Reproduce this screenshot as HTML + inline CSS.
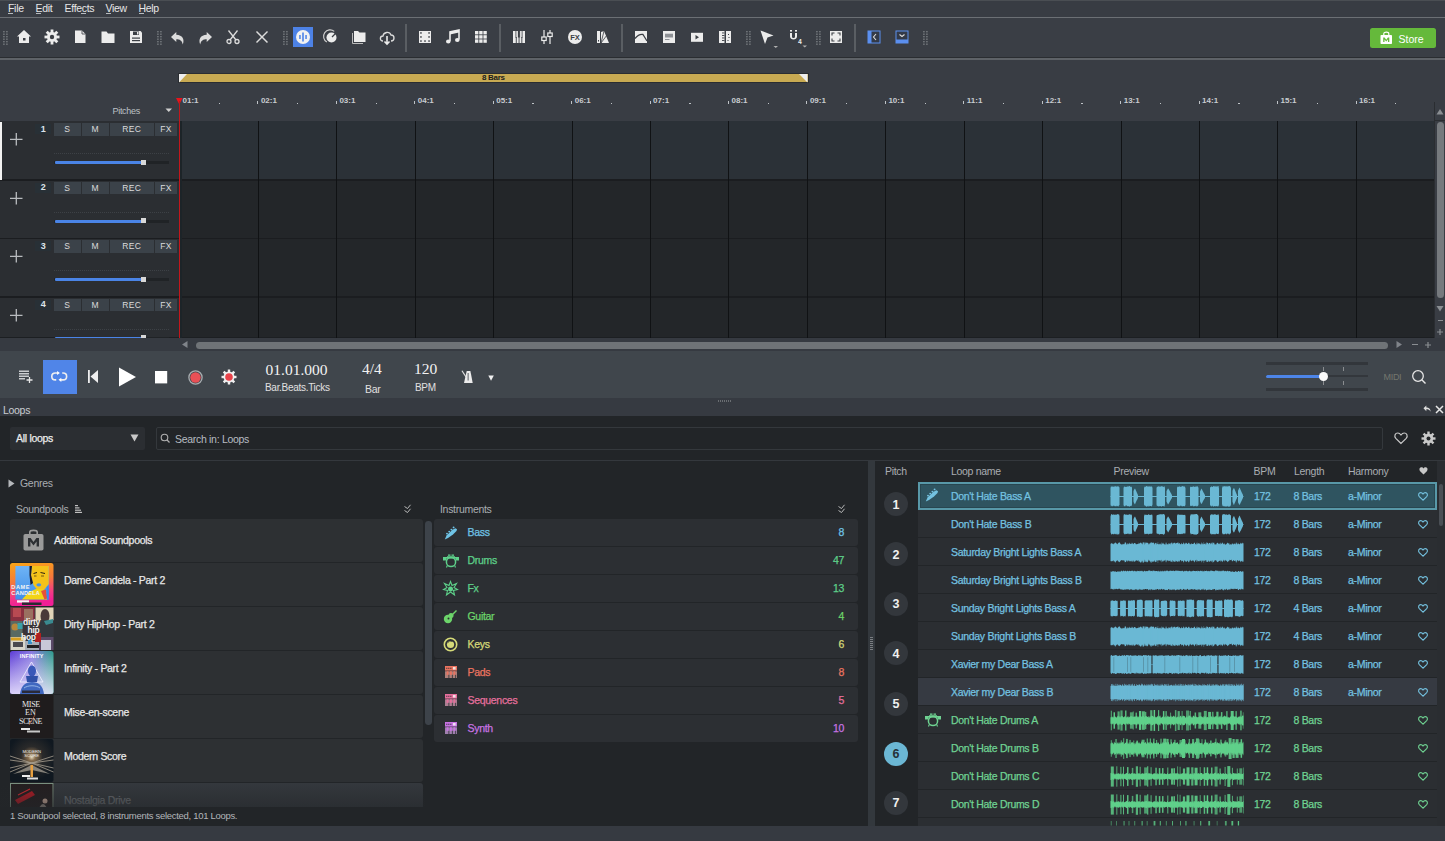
<!DOCTYPE html><html><head><meta charset="utf-8"><style>
*{margin:0;padding:0;box-sizing:border-box}
html,body{width:1445px;height:841px;overflow:hidden;background:#232629;font-family:"Liberation Sans",sans-serif;color:#d0d0d0}
.a{position:absolute}
span.a,.mn{letter-spacing:-0.3px;white-space:nowrap}
.sb{-webkit-text-stroke:0.25px currentColor}
svg{position:absolute;overflow:visible}
.mn{position:absolute;top:2px;font-size:10.5px;line-height:12px;color:#e6e6e6}
.tb{position:absolute;top:121px;width:179px;height:59px;background:#2b2e32}
.btn{position:absolute;height:12.5px;background:#3b4249;color:#dcdcdc;font-size:8.5px;text-align:center;line-height:13px;letter-spacing:.3px}
.rl{position:absolute;top:96px;font-size:8px;font-weight:bold;color:#c8ccd0}
.tk{position:absolute;width:1px;background:#bfc3c7}
</style></head><body>
<div class="a" style="left:0;top:0;width:1445px;height:17px;background:#383c43;border-top:1px solid #4a4e53"></div>
<span class="mn" style="left:8px">File</span>
<div class="a" style="left:8px;top:12.5px;width:5px;height:1px;background:#b8bcc0"></div>
<span class="mn" style="left:35.5px">Edit</span>
<div class="a" style="left:35.5px;top:12.5px;width:5px;height:1px;background:#b8bcc0"></div>
<span class="mn" style="left:64.5px">Effects</span>
<div class="a" style="left:81px;top:12.5px;width:4.5px;height:1px;background:#b8bcc0"></div>
<span class="mn" style="left:105.5px">View</span>
<div class="a" style="left:105.5px;top:12.5px;width:5.5px;height:1px;background:#b8bcc0"></div>
<span class="mn" style="left:138.5px">Help</span>
<div class="a" style="left:138.5px;top:12.5px;width:5.5px;height:1px;background:#b8bcc0"></div>
<div class="a" style="left:0;top:17px;width:1445px;height:1px;background:#6b6f74"></div>
<div class="a" style="left:0;top:18px;width:1445px;height:39px;background:#3a3e45"></div>
<div class="a" style="left:0;top:57px;width:1445px;height:1px;background:#2a2d31"></div>
<div class="a" style="left:0;top:58px;width:1445px;height:1.8px;background:#5e6267"></div>
<svg style="left:3.1px;top:30.5px" width="5" height="15"><rect x="0" y="0" width="1.8" height="1.4" fill="#6c7075"/><rect x="0" y="2.5" width="1.8" height="1.4" fill="#6c7075"/><rect x="0" y="5" width="1.8" height="1.4" fill="#6c7075"/><rect x="0" y="7.5" width="1.8" height="1.4" fill="#6c7075"/><rect x="0" y="10" width="1.8" height="1.4" fill="#6c7075"/><rect x="0" y="12.5" width="1.8" height="1.4" fill="#6c7075"/><rect x="3" y="0" width="1.8" height="1.4" fill="#6c7075"/><rect x="3" y="2.5" width="1.8" height="1.4" fill="#6c7075"/><rect x="3" y="5" width="1.8" height="1.4" fill="#6c7075"/><rect x="3" y="7.5" width="1.8" height="1.4" fill="#6c7075"/><rect x="3" y="10" width="1.8" height="1.4" fill="#6c7075"/><rect x="3" y="12.5" width="1.8" height="1.4" fill="#6c7075"/></svg>
<svg style="left:16.0px;top:29.0px" width="16" height="16" viewBox="0 0 16 16"><path d="M8 1 L15 7.5 L13 7.5 L13 14 L3 14 L3 7.5 L1 7.5 Z" fill="#ececec"/><rect x="7" y="9" width="2.5" height="2.5" fill="#3a3e44"/></svg>
<svg style="left:43.5px;top:29.0px" width="16" height="16" viewBox="0 0 16 16"><g fill="#ececec"><circle cx="8" cy="8" r="5"/><rect x="6.6" y="0.5" width="2.8" height="4" transform="rotate(0 8 8)"/><rect x="6.6" y="0.5" width="2.8" height="4" transform="rotate(45 8 8)"/><rect x="6.6" y="0.5" width="2.8" height="4" transform="rotate(90 8 8)"/><rect x="6.6" y="0.5" width="2.8" height="4" transform="rotate(135 8 8)"/><rect x="6.6" y="0.5" width="2.8" height="4" transform="rotate(180 8 8)"/><rect x="6.6" y="0.5" width="2.8" height="4" transform="rotate(225 8 8)"/><rect x="6.6" y="0.5" width="2.8" height="4" transform="rotate(270 8 8)"/><rect x="6.6" y="0.5" width="2.8" height="4" transform="rotate(315 8 8)"/></g><circle cx="8" cy="8" r="2.2" fill="#3a3e44"/></svg>
<svg style="left:72.0px;top:29.0px" width="16" height="16" viewBox="0 0 16 16"><path d="M3 1.5 L10 1.5 L13.5 5 L13.5 14 L3 14 Z" fill="#ececec"/><path d="M10 1.5 L10 5 L13.5 5" fill="none" stroke="#3a3e44" stroke-width="0.8"/></svg>
<svg style="left:100.0px;top:29.0px" width="16" height="16" viewBox="0 0 16 16"><path d="M1.5 2.5 L6.5 2.5 L8 4.5 L14.5 4.5 L14.5 14 L1.5 14 Z" fill="#ececec"/></svg>
<svg style="left:127.5px;top:29.0px" width="16" height="16" viewBox="0 0 16 16"><path d="M2 2 L12.5 2 L14 3.5 L14 14 L2 14 Z" fill="#ececec"/><rect x="5" y="2.5" width="6" height="3.5" fill="#3a3e44"/><rect x="9" y="3" width="1.5" height="2.5" fill="#ececec"/><rect x="4" y="8.5" width="8" height="1.2" fill="#3a3e44"/><rect x="4" y="11" width="8" height="1.2" fill="#3a3e44"/></svg>
<svg style="left:156.6px;top:30.5px" width="5" height="15"><rect x="0" y="0" width="1.8" height="1.4" fill="#6c7075"/><rect x="0" y="2.5" width="1.8" height="1.4" fill="#6c7075"/><rect x="0" y="5" width="1.8" height="1.4" fill="#6c7075"/><rect x="0" y="7.5" width="1.8" height="1.4" fill="#6c7075"/><rect x="0" y="10" width="1.8" height="1.4" fill="#6c7075"/><rect x="0" y="12.5" width="1.8" height="1.4" fill="#6c7075"/><rect x="3" y="0" width="1.8" height="1.4" fill="#6c7075"/><rect x="3" y="2.5" width="1.8" height="1.4" fill="#6c7075"/><rect x="3" y="5" width="1.8" height="1.4" fill="#6c7075"/><rect x="3" y="7.5" width="1.8" height="1.4" fill="#6c7075"/><rect x="3" y="10" width="1.8" height="1.4" fill="#6c7075"/><rect x="3" y="12.5" width="1.8" height="1.4" fill="#6c7075"/></svg>
<svg style="left:169.5px;top:30.0px" width="16" height="16" viewBox="0 0 16 16"><path d="M6.3 2 L1 7 L6.3 12 L6.3 9.2 C9.8 9.2 12 10.5 12.8 14.5 C14.8 9.5 12.5 5 6.3 4.8 Z" fill="#dcdcdc"/></svg>
<svg style="left:197.0px;top:30.0px" width="16" height="16" viewBox="0 0 16 16"><path d="M9.7 2 L15 7 L9.7 12 L9.7 9.2 C6.2 9.2 4 10.5 3.2 14.5 C1.2 9.5 3.5 5 9.7 4.8 Z" fill="#dcdcdc"/></svg>
<svg style="left:225.0px;top:29.0px" width="16" height="16" viewBox="0 0 16 16"><g stroke="#dcdcdc" stroke-width="1.3" fill="none"><path d="M3.5 1.5 L11 11"/><path d="M12.5 1.5 L5 11"/><circle cx="4" cy="12.5" r="2"/><circle cx="12" cy="12.5" r="2"/></g></svg>
<svg style="left:253.5px;top:29.0px" width="16" height="16" viewBox="0 0 16 16"><g stroke="#dcdcdc" stroke-width="1.5"><path d="M2.5 2.5 L13.5 13.5"/><path d="M13.5 2.5 L2.5 13.5"/></g></svg>
<svg style="left:282.6px;top:30.5px" width="5" height="15"><rect x="0" y="0" width="1.8" height="1.4" fill="#6c7075"/><rect x="0" y="2.5" width="1.8" height="1.4" fill="#6c7075"/><rect x="0" y="5" width="1.8" height="1.4" fill="#6c7075"/><rect x="0" y="7.5" width="1.8" height="1.4" fill="#6c7075"/><rect x="0" y="10" width="1.8" height="1.4" fill="#6c7075"/><rect x="0" y="12.5" width="1.8" height="1.4" fill="#6c7075"/><rect x="3" y="0" width="1.8" height="1.4" fill="#6c7075"/><rect x="3" y="2.5" width="1.8" height="1.4" fill="#6c7075"/><rect x="3" y="5" width="1.8" height="1.4" fill="#6c7075"/><rect x="3" y="7.5" width="1.8" height="1.4" fill="#6c7075"/><rect x="3" y="10" width="1.8" height="1.4" fill="#6c7075"/><rect x="3" y="12.5" width="1.8" height="1.4" fill="#6c7075"/></svg>
<div class="a" style="left:293px;top:27px;width:20px;height:20px;background:#4d82e6"></div>
<svg style="left:295.0px;top:29.0px" width="16" height="16" viewBox="0 0 16 16"><circle cx="8" cy="8" r="7" fill="#f2f2f2"/><g fill="#4d82e6"><rect x="4.2" y="6" width="1.5" height="4"/><rect x="7.2" y="3.5" width="1.6" height="9"/><rect x="10.3" y="6" width="1.5" height="4"/></g></svg>
<svg style="left:322.5px;top:29.0px" width="16" height="16" viewBox="0 0 16 16"><path d="M11.25 2.37 A6.5 6.5 0 1 0 3.82 12.98" fill="none" stroke="#d0d0d0" stroke-width="1.1"/><circle cx="8.5" cy="8.5" r="5" fill="#ececec"/><path d="M9 8 L12.5 4.5" stroke="#3a3e44" stroke-width="1.2"/></svg>
<svg style="left:351.0px;top:29.0px" width="16" height="16" viewBox="0 0 16 16"><path d="M1.5 4 L1.5 14.5 L12 14.5" fill="none" stroke="#bbb" stroke-width="1"/><path d="M3 2 L7 2 L8.5 3.5 L14.5 3.5 L14.5 13 L3 13 Z" fill="#ececec"/></svg>
<svg style="left:378.5px;top:28.5px" width="16" height="17" viewBox="0 0 16 17"><path d="M4 12 C0.5 12 0.5 7 4 7 C4.5 3 10.5 2 12 6 C16 6 16 12 12 12" fill="none" stroke="#dcdcdc" stroke-width="1.3"/><path d="M8 7 L8 15 M5.5 12.5 L8 15 L10.5 12.5" stroke="#ececec" stroke-width="1.6" fill="none"/></svg>
<div class="a" style="left:405px;top:24px;width:2px;height:28px;background:#5a5e63"></div>
<svg style="left:416.5px;top:29.0px" width="16" height="16" viewBox="0 0 16 16"><rect x="2" y="2" width="12" height="12" fill="#ececec"/><g fill="#3a3e44"><rect x="3.2" y="3.2" width="1.5" height="1.5"/><rect x="11.3" y="3.2" width="1.5" height="1.5"/><rect x="3.2" y="11.3" width="1.5" height="1.5"/><rect x="7.25" y="11.3" width="1.5" height="1.5"/><rect x="11.3" y="11.3" width="1.5" height="1.5"/><rect x="3.2" y="7.2" width="1.5" height="1.5"/><rect x="11.3" y="7.2" width="1.5" height="1.5"/></g></svg>
<svg style="left:444.5px;top:29.0px" width="16" height="16" viewBox="0 0 16 16"><path d="M5 12 L5 3 L14 1 L14 10.5" fill="none" stroke="#ececec" stroke-width="1.6"/><path d="M5 3 L14 1 L14 3.5 L5 5.5 Z" fill="#ececec"/><ellipse cx="3.3" cy="12.5" rx="2.3" ry="1.9" fill="#ececec"/><ellipse cx="12.3" cy="11" rx="2.3" ry="1.9" fill="#ececec"/></svg>
<svg style="left:472.5px;top:29.0px" width="16" height="16" viewBox="0 0 16 16"><rect x="2.0" y="2.0" width="3.4" height="3.4" fill="#ececec"/><rect x="2.0" y="6.2" width="3.4" height="3.4" fill="#ececec"/><rect x="2.0" y="10.4" width="3.4" height="3.4" fill="#ececec"/><rect x="6.2" y="2.0" width="3.4" height="3.4" fill="#ececec"/><rect x="6.2" y="6.2" width="3.4" height="3.4" fill="#ececec"/><rect x="6.2" y="10.4" width="3.4" height="3.4" fill="#ececec"/><rect x="10.4" y="2.0" width="3.4" height="3.4" fill="#ececec"/><rect x="10.4" y="6.2" width="3.4" height="3.4" fill="#ececec"/><rect x="10.4" y="10.4" width="3.4" height="3.4" fill="#ececec"/></svg>
<div class="a" style="left:499px;top:24px;width:2px;height:28px;background:#5a5e63"></div>
<svg style="left:511.0px;top:29.0px" width="16" height="16" viewBox="0 0 16 16"><rect x="2" y="2" width="12" height="12" fill="#ececec"/><g fill="#3a3e44"><rect x="4.8" y="8" width="0.9" height="6"/><rect x="7.6" y="8" width="0.9" height="6"/><rect x="10.4" y="8" width="0.9" height="6"/><rect x="4.2" y="2" width="1.9" height="6.5"/><rect x="7" y="2" width="1.9" height="6.5"/><rect x="9.9" y="2" width="1.9" height="6.5"/></g><g fill="#ececec"><rect x="4.6" y="2" width="1.1" height="6"/><rect x="10.3" y="2" width="1.1" height="6"/></g></svg>
<svg style="left:539.0px;top:29.0px" width="16" height="16" viewBox="0 0 16 16"><g stroke="#ececec" stroke-width="1.2"><path d="M5 1 L5 15"/><path d="M11 1 L11 15"/></g><rect x="2.8" y="8" width="4.4" height="3.5" fill="#3a3e44" stroke="#ececec" stroke-width="1.2"/><rect x="8.8" y="4" width="4.4" height="3.5" fill="#3a3e44" stroke="#ececec" stroke-width="1.2"/></svg>
<svg style="left:567.0px;top:29.0px" width="16" height="16" viewBox="0 0 16 16"><circle cx="8" cy="8" r="7" fill="#ececec"/><text x="8" y="10.8" text-anchor="middle" font-size="7.5" font-weight="bold" font-family="Liberation Sans" fill="#3a3e44">FX</text></svg>
<svg style="left:595.0px;top:29.0px" width="16" height="16" viewBox="0 0 16 16"><rect x="2" y="2" width="3" height="12" fill="#ececec"/><path d="M6 14 L6 3 L9 2 L14 14 Z" fill="#ececec"/><path d="M6 14 L9 2 M6 14 L12 6" stroke="#3a3e44" stroke-width="0.8"/><rect x="3" y="11" width="1" height="1.5" fill="#3a3e44"/></svg>
<div class="a" style="left:621px;top:24px;width:2px;height:28px;background:#5a5e63"></div>
<svg style="left:633.0px;top:29.0px" width="16" height="16" viewBox="0 0 16 16"><rect x="2" y="2" width="12" height="12" fill="#ececec"/><path d="M2 9.5 C4 7 7 5 10 5.5 L14 12" fill="none" stroke="#3a3e44" stroke-width="1.3"/></svg>
<svg style="left:661.0px;top:29.0px" width="16" height="16" viewBox="0 0 16 16"><rect x="2" y="2" width="12" height="12" fill="#ececec"/><rect x="4" y="4.7" width="8" height="3.8" fill="#8d9095"/><rect x="4" y="10" width="4.5" height="1" fill="#8d9095"/></svg>
<svg style="left:689.0px;top:29.0px" width="16" height="16" viewBox="0 0 16 16"><rect x="2" y="3.8" width="12" height="9" fill="#ececec"/><path d="M6.5 6 L10 8.3 L6.5 10.6 Z" fill="#3a3e44"/></svg>
<svg style="left:717.0px;top:29.0px" width="16" height="16" viewBox="0 0 16 16"><rect x="2" y="2" width="5.5" height="12" fill="#ececec"/><rect x="9" y="2" width="5" height="12" fill="#ececec"/><g fill="#3a3e44"><rect x="5" y="3.5" width="2.5" height="0.9"/><rect x="5" y="6" width="2.5" height="0.9"/><rect x="5" y="8.5" width="2.5" height="0.9"/><rect x="5" y="11" width="2.5" height="0.9"/><rect x="11" y="5" width="1" height="1"/><rect x="11.5" y="8" width="1" height="1"/><rect x="10.5" y="11" width="1" height="1"/></g></svg>
<svg style="left:745.6px;top:30.5px" width="5" height="15"><rect x="0" y="0" width="1.8" height="1.4" fill="#6c7075"/><rect x="0" y="2.5" width="1.8" height="1.4" fill="#6c7075"/><rect x="0" y="5" width="1.8" height="1.4" fill="#6c7075"/><rect x="0" y="7.5" width="1.8" height="1.4" fill="#6c7075"/><rect x="0" y="10" width="1.8" height="1.4" fill="#6c7075"/><rect x="0" y="12.5" width="1.8" height="1.4" fill="#6c7075"/><rect x="3" y="0" width="1.8" height="1.4" fill="#6c7075"/><rect x="3" y="2.5" width="1.8" height="1.4" fill="#6c7075"/><rect x="3" y="5" width="1.8" height="1.4" fill="#6c7075"/><rect x="3" y="7.5" width="1.8" height="1.4" fill="#6c7075"/><rect x="3" y="10" width="1.8" height="1.4" fill="#6c7075"/><rect x="3" y="12.5" width="1.8" height="1.4" fill="#6c7075"/></svg>
<svg style="left:758.7px;top:29.799999999999997px" width="20" height="19" viewBox="0 0 20 19"><path d="M1.5 0.5 L14.5 5.5 L8.5 7.5 L6 14 Z" fill="#ececec"/><path d="M14.5 16 L19 16 L16.75 18 Z" fill="#b0b0b0"/></svg>
<svg style="left:788.5px;top:30.0px" width="20" height="19" viewBox="0 0 20 19"><rect x="1" y="0" width="2" height="1.6" fill="#ececec"/><rect x="6" y="0" width="2" height="1.6" fill="#ececec"/><path d="M1 3 L3 3 L3 6.5 C3 8.5 6 8.5 6 6.5 L6 3 L8 3 L8 6.5 C8 10.5 1 10.5 1 6.5 Z" fill="#ececec"/><text x="9" y="14" font-size="6.5" font-weight="bold" font-family="Liberation Mono" fill="#ececec">4</text><path d="M13.5 15.5 L18 15.5 L15.75 17.5 Z" fill="#b0b0b0"/></svg>
<svg style="left:815.6px;top:30.5px" width="5" height="15"><rect x="0" y="0" width="1.8" height="1.4" fill="#6c7075"/><rect x="0" y="2.5" width="1.8" height="1.4" fill="#6c7075"/><rect x="0" y="5" width="1.8" height="1.4" fill="#6c7075"/><rect x="0" y="7.5" width="1.8" height="1.4" fill="#6c7075"/><rect x="0" y="10" width="1.8" height="1.4" fill="#6c7075"/><rect x="0" y="12.5" width="1.8" height="1.4" fill="#6c7075"/><rect x="3" y="0" width="1.8" height="1.4" fill="#6c7075"/><rect x="3" y="2.5" width="1.8" height="1.4" fill="#6c7075"/><rect x="3" y="5" width="1.8" height="1.4" fill="#6c7075"/><rect x="3" y="7.5" width="1.8" height="1.4" fill="#6c7075"/><rect x="3" y="10" width="1.8" height="1.4" fill="#6c7075"/><rect x="3" y="12.5" width="1.8" height="1.4" fill="#6c7075"/></svg>
<svg style="left:828.0px;top:29.0px" width="16" height="16" viewBox="0 0 16 16"><rect x="2" y="2" width="12" height="12" fill="#ececec"/><path d="M4 6.5 L4 4 L6.5 4 M9.5 4 L12 4 L12 6.5 M12 9.5 L12 12 L9.5 12 M6.5 12 L4 12 L4 9.5" fill="none" stroke="#3a3e44" stroke-width="1.1"/></svg>
<div class="a" style="left:854px;top:24px;width:2px;height:28px;background:#5a5e63"></div>
<svg style="left:866.0px;top:29.0px" width="16" height="16" viewBox="0 0 16 16"><rect x="2" y="2" width="12" height="12" fill="#333a48" stroke="#5b8fef" stroke-width="1"/><rect x="2" y="2" width="3.5" height="12" fill="#5b8fef"/><path d="M10 5 L7.5 8 L10 11" fill="none" stroke="#ddd" stroke-width="1.1"/></svg>
<svg style="left:894.0px;top:29.0px" width="16" height="16" viewBox="0 0 16 16"><rect x="2" y="2" width="12" height="12" fill="#333a48" stroke="#5b8fef" stroke-width="1"/><rect x="2" y="10.5" width="12" height="3.5" fill="#5b8fef"/><path d="M5.5 5.5 L8 7.5 L10.5 5.5" fill="none" stroke="#ddd" stroke-width="1.1"/></svg>
<svg style="left:923.1px;top:30.5px" width="5" height="15"><rect x="0" y="0" width="1.8" height="1.4" fill="#6c7075"/><rect x="0" y="2.5" width="1.8" height="1.4" fill="#6c7075"/><rect x="0" y="5" width="1.8" height="1.4" fill="#6c7075"/><rect x="0" y="7.5" width="1.8" height="1.4" fill="#6c7075"/><rect x="0" y="10" width="1.8" height="1.4" fill="#6c7075"/><rect x="0" y="12.5" width="1.8" height="1.4" fill="#6c7075"/><rect x="3" y="0" width="1.8" height="1.4" fill="#6c7075"/><rect x="3" y="2.5" width="1.8" height="1.4" fill="#6c7075"/><rect x="3" y="5" width="1.8" height="1.4" fill="#6c7075"/><rect x="3" y="7.5" width="1.8" height="1.4" fill="#6c7075"/><rect x="3" y="10" width="1.8" height="1.4" fill="#6c7075"/><rect x="3" y="12.5" width="1.8" height="1.4" fill="#6c7075"/></svg>
<div class="a" style="left:1369.5px;top:28px;width:66px;height:20px;background:#65b93b;border-radius:2.5px"></div>
<svg style="left:1380px;top:31px" width="13" height="14" viewBox="0 0 13 14"><path d="M3.8 4.5 L3.8 2.8 C3.8 0.6 8.8 0.6 8.8 2.8 L8.8 4.5" fill="none" stroke="#fff" stroke-width="1.2"/><rect x="0.5" y="4" width="11.5" height="9" rx="0.8" fill="#fff"/><path d="M3.2 11 L3.2 6.5 L4.6 6.5 L6.25 8.8 L7.9 6.5 L9.3 6.5 L9.3 11 L8 11 L8 8.6 L6.25 10.6 L4.5 8.6 L4.5 11 Z" fill="#65b93b"/></svg>
<span class="a" style="left:1398.5px;top:32.5px;font-size:10.5px;line-height:12px;color:#fff;letter-spacing:0">Store</span>
<div class="a" style="left:0;top:59.8px;width:1445px;height:61.2px;background:#393d44"></div>
<div class="a" style="left:178px;top:72.5px;width:631px;height:10.5px;background:#2a2d31"></div>
<div class="a" style="left:179px;top:73.5px;width:628.5px;height:8.5px;background:#c8aa52"></div>
<svg style="left:179px;top:73.5px" width="9" height="9"><path d="M0 0 L8 0 L0 8.5 Z" fill="#eeeeee"/></svg>
<svg style="left:799px;top:73.5px" width="9" height="9"><path d="M0 0 L8.5 0 L8.5 8.5 Z" fill="#eeeeee"/></svg>
<span class="a" style="left:482px;top:73px;font-size:8px;font-weight:bold;color:#1b1b1b;line-height:10px">8 Bars</span>
<span class="rl" style="left:182.5px;line-height:10px">01:1</span>
<div class="tk" style="left:218.7px;top:102.5px;height:1.5px;width:1.3px"></div>
<span class="rl" style="left:260.9px;line-height:10px">02:1</span>
<div class="tk" style="left:257.4px;top:101px;height:3px"></div>
<div class="tk" style="left:297.1px;top:102.5px;height:1.5px;width:1.3px"></div>
<span class="rl" style="left:339.4px;line-height:10px">03:1</span>
<div class="tk" style="left:335.9px;top:101px;height:3px"></div>
<div class="tk" style="left:375.6px;top:102.5px;height:1.5px;width:1.3px"></div>
<span class="rl" style="left:417.8px;line-height:10px">04:1</span>
<div class="tk" style="left:414.3px;top:101px;height:3px"></div>
<div class="tk" style="left:454.0px;top:102.5px;height:1.5px;width:1.3px"></div>
<span class="rl" style="left:496.2px;line-height:10px">05:1</span>
<div class="tk" style="left:492.7px;top:101px;height:3px"></div>
<div class="tk" style="left:532.4px;top:102.5px;height:1.5px;width:1.3px"></div>
<span class="rl" style="left:574.7px;line-height:10px">06:1</span>
<div class="tk" style="left:571.2px;top:101px;height:3px"></div>
<div class="tk" style="left:610.9px;top:102.5px;height:1.5px;width:1.3px"></div>
<span class="rl" style="left:653.1px;line-height:10px">07:1</span>
<div class="tk" style="left:649.6px;top:101px;height:3px"></div>
<div class="tk" style="left:689.3px;top:102.5px;height:1.5px;width:1.3px"></div>
<span class="rl" style="left:731.5px;line-height:10px">08:1</span>
<div class="tk" style="left:728.0px;top:101px;height:3px"></div>
<div class="tk" style="left:767.7px;top:102.5px;height:1.5px;width:1.3px"></div>
<span class="rl" style="left:809.9px;line-height:10px">09:1</span>
<div class="tk" style="left:806.4px;top:101px;height:3px"></div>
<div class="tk" style="left:846.1px;top:102.5px;height:1.5px;width:1.3px"></div>
<span class="rl" style="left:888.4px;line-height:10px">10:1</span>
<div class="tk" style="left:884.9px;top:101px;height:3px"></div>
<div class="tk" style="left:924.6px;top:102.5px;height:1.5px;width:1.3px"></div>
<span class="rl" style="left:966.8px;line-height:10px">11:1</span>
<div class="tk" style="left:963.3px;top:101px;height:3px"></div>
<div class="tk" style="left:1003.0px;top:102.5px;height:1.5px;width:1.3px"></div>
<span class="rl" style="left:1045.2px;line-height:10px">12:1</span>
<div class="tk" style="left:1041.7px;top:101px;height:3px"></div>
<div class="tk" style="left:1081.4px;top:102.5px;height:1.5px;width:1.3px"></div>
<span class="rl" style="left:1123.7px;line-height:10px">13:1</span>
<div class="tk" style="left:1120.2px;top:101px;height:3px"></div>
<div class="tk" style="left:1159.9px;top:102.5px;height:1.5px;width:1.3px"></div>
<span class="rl" style="left:1202.1px;line-height:10px">14:1</span>
<div class="tk" style="left:1198.6px;top:101px;height:3px"></div>
<div class="tk" style="left:1238.3px;top:102.5px;height:1.5px;width:1.3px"></div>
<span class="rl" style="left:1280.5px;line-height:10px">15:1</span>
<div class="tk" style="left:1277.0px;top:101px;height:3px"></div>
<div class="tk" style="left:1316.7px;top:102.5px;height:1.5px;width:1.3px"></div>
<span class="rl" style="left:1359.0px;line-height:10px">16:1</span>
<div class="tk" style="left:1355.5px;top:101px;height:3px"></div>
<div class="tk" style="left:1395.2px;top:102.5px;height:1.5px;width:1.3px"></div>
<span class="a" style="left:112.5px;top:105.5px;font-size:9px;color:#bcc0c4;line-height:11px">Pitches</span>
<svg style="left:165px;top:108px" width="8" height="5"><path d="M0.5 0.5 L7 0.5 L3.75 4 Z" fill="#cfcfcf"/></svg>
<svg style="left:176.3px;top:97.5px" width="7" height="7"><path d="M0 0 L6.6 0 L3.3 6.5 Z" fill="#e8141b"/></svg>
<div class="a" style="left:0;top:121px;width:1435px;height:217px;background:#1c1f22"></div>
<div class="a" style="left:0;top:121px;width:179px;height:59px;background:#2b2e32"></div>
<div class="a" style="left:179px;top:121px;width:1256px;height:59px;background:#2b3137"></div>
<svg style="left:10px;top:133px" width="13" height="13"><path d="M6.3 0 L6.3 12.5 M0 6.3 L12.5 6.3" stroke="#b9bcbf" stroke-width="1.3"/></svg>
<div class="a" style="left:34.5px;top:124px;width:16.3px;height:10.2px;background:#283036"></div>
<span class="a" style="left:34.5px;width:17px;text-align:center;top:123.5px;font-size:9px;font-weight:bold;color:#dde4ea;line-height:10px">1</span>
<div class="btn" style="left:53.5px;top:123.3px;width:27.5px">S</div>
<div class="btn" style="left:81.5px;top:123.3px;width:27.5px">M</div>
<div class="btn" style="left:110px;top:123.3px;width:43.5px">REC</div>
<div class="btn" style="left:155px;top:123.3px;width:22px">FX</div>
<div class="a" style="left:54px;top:153px;width:115px;height:1px;background:repeating-linear-gradient(90deg,#3d4146 0 1px,transparent 1px 2px)"></div>
<div class="a" style="left:54px;top:161px;width:115px;height:3px;background:#202326"></div>
<div class="a" style="left:54.5px;top:161px;width:88px;height:3px;background:#4a84e6;border-radius:1px"></div>
<div class="a" style="left:141px;top:159.5px;width:4.5px;height:5px;background:#d8d8d8"></div>
<div class="a" style="left:0;top:179.5px;width:179px;height:59px;background:#2b2e32"></div>
<div class="a" style="left:179px;top:179.5px;width:1256px;height:59px;background:#232629"></div>
<svg style="left:10px;top:191.5px" width="13" height="13"><path d="M6.3 0 L6.3 12.5 M0 6.3 L12.5 6.3" stroke="#b9bcbf" stroke-width="1.3"/></svg>
<div class="a" style="left:34.5px;top:182.5px;width:16.3px;height:10.2px;background:#283036"></div>
<span class="a" style="left:34.5px;width:17px;text-align:center;top:182.0px;font-size:9px;font-weight:bold;color:#dde4ea;line-height:10px">2</span>
<div class="btn" style="left:53.5px;top:181.8px;width:27.5px">S</div>
<div class="btn" style="left:81.5px;top:181.8px;width:27.5px">M</div>
<div class="btn" style="left:110px;top:181.8px;width:43.5px">REC</div>
<div class="btn" style="left:155px;top:181.8px;width:22px">FX</div>
<div class="a" style="left:54px;top:211.5px;width:115px;height:1px;background:repeating-linear-gradient(90deg,#3d4146 0 1px,transparent 1px 2px)"></div>
<div class="a" style="left:54px;top:219.5px;width:115px;height:3px;background:#202326"></div>
<div class="a" style="left:54.5px;top:219.5px;width:88px;height:3px;background:#4a84e6;border-radius:1px"></div>
<div class="a" style="left:141px;top:218.0px;width:4.5px;height:5px;background:#d8d8d8"></div>
<div class="a" style="left:0;top:238px;width:179px;height:59px;background:#2b2e32"></div>
<div class="a" style="left:179px;top:238px;width:1256px;height:59px;background:#232629"></div>
<svg style="left:10px;top:250px" width="13" height="13"><path d="M6.3 0 L6.3 12.5 M0 6.3 L12.5 6.3" stroke="#b9bcbf" stroke-width="1.3"/></svg>
<div class="a" style="left:34.5px;top:241px;width:16.3px;height:10.2px;background:#283036"></div>
<span class="a" style="left:34.5px;width:17px;text-align:center;top:240.5px;font-size:9px;font-weight:bold;color:#dde4ea;line-height:10px">3</span>
<div class="btn" style="left:53.5px;top:240.3px;width:27.5px">S</div>
<div class="btn" style="left:81.5px;top:240.3px;width:27.5px">M</div>
<div class="btn" style="left:110px;top:240.3px;width:43.5px">REC</div>
<div class="btn" style="left:155px;top:240.3px;width:22px">FX</div>
<div class="a" style="left:54px;top:270px;width:115px;height:1px;background:repeating-linear-gradient(90deg,#3d4146 0 1px,transparent 1px 2px)"></div>
<div class="a" style="left:54px;top:278px;width:115px;height:3px;background:#202326"></div>
<div class="a" style="left:54.5px;top:278px;width:88px;height:3px;background:#4a84e6;border-radius:1px"></div>
<div class="a" style="left:141px;top:276.5px;width:4.5px;height:5px;background:#d8d8d8"></div>
<div class="a" style="left:0;top:296.5px;width:179px;height:40px;background:#2b2e32"></div>
<div class="a" style="left:179px;top:296.5px;width:1256px;height:40px;background:#232629"></div>
<svg style="left:10px;top:308.5px" width="13" height="13"><path d="M6.3 0 L6.3 12.5 M0 6.3 L12.5 6.3" stroke="#b9bcbf" stroke-width="1.3"/></svg>
<div class="a" style="left:34.5px;top:299.5px;width:16.3px;height:10.2px;background:#283036"></div>
<span class="a" style="left:34.5px;width:17px;text-align:center;top:299.0px;font-size:9px;font-weight:bold;color:#dde4ea;line-height:10px">4</span>
<div class="btn" style="left:53.5px;top:298.8px;width:27.5px">S</div>
<div class="btn" style="left:81.5px;top:298.8px;width:27.5px">M</div>
<div class="btn" style="left:110px;top:298.8px;width:43.5px">REC</div>
<div class="btn" style="left:155px;top:298.8px;width:22px">FX</div>
<div class="a" style="left:54px;top:328.5px;width:115px;height:1px;background:repeating-linear-gradient(90deg,#3d4146 0 1px,transparent 1px 2px)"></div>
<div class="a" style="left:54px;top:336.5px;width:115px;height:3px;background:#202326"></div>
<div class="a" style="left:54.5px;top:336.5px;width:88px;height:3px;background:#4a84e6;border-radius:1px"></div>
<div class="a" style="left:141px;top:335.0px;width:4.5px;height:5px;background:#d8d8d8"></div>
<div class="a" style="left:0;top:179.1px;width:1435px;height:1.8px;background:#1b1d20"></div>
<div class="a" style="left:0;top:237.6px;width:1435px;height:1.8px;background:#1b1d20"></div>
<div class="a" style="left:0;top:296.1px;width:1435px;height:1.8px;background:#1b1d20"></div>
<div class="a" style="left:0;top:121.5px;width:1.5px;height:58.5px;background:#f2f2f2"></div>
<div class="a" style="left:257.7px;top:121px;width:1px;height:217px;background:#101214"></div>
<div class="a" style="left:336.2px;top:121px;width:1px;height:217px;background:#101214"></div>
<div class="a" style="left:414.6px;top:121px;width:1px;height:217px;background:#101214"></div>
<div class="a" style="left:493.0px;top:121px;width:1px;height:217px;background:#101214"></div>
<div class="a" style="left:571.5px;top:121px;width:1px;height:217px;background:#101214"></div>
<div class="a" style="left:649.9px;top:121px;width:1px;height:217px;background:#101214"></div>
<div class="a" style="left:728.3px;top:121px;width:1px;height:217px;background:#101214"></div>
<div class="a" style="left:806.7px;top:121px;width:1px;height:217px;background:#101214"></div>
<div class="a" style="left:885.2px;top:121px;width:1px;height:217px;background:#101214"></div>
<div class="a" style="left:963.6px;top:121px;width:1px;height:217px;background:#101214"></div>
<div class="a" style="left:1042.0px;top:121px;width:1px;height:217px;background:#101214"></div>
<div class="a" style="left:1120.5px;top:121px;width:1px;height:217px;background:#101214"></div>
<div class="a" style="left:1198.9px;top:121px;width:1px;height:217px;background:#101214"></div>
<div class="a" style="left:1277.3px;top:121px;width:1px;height:217px;background:#101214"></div>
<div class="a" style="left:1355.8px;top:121px;width:1px;height:217px;background:#101214"></div>
<div class="a" style="left:1434.2px;top:121px;width:1px;height:217px;background:#101214"></div>
<div class="a" style="left:180.3px;top:121px;width:1.7px;height:217px;background:#1c2428"></div>
<div class="a" style="left:178.8px;top:101px;width:1.6px;height:237px;background:#c4161b"></div>
<div class="a" style="left:1434.5px;top:102px;width:10.5px;height:236px;background:#393d44"></div>
<div class="a" style="left:1433.8px;top:102px;width:1.2px;height:236px;background:#2a2d31"></div>
<div class="a" style="left:1434.5px;top:119.5px;width:10.5px;height:1.5px;background:#2a2d31"></div>
<svg style="left:1435px;top:107.5px" width="10" height="8"><path d="M1.5 6.5 L8.5 6.5 L5 1 Z" fill="#8a8e92"/></svg>
<div class="a" style="left:1437px;top:122px;width:7px;height:176px;background:#767a7e;border-radius:3.5px"></div>
<svg style="left:1435px;top:305px" width="10" height="8"><path d="M1.5 1 L8.5 1 L5 6.5 Z" fill="#8a8e92"/></svg>
<div class="a" style="left:1437.5px;top:320px;width:5px;height:1.2px;background:#8a8e92"></div>
<svg style="left:1436px;top:328px" width="8" height="8"><path d="M4 1 L4 7 M1 4 L7 4" stroke="#8a8e92" stroke-width="1.2"/></svg>
<div class="a" style="left:0;top:338px;width:1445px;height:13px;background:#363a41"></div>
<div class="a" style="left:0;top:350.5px;width:1445px;height:47.8px;background:#40464c"></div>
<svg style="left:181px;top:340px" width="8" height="9"><path d="M6.5 1 L6.5 8 L1 4.5 Z" fill="#80848a"/></svg>
<div class="a" style="left:196px;top:341.5px;width:1192px;height:7px;background:#6f7377;border-radius:3.5px"></div>
<svg style="left:1395px;top:340px" width="8" height="9"><path d="M1.5 1 L1.5 8 L7 4.5 Z" fill="#80848a"/></svg>
<div class="a" style="left:1412px;top:344px;width:6px;height:1.2px;background:#8a8e92"></div>
<svg style="left:1424px;top:340.5px" width="8" height="8"><path d="M4 1 L4 7 M1 4 L7 4" stroke="#8a8e92" stroke-width="1.2"/></svg>
<svg style="left:19px;top:370px" width="14" height="14"><g fill="#c9cccf"><rect x="0" y="0.5" width="10" height="1.5"/><rect x="0" y="3" width="10" height="1.5"/><rect x="0" y="5.5" width="10" height="1.5"/><rect x="0" y="8" width="6" height="1.5"/></g><path d="M10.5 7 L10.5 13 M7.5 10 L13.5 10" stroke="#e6e6e6" stroke-width="1.3"/></svg>
<div class="a" style="left:42.8px;top:360.2px;width:34px;height:34px;background:#5085e8"></div>
<svg style="left:48.8px;top:369px" width="20" height="15" viewBox="-0.5 -0.5 20.5 15.5" transform="scale(0.88)"><path d="M8 3.2 L5.5 3.2 C2.5 3.2 1.3 5 1.3 7.2 C1.3 9.4 2.5 11.2 5.5 11.2 L6.5 11.2" fill="none" stroke="#eee" stroke-width="1.9"/><path d="M7.5 0.8 L10.8 3.2 L7.5 5.6 Z" fill="#fff"/><path d="M12 11.2 L14.5 11.2 C17.5 11.2 18.7 9.4 18.7 7.2 C18.7 5 17.5 3.2 14.5 3.2 L13.5 3.2" fill="none" stroke="#eee" stroke-width="1.9"/><path d="M12.5 8.8 L9.2 11.2 L12.5 13.6 Z" fill="#fff"/></svg>
<svg style="left:87px;top:369px" width="12" height="16"><rect x="1" y="1" width="1.8" height="13" fill="#eee"/><path d="M11 1 L3.5 7.5 L11 14 Z" fill="#eee"/></svg>
<svg style="left:118px;top:367px" width="20" height="20"><path d="M1 0.5 L18 10 L1 19.5 Z" fill="#fff"/></svg>
<svg style="left:154.3px;top:369.9px" width="14" height="14"><rect x="1" y="1" width="12.2" height="12.4" fill="#fff"/></svg>
<svg style="left:186.6px;top:368.5px" width="17" height="17"><circle cx="8.5" cy="8.5" r="6.6" fill="none" stroke="#a8adb0" stroke-width="1.3"/><circle cx="8.5" cy="8.5" r="5.2" fill="#e85056"/></svg>
<svg style="left:221px;top:369px" width="16" height="16"><g fill="#f0f0f0"><circle cx="8" cy="8" r="5.5"/><rect x="6.8" y="0.5" width="2.4" height="3.5" transform="rotate(0 8 8)"/><rect x="6.8" y="0.5" width="2.4" height="3.5" transform="rotate(45 8 8)"/><rect x="6.8" y="0.5" width="2.4" height="3.5" transform="rotate(90 8 8)"/><rect x="6.8" y="0.5" width="2.4" height="3.5" transform="rotate(135 8 8)"/><rect x="6.8" y="0.5" width="2.4" height="3.5" transform="rotate(180 8 8)"/><rect x="6.8" y="0.5" width="2.4" height="3.5" transform="rotate(225 8 8)"/><rect x="6.8" y="0.5" width="2.4" height="3.5" transform="rotate(270 8 8)"/><rect x="6.8" y="0.5" width="2.4" height="3.5" transform="rotate(315 8 8)"/></g><circle cx="8" cy="8" r="3.8" fill="#e8424a"/></svg>
<span class="a" style="left:265.5px;top:360.5px;font-family:'Liberation Serif',serif;letter-spacing:0;font-size:15.5px;color:#f2f2f2;line-height:17px">01.01.000</span>
<span class="a" style="left:265px;top:382px;font-size:10px;color:#e0e0e0;line-height:12px">Bar.Beats.Ticks</span>
<span class="a" style="left:362px;top:360px;font-family:'Liberation Serif',serif;letter-spacing:0;font-size:15.5px;color:#f2f2f2;line-height:17px">4/4</span>
<span class="a" style="left:365px;top:382.5px;font-size:10.5px;color:#e0e0e0;line-height:12px">Bar</span>
<span class="a" style="left:414px;top:360px;font-family:'Liberation Serif',serif;letter-spacing:0;font-size:15.5px;color:#f2f2f2;line-height:17px">120</span>
<span class="a" style="left:415px;top:382px;font-size:10px;color:#e0e0e0;line-height:12px">BPM</span>
<svg style="left:460px;top:369px" width="14" height="16"><path d="M6.7 2 L10.4 2 L12.7 14 L4 14 Z" fill="#ececec"/><rect x="7.5" y="4" width="1.3" height="7.5" fill="#7a7e82"/><path d="M2 1.8 L6.3 8.5" stroke="#e0e0e0" stroke-width="1.2"/></svg>
<svg style="left:487.5px;top:375px" width="7" height="7"><path d="M0.3 0.5 L5.8 0.5 L3.05 5.8 Z" fill="#f0f0f0"/></svg>
<div class="a" style="left:1266px;top:361.5px;width:102px;height:3px;background:#32363b"></div>
<div class="a" style="left:1266px;top:387.5px;width:102px;height:3px;background:#32363b"></div>
<div class="a" style="left:1266px;top:375px;width:102px;height:2px;background:#33373c"></div>
<div class="a" style="left:1266px;top:374.5px;width:57px;height:3px;background:#4d85e8;border-radius:1.5px"></div>
<div class="a" style="left:1322.5px;top:367px;width:1px;height:3.5px;background:#8a8d90"></div>
<div class="a" style="left:1322.5px;top:381px;width:1px;height:3.5px;background:#8a8d90"></div>
<div class="a" style="left:1343.1px;top:367px;width:1px;height:3.5px;background:#8a8d90"></div>
<div class="a" style="left:1343.1px;top:381px;width:1px;height:3.5px;background:#8a8d90"></div>
<div class="a" style="left:1318.5px;top:371.5px;width:9px;height:9px;background:#fafafa;border-radius:50%"></div>
<span class="a" style="left:1383.5px;top:372px;font-size:9px;color:#74766e;line-height:11px">MIDI</span>
<svg style="left:1411px;top:369px" width="16" height="16"><circle cx="7" cy="7" r="5.3" fill="none" stroke="#e6e6e6" stroke-width="1.3"/><path d="M10.8 10.8 L14.5 14.5" stroke="#e6e6e6" stroke-width="1.4"/></svg>
<div class="a" style="left:0;top:398.3px;width:1445px;height:17.9px;background:#363a41"></div>
<span class="a" style="left:3px;top:404px;font-size:10.5px;color:#c9ccd0;line-height:12px">Loops</span>
<div class="a" style="left:718px;top:399.5px;width:13px;height:2px;background:repeating-linear-gradient(90deg,#6a6e72 0 1px,transparent 1px 2px)"></div>
<svg style="left:1423px;top:405px" width="9" height="8"><path d="M8 7 C8 3.5 6 2.5 3.5 2.5 L3.5 0.5 L0.5 3.5 L3.5 6.5 L3.5 4.5 C5.5 4.5 7 5 8 7 Z" fill="#dcdcdc" transform="scale(0.95)"/></svg>
<svg style="left:1435px;top:405px" width="9" height="9"><path d="M1 1 L8 8 M8 1 L1 8" stroke="#e6e6e6" stroke-width="1.5"/></svg>
<div class="a" style="left:0;top:416.2px;width:1445px;height:409.3px;background:#222528"></div>
<div class="a" style="left:10px;top:427px;width:135px;height:23px;background:#2b2e32;border-radius:2px"></div>
<span class="a sb" style="left:16px;top:432px;font-size:10.5px;color:#eaeaea;line-height:12px">All loops</span>
<svg style="left:130px;top:434px" width="9" height="8"><path d="M0.5 0.5 L8.5 0.5 L4.5 7.5 Z" fill="#c8c8c8"/></svg>
<div class="a" style="left:155.5px;top:426.5px;width:1227px;height:23.5px;border:1px solid #34383c;border-radius:2px"></div>
<svg style="left:160px;top:433px" width="11" height="11"><circle cx="4.5" cy="4.5" r="3.3" fill="none" stroke="#b0b0b0" stroke-width="1.1"/><path d="M7 7 L9.5 9.5" stroke="#b0b0b0" stroke-width="1.2"/></svg>
<span class="a" style="left:175px;top:432.5px;font-size:10.5px;color:#b7bcc2;line-height:12px">Search in: Loops</span>
<svg style="left:1393.5px;top:432px" width="14" height="13"><path d="M7 11.5 L1.8 6.3 C-0.2 4 1.2 1 3.8 1 C5.3 1 6.3 2 7 3 C7.7 2 8.7 1 10.2 1 C12.8 1 14.2 4 12.2 6.3 Z" fill="none" stroke="#c8c8c8" stroke-width="1.2"/></svg>
<svg style="left:1421px;top:431px" width="15" height="15"><g fill="#c9c9c9"><circle cx="7.5" cy="7.5" r="4.8"/><rect x="6.3" y="0.5" width="2.4" height="3.5" transform="rotate(0 7.5 7.5)"/><rect x="6.3" y="0.5" width="2.4" height="3.5" transform="rotate(45 7.5 7.5)"/><rect x="6.3" y="0.5" width="2.4" height="3.5" transform="rotate(90 7.5 7.5)"/><rect x="6.3" y="0.5" width="2.4" height="3.5" transform="rotate(135 7.5 7.5)"/><rect x="6.3" y="0.5" width="2.4" height="3.5" transform="rotate(180 7.5 7.5)"/><rect x="6.3" y="0.5" width="2.4" height="3.5" transform="rotate(225 7.5 7.5)"/><rect x="6.3" y="0.5" width="2.4" height="3.5" transform="rotate(270 7.5 7.5)"/><rect x="6.3" y="0.5" width="2.4" height="3.5" transform="rotate(315 7.5 7.5)"/></g><circle cx="7.5" cy="7.5" r="2" fill="#232629"/></svg>
<div class="a" style="left:0;top:460px;width:1445px;height:1px;background:#34383d"></div>
<svg style="left:8px;top:478.5px" width="7" height="9"><path d="M0.5 0.5 L6.5 4.5 L0.5 8.5 Z" fill="#b5b8bb"/></svg>
<span class="a" style="left:20px;top:477px;font-size:10.5px;color:#a9adb2;line-height:12px">Genres</span>
<span class="a" style="left:16px;top:503px;font-size:10.5px;color:#a9adb2;line-height:12px">Soundpools</span>
<svg style="left:74.5px;top:505px" width="8" height="8"><g fill="#c0c0c0"><rect x="0" y="0" width="3" height="1.2"/><rect x="0" y="2.3" width="4.5" height="1.2"/><rect x="0" y="4.6" width="6" height="1.2"/><rect x="0" y="6.8" width="7" height="1.2"/></g></svg>
<svg style="left:403px;top:503.5px" width="9" height="10"><path d="M1.5 2.5 L4.5 4.5 L7.5 0.8 M1.5 6.5 L4.5 8.5 L7.5 4.8" fill="none" stroke="#c8c8c8" stroke-width="0.9"/></svg>
<svg style="left:837px;top:503.5px" width="9" height="10"><path d="M1.5 2.5 L4.5 4.5 L7.5 0.8 M1.5 6.5 L4.5 8.5 L7.5 4.8" fill="none" stroke="#c8c8c8" stroke-width="0.9"/></svg>
<span class="a" style="left:440px;top:503px;font-size:10.5px;color:#a9adb2;line-height:12px">Instruments</span>
<div class="a" style="left:10px;top:519px;width:412.5px;height:43px;background:#2d3033;border-radius:3px"></div>
<span class="a sb" style="left:54px;top:534px;font-size:10.5px;color:#e8e8e8;line-height:12px">Additional Soundpools</span>
<div class="a" style="left:10px;top:563px;width:412.5px;height:43px;background:#2d3033;border-radius:3px"></div>
<span class="a sb" style="left:64px;top:573.5px;font-size:10.5px;color:#e8e8e8;line-height:12px">Dame Candela - Part 2</span>
<div class="a" style="left:10px;top:607px;width:412.5px;height:43px;background:#2d3033;border-radius:3px"></div>
<span class="a sb" style="left:64px;top:617.5px;font-size:10.5px;color:#e8e8e8;line-height:12px">Dirty HipHop - Part 2</span>
<div class="a" style="left:10px;top:651px;width:412.5px;height:43px;background:#2d3033;border-radius:3px"></div>
<span class="a sb" style="left:64px;top:661.5px;font-size:10.5px;color:#e8e8e8;line-height:12px">Infinity - Part 2</span>
<div class="a" style="left:10px;top:695px;width:412.5px;height:43px;background:#2d3033;border-radius:3px"></div>
<span class="a sb" style="left:64px;top:705.5px;font-size:10.5px;color:#e8e8e8;line-height:12px">Mise-en-scene</span>
<div class="a" style="left:10px;top:739px;width:412.5px;height:43px;background:#2d3033;border-radius:3px"></div>
<span class="a sb" style="left:64px;top:749.5px;font-size:10.5px;color:#e8e8e8;line-height:12px">Modern Score</span>
<div class="a" style="left:10px;top:783px;width:412.5px;height:43px;background:#34383d;border-radius:3px"></div>
<span class="a sb" style="left:64px;top:793.5px;font-size:10.5px;color:#6d7074;line-height:12px">Nostalgia Drive</span>
<svg style="left:23px;top:529px" width="21" height="22" viewBox="0 0 21 22"><path d="M6.8 5.5 L6.8 3 C6.8 0.8 14.2 0.8 14.2 3 L14.2 5.5" fill="none" stroke="#9a9a9a" stroke-width="1.6"/><rect x="0.5" y="5" width="20" height="16.5" rx="1.8" fill="#9a9a9a"/><path d="M5 17.5 L5 9 L7.6 9 L10.5 13 L13.4 9 L16 9 L16 17.5 L13.6 17.5 L13.6 12.6 L10.5 16.5 L7.4 12.6 L7.4 17.5 Z" fill="#2c2f33"/></svg>
<svg style="left:10px;top:563px" width="43.5" height="43" viewBox="0 0 43.5 43"><defs><linearGradient id="g1" x1="0" y1="0" x2="0.15" y2="1"><stop offset="0" stop-color="#f9a516"/><stop offset="0.45" stop-color="#f77a3a"/><stop offset="0.8" stop-color="#f23a86"/><stop offset="1" stop-color="#f01f95"/></linearGradient><linearGradient id="g1b" x1="0" y1="0" x2="0" y2="1"><stop offset="0" stop-color="#6fb4f6"/><stop offset="1" stop-color="#3f8ee8"/></linearGradient></defs><rect width="43.5" height="43" rx="2.5" fill="url(#g1)"/><rect x="5.4" y="3" width="33.3" height="33.6" fill="url(#g1b)"/><path d="M21.5 3 L38.7 3 L38.7 21 L34 27 L28 28 L23.5 22 L21 14 Z" fill="#f4c21a"/><path d="M19.5 3 L22 3 L21 12 L23 20 L20.5 22 L19.5 12 Z" fill="#1a1a2a"/><path d="M12 36.6 L19 29 L26 26 L33 26.5 L37 36.6 Z" fill="#f2d417"/><path d="M23.5 10.5 L27 9.5 M30.5 9.5 L35 10.5" stroke="#2a1e10" stroke-width="1"/><path d="M24 13 L26.5 13 M31 13 L34 13" stroke="#3a2a10" stroke-width="0.7"/><ellipse cx="28.8" cy="21.8" rx="2.4" ry="1.6" fill="#4a92e6"/><path d="M31 28 L36 26.5 L37 35.5 L34.5 36.6 Z" fill="#e8503a"/><path d="M36.5 24 L38.7 22 L38.7 36.6 L37 36.6 Z" fill="#3a8ae8"/><text x="1.3" y="25.8" font-size="5.6" font-weight="bold" letter-spacing="0.6" fill="#f4f4f4" font-family="Liberation Sans">DAME</text><text x="1.3" y="31.6" font-size="5.6" font-weight="bold" letter-spacing="0.2" fill="#f4f4f4" font-family="Liberation Sans">CANDELA</text><rect x="7" y="37.3" width="12" height="2.3" fill="#f6f6f6"/><rect x="12" y="39.5" width="19.5" height="2.5" fill="#2a2a30"/></svg>
<svg style="left:10px;top:607px" width="43.5" height="43" viewBox="0 0 43.5 43"><rect width="43.5" height="43" fill="#3a3438"/><rect x="0.5" y="0.5" width="24" height="13.5" fill="#8a3040"/><rect x="3" y="1" width="8" height="9" fill="#b84a52"/><rect x="14" y="2" width="9" height="11" fill="#9a7060"/><rect x="25.5" y="0.5" width="18" height="13" fill="#e0d4b8"/><ellipse cx="35" cy="9" rx="4.5" ry="7" fill="#4a3a38"/><rect x="30" y="13" width="13.5" height="18" fill="#32383e"/><path d="M34 14 L43 12 L43 16 L36 18 Z" fill="#3a8a90"/><rect x="0.5" y="14" width="12" height="17" fill="#5a6a62"/><circle cx="5" cy="20" r="3.5" fill="#b8863a"/><rect x="7.5" y="16" width="5" height="6" fill="#3aa0a8"/><rect x="0.5" y="30" width="15" height="13" fill="#d8d6ca"/><rect x="1" y="30.5" width="12" height="3" fill="#d8a020"/><rect x="3" y="35" width="10" height="5" fill="#4a4a50"/><rect x="15" y="34" width="14" height="9" fill="#a8b0b8"/><rect x="18" y="33" width="4" height="4" fill="#3a90c8"/><rect x="29" y="30" width="14.5" height="13" fill="#5a4a68"/><rect x="31" y="33" width="10" height="10" fill="#c8c8d8"/><rect x="25" y="26" width="6" height="9" fill="#b02020"/><g font-family="Liberation Sans" font-weight="bold" fill="#f2f2f2" letter-spacing="-0.3"><text x="13" y="18" font-size="8.5">dirty</text><text x="17.5" y="25.5" font-size="8.5">hip</text><text x="11" y="32.5" font-size="8.5">hop</text></g><rect x="17" y="38" width="12" height="3" fill="#222"/></svg>
<svg style="left:10px;top:651px" width="43.5" height="43" viewBox="0 0 43.5 43"><defs><linearGradient id="g3" x1="0" y1="0" x2="1" y2="0"><stop offset="0" stop-color="#5a3ad6"/><stop offset="0.5" stop-color="#8a7ae0"/><stop offset="1" stop-color="#2a9a8a"/></linearGradient><linearGradient id="g3b" x1="0" y1="0" x2="0" y2="1"><stop offset="0" stop-color="#fff" stop-opacity="0"/><stop offset="1" stop-color="#f0eaff" stop-opacity="0.85"/></linearGradient></defs><rect width="43.5" height="43" rx="2.5" fill="url(#g3)"/><rect width="43.5" height="43" rx="2.5" fill="url(#g3b)"/><path d="M21.5 11 L33 31 L10 31 Z" fill="none" stroke="#f2f2ff" stroke-width="0.8"/><ellipse cx="22" cy="20" rx="4" ry="5.5" fill="#3a58b8"/><path d="M16 25 L28 25 L27 31 L17 31 Z" fill="#3050a8"/><path d="M10 43 C11 35 15 31 22 31 C29 31 33 35 34 43 Z" fill="#4068c0"/><path d="M14 37 C18 34 26 34 30 37" stroke="#a8c8f0" stroke-width="0.8" fill="none"/><text x="21.7" y="7" text-anchor="middle" font-size="5.5" font-weight="bold" letter-spacing="0.1" fill="#fff" font-family="Liberation Sans">INFINITY</text><rect x="12" y="39.5" width="18" height="2.5" fill="#2a2a38"/></svg>
<svg style="left:10px;top:695px" width="43.5" height="43" viewBox="0 0 43.5 43"><rect width="43.5" height="43" fill="#1f1c1d"/><text x="12" y="12" font-size="8" fill="#eaeaea" font-family="Liberation Serif" letter-spacing="-0.3">MISE</text><text x="15" y="20" font-size="8" fill="#eaeaea" font-family="Liberation Serif">EN</text><text x="9" y="28.5" font-size="8" fill="#eaeaea" font-family="Liberation Serif" letter-spacing="-0.5">SCENE</text><path d="M25 20 L19 30" stroke="#d06a3a" stroke-width="0.7"/><rect x="11" y="33" width="9" height="2" fill="#e8e8e8"/><rect x="17" y="35.5" width="13" height="2" fill="#c8c8c8"/></svg>
<svg style="left:10px;top:739px" width="43.5" height="43" viewBox="0 0 43.5 43"><defs><radialGradient id="g5" cx="0.5" cy="0.42" r="0.55"><stop offset="0" stop-color="#e8dcc0"/><stop offset="0.15" stop-color="#8a7050"/><stop offset="0.45" stop-color="#2a2a2a"/><stop offset="1" stop-color="#101820"/></radialGradient></defs><rect width="43.5" height="43" rx="2" fill="url(#g5)"/><path d="M0 17 L21.7 24 L43.5 17 M0 33 L21.7 24 L43.5 33 M0 21 L21.7 24 L43.5 21 M0 29 L21.7 24 L43.5 29" stroke="#a8a090" stroke-width="0.8" fill="none"/><path d="M3 35 L21.7 26 L40 35 L21.7 31 Z" fill="#c8c0b0" opacity="0.6"/><rect x="20.5" y="26" width="2.5" height="12" fill="#e8a040"/><text x="21.7" y="13.5" text-anchor="middle" font-size="4.2" fill="#eee" font-family="Liberation Sans">MODERN</text><text x="21.7" y="18" text-anchor="middle" font-size="4.2" fill="#eee" font-family="Liberation Sans">SCORE</text><rect x="12" y="36" width="8" height="2" fill="#eee"/><rect x="17" y="38.5" width="11" height="2" fill="#ddd"/></svg>
<svg style="left:10px;top:783px" width="43.5" height="43" viewBox="0 0 43.5 43"><rect width="43.5" height="43" fill="#241e20"/><rect x="0.5" y="0.5" width="42.5" height="42" fill="none" stroke="#7a9080" stroke-width="1"/><path d="M5 17 L22 8 L25 12 L8 21 Z" fill="#b01a24"/><path d="M8 12 L20 6" stroke="#d02a30" stroke-width="1.2"/><ellipse cx="33" cy="30" rx="4.5" ry="9" fill="#9a9088"/><circle cx="35" cy="18" r="2.5" fill="#c8a898"/></svg>
<div class="a" style="left:0;top:783px;width:425px;height:24px;background:linear-gradient(180deg,rgba(35,38,41,0) 0%,rgba(35,38,41,0.55) 100%)"></div>
<div class="a" style="left:0;top:806.5px;width:868px;height:19px;background:#222528"></div>
<span class="a" style="left:10px;top:810px;font-size:9.5px;color:#b2b6ba;line-height:12px">1 Soundpool selected, 8 instruments selected, 101 Loops.</span>
<div class="a" style="left:425px;top:521px;width:6.8px;height:204px;background:#3d434a;border-radius:3.4px"></div>
<div class="a" style="left:433.5px;top:519px;width:424px;height:26.5px;background:#2c2f33;border-radius:3px"></div>
<span class="a sb" style="left:467.5px;top:526px;font-size:10.5px;color:#6fc3e6;line-height:12px">Bass</span>
<span class="a sb" style="left:780px;width:64px;text-align:right;top:526px;font-size:10.5px;color:#6fc3e6;line-height:12px">8</span>
<div class="a" style="left:433.5px;top:547px;width:424px;height:26.5px;background:#2c2f33;border-radius:3px"></div>
<span class="a sb" style="left:467.5px;top:554px;font-size:10.5px;color:#5ed08a;line-height:12px">Drums</span>
<span class="a sb" style="left:780px;width:64px;text-align:right;top:554px;font-size:10.5px;color:#5ed08a;line-height:12px">47</span>
<div class="a" style="left:433.5px;top:575px;width:424px;height:26.5px;background:#2c2f33;border-radius:3px"></div>
<span class="a sb" style="left:467.5px;top:582px;font-size:10.5px;color:#5ed08a;line-height:12px">Fx</span>
<span class="a sb" style="left:780px;width:64px;text-align:right;top:582px;font-size:10.5px;color:#5ed08a;line-height:12px">13</span>
<div class="a" style="left:433.5px;top:603px;width:424px;height:26.5px;background:#2c2f33;border-radius:3px"></div>
<span class="a sb" style="left:467.5px;top:610px;font-size:10.5px;color:#6cd46a;line-height:12px">Guitar</span>
<span class="a sb" style="left:780px;width:64px;text-align:right;top:610px;font-size:10.5px;color:#6cd46a;line-height:12px">4</span>
<div class="a" style="left:433.5px;top:631px;width:424px;height:26.5px;background:#2c2f33;border-radius:3px"></div>
<span class="a sb" style="left:467.5px;top:638px;font-size:10.5px;color:#d5da78;line-height:12px">Keys</span>
<span class="a sb" style="left:780px;width:64px;text-align:right;top:638px;font-size:10.5px;color:#d5da78;line-height:12px">6</span>
<div class="a" style="left:433.5px;top:659px;width:424px;height:26.5px;background:#2c2f33;border-radius:3px"></div>
<span class="a sb" style="left:467.5px;top:666px;font-size:10.5px;color:#ea7460;line-height:12px">Pads</span>
<span class="a sb" style="left:780px;width:64px;text-align:right;top:666px;font-size:10.5px;color:#ea7460;line-height:12px">8</span>
<div class="a" style="left:433.5px;top:687px;width:424px;height:26.5px;background:#2c2f33;border-radius:3px"></div>
<span class="a sb" style="left:467.5px;top:694px;font-size:10.5px;color:#e56f9c;line-height:12px">Sequences</span>
<span class="a sb" style="left:780px;width:64px;text-align:right;top:694px;font-size:10.5px;color:#e56f9c;line-height:12px">5</span>
<div class="a" style="left:433.5px;top:715px;width:424px;height:26.5px;background:#2c2f33;border-radius:3px"></div>
<span class="a sb" style="left:467.5px;top:722px;font-size:10.5px;color:#c873e3;line-height:12px">Synth</span>
<span class="a sb" style="left:780px;width:64px;text-align:right;top:722px;font-size:10.5px;color:#c873e3;line-height:12px">10</span>
<svg style="left:443.5px;top:525.5px" width="14" height="14" viewBox="0 0 14 14"><path d="M0.8 13.5 L2.5 9.5 L8.5 3.8 L11.5 2.2 L13 3.2 L12.5 5 L9 8.5 L4 12 Z" fill="#6fc3e6"/><g fill="#6fc3e6"><circle cx="3" cy="7.6" r="0.95"/><circle cx="5.2" cy="5.6" r="0.95"/><circle cx="7.4" cy="3.6" r="0.95"/><circle cx="9.6" cy="1.4" r="0.95"/></g></svg>
<svg style="left:443px;top:553.5px" width="16" height="14" viewBox="0 0 16 14"><rect x="5" y="0.5" width="2.5" height="1.3" fill="#5ed08a"/><rect x="8.5" y="0.5" width="2.5" height="1.3" fill="#5ed08a"/><path d="M0 3 L4 3 L4 2.3 L12 2.3 L12 3 L16 3 L16 6.5 L12.5 6.5 L12.5 4.5 L3.5 4.5 L3.5 6.5 L0 6.5 Z" fill="#5ed08a"/><circle cx="8" cy="8" r="4.6" fill="none" stroke="#5ed08a" stroke-width="1.5"/><path d="M4.3 11.5 L3.5 13.5 M11.7 11.5 L12.5 13.5" stroke="#5ed08a" stroke-width="1.1"/></svg>
<svg style="left:443px;top:581px" width="15" height="15" viewBox="0 0 15 15"><path d="M7.5 0.5 L9 4.5 L13.5 2.5 L11 6.5 L14.5 8.5 L10.5 9.5 L11.5 14 L7.5 11 L3.5 14 L4.5 9.5 L0.5 8.5 L4 6.5 L1.5 2.5 L6 4.5 Z" fill="none" stroke="#5ed08a" stroke-width="1.1"/><circle cx="7.5" cy="8" r="2.5" fill="#5ed08a"/></svg>
<svg style="left:443px;top:608.5px" width="15" height="15" viewBox="0 0 15 15"><path d="M8 7 L13.5 1.5" stroke="#6cd46a" stroke-width="1.5"/><circle cx="5" cy="10" r="4.2" fill="#6cd46a"/><circle cx="8" cy="6.5" r="2.5" fill="#6cd46a"/><circle cx="5.5" cy="9.5" r="1" fill="#2c2f33"/></svg>
<svg style="left:443px;top:636.5px" width="15" height="15" viewBox="0 0 15 15"><circle cx="7.5" cy="7.5" r="6.2" fill="none" stroke="#d5da78" stroke-width="1.6"/><circle cx="7.5" cy="7.5" r="3.6" fill="#d5da78"/><path d="M4.6 5.8 A3.6 3.6 0 0 1 9.5 4.4" fill="none" stroke="#2c2f33" stroke-width="0.9"/></svg>
<svg style="left:443.5px;top:665px" width="14" height="14" viewBox="0 0 14 14"><rect x="1" y="1" width="12" height="4.6" fill="#ea7460"/><g fill="#2c2f33" opacity="0.8"><rect x="2.2" y="2.7" width="1.2" height="1.2"/><rect x="4.2" y="2.7" width="1.2" height="1.2"/><rect x="6.2" y="2.7" width="1.2" height="1.2"/></g><rect x="9" y="2" width="2.6" height="2.6" fill="#f4f4f4" opacity="0.85"/><rect x="1" y="6.3" width="12" height="6.7" fill="#ea7460" opacity="0.55"/><rect x="1" y="6.3" width="12" height="6.7" fill="#fff" opacity="0.25"/><g fill="#ea7460"><rect x="2.6" y="6.3" width="1.9" height="3.6"/><rect x="6" y="6.3" width="1.9" height="3.6"/><rect x="9.4" y="6.3" width="1.9" height="3.6"/></g><g fill="#2c2f33"><rect x="4.5" y="9.8" width="0.8" height="3.2"/><rect x="7.9" y="9.8" width="0.8" height="3.2"/><rect x="11.3" y="9.8" width="0.8" height="3.2"/></g></svg>
<svg style="left:443.5px;top:693px" width="14" height="14" viewBox="0 0 14 14"><rect x="1" y="1" width="12" height="4.6" fill="#e56f9c"/><g fill="#2c2f33" opacity="0.8"><rect x="2.2" y="2.7" width="1.2" height="1.2"/><rect x="4.2" y="2.7" width="1.2" height="1.2"/><rect x="6.2" y="2.7" width="1.2" height="1.2"/></g><rect x="9" y="2" width="2.6" height="2.6" fill="#f4f4f4" opacity="0.85"/><rect x="1" y="6.3" width="12" height="6.7" fill="#e56f9c" opacity="0.55"/><rect x="1" y="6.3" width="12" height="6.7" fill="#fff" opacity="0.25"/><g fill="#e56f9c"><rect x="2.6" y="6.3" width="1.9" height="3.6"/><rect x="6" y="6.3" width="1.9" height="3.6"/><rect x="9.4" y="6.3" width="1.9" height="3.6"/></g><g fill="#2c2f33"><rect x="4.5" y="9.8" width="0.8" height="3.2"/><rect x="7.9" y="9.8" width="0.8" height="3.2"/><rect x="11.3" y="9.8" width="0.8" height="3.2"/></g></svg>
<svg style="left:443.5px;top:721px" width="14" height="14" viewBox="0 0 14 14"><rect x="1" y="1" width="12" height="4.6" fill="#c873e3"/><g fill="#2c2f33" opacity="0.8"><rect x="2.2" y="2.7" width="1.2" height="1.2"/><rect x="4.2" y="2.7" width="1.2" height="1.2"/><rect x="6.2" y="2.7" width="1.2" height="1.2"/></g><rect x="9" y="2" width="2.6" height="2.6" fill="#f4f4f4" opacity="0.85"/><rect x="1" y="6.3" width="12" height="6.7" fill="#c873e3" opacity="0.55"/><rect x="1" y="6.3" width="12" height="6.7" fill="#fff" opacity="0.25"/><g fill="#c873e3"><rect x="2.6" y="6.3" width="1.9" height="3.6"/><rect x="6" y="6.3" width="1.9" height="3.6"/><rect x="9.4" y="6.3" width="1.9" height="3.6"/></g><g fill="#2c2f33"><rect x="4.5" y="9.8" width="0.8" height="3.2"/><rect x="7.9" y="9.8" width="0.8" height="3.2"/><rect x="11.3" y="9.8" width="0.8" height="3.2"/></g></svg>
<div class="a" style="left:868px;top:461px;width:6.5px;height:367px;background:#33383d"></div>
<div class="a" style="left:869.5px;top:637px;width:3px;height:13px;background:repeating-linear-gradient(180deg,#7a7e82 0 1px,transparent 1px 2px)"></div>
<div class="a" style="left:0;top:825.5px;width:1445px;height:15.5px;background:#363a41"></div>
<span class="a" style="left:885px;top:464.5px;font-size:10.5px;color:#a9adb2;line-height:12px">Pitch</span>
<span class="a" style="left:951px;top:464.5px;font-size:10.5px;color:#a9adb2;line-height:12px">Loop name</span>
<span class="a" style="left:1113.5px;top:464.5px;font-size:10.5px;color:#a9adb2;line-height:12px">Preview</span>
<span class="a" style="left:1253.5px;top:464.5px;font-size:10.5px;color:#a9adb2;line-height:12px">BPM</span>
<span class="a" style="left:1294px;top:464.5px;font-size:10.5px;color:#a9adb2;line-height:12px">Length</span>
<span class="a" style="left:1348px;top:464.5px;font-size:10.5px;color:#a9adb2;line-height:12px">Harmony</span>
<svg style="left:1418.5px;top:467px" width="9" height="8" viewBox="0 0 10 9"><path d="M5 8.5 L1.2 4.7 C-0.3 3 0.6 0.4 2.7 0.4 C3.8 0.4 4.5 1 5 1.8 C5.5 1 6.2 0.4 7.3 0.4 C9.4 0.4 10.3 3 8.8 4.7 Z" fill="#c8c8c8"/></svg>
<div class="a" style="left:917.5px;top:482px;width:519.5px;height:28px;background:#2f5460;border:2px solid #5898a8"></div>
<div class="a" style="left:919.5px;top:484px;width:515.5px;height:24px;border:1px solid #284650"></div>
<span class="a sb" style="left:951px;top:490px;font-size:10.5px;color:#74c2e0;line-height:12px;white-space:nowrap">Don't Hate Bass A</span>
<span class="a sb" style="left:1254px;top:490px;font-size:10.5px;color:#74c2e0;line-height:12px">172</span>
<span class="a sb" style="left:1293.5px;top:490px;font-size:10.5px;color:#74c2e0;line-height:12px">8 Bars</span>
<span class="a sb" style="left:1348px;top:490px;font-size:10.5px;color:#74c2e0;line-height:12px">a-Minor</span>
<svg style="left:1418px;top:491.5px" width="10" height="9" viewBox="0 0 10 9"><path d="M5 8.2 L1.3 4.6 C-0.1 3 0.7 0.6 2.7 0.6 C3.8 0.6 4.5 1.2 5 2 C5.5 1.2 6.2 0.6 7.3 0.6 C9.3 0.6 10.1 3 8.7 4.6 Z" fill="none" stroke="#74c2e0" stroke-width="1.1"/></svg>
<svg style="left:1109.5px;top:486px" width="134" height="21" viewBox="0 0 134 21"><rect x="0.5" y="10.0" width="133" height="1" fill="#6ab8d4"/><path d="M0.5 2.1 L1.0 0.2 L1.5 0.5 L2.0 1.0 L2.5 0.3 L3.0 0.7 L3.5 0.6 L4.0 0.9 L4.5 0.4 L5.0 0.1 L5.5 0.5 L6.0 0.2 L6.5 0.7 L7.0 0.5 L7.5 0.4 L8.0 0.0 L8.5 0.5 L9.0 1.0 L9.5 1.6 L9.5 18.9 L9.0 19.3 L8.5 20.5 L8.0 20.2 L7.5 19.8 L7.0 20.4 L6.5 19.6 L6.0 20.5 L5.5 20.0 L5.0 20.3 L4.5 19.9 L4.0 19.6 L3.5 19.8 L3.0 19.8 L2.5 20.6 L2.0 19.7 L1.5 19.8 L1.0 20.5 L0.5 18.4 Z" fill="#6ab8d4"/><path d="M13.5 2.2 L14.0 0.6 L14.5 0.8 L15.0 0.6 L15.5 0.9 L16.0 1.0 L16.5 1.0 L17.0 0.2 L17.5 0.5 L18.0 0.7 L18.5 0.5 L19.0 0.0 L19.5 0.0 L20.0 0.6 L20.5 0.7 L21.0 1.0 L21.5 0.6 L22.0 1.7 L22.0 18.6 L21.5 20.2 L21.0 19.7 L20.5 20.1 L20.0 20.2 L19.5 20.5 L19.0 20.7 L18.5 20.0 L18.0 20.1 L17.5 20.3 L17.0 20.0 L16.5 19.3 L16.0 19.6 L15.5 19.4 L15.0 20.4 L14.5 19.9 L14.0 20.2 L13.5 18.8 Z" fill="#6ab8d4"/><path d="M23.5 5.1 L24.0 4.0 L24.5 2.9 L25.0 2.4 L25.5 3.6 L26.0 4.7 L26.5 5.8 L27.0 6.9 L27.5 8.0 L28.0 9.2 L28.0 11.8 L27.5 12.9 L27.0 14.0 L26.5 14.8 L26.0 15.9 L25.5 17.1 L25.0 18.4 L24.5 17.7 L24.0 17.0 L23.5 15.5 Z" fill="#6ab8d4"/><path d="M34.0 1.9 L34.5 0.8 L35.0 0.6 L35.5 1.0 L36.0 0.3 L36.5 0.1 L37.0 0.2 L37.5 0.2 L38.0 1.0 L38.5 0.0 L39.0 0.9 L39.5 0.2 L40.0 0.3 L40.5 0.4 L41.0 0.9 L41.5 0.2 L42.0 0.4 L42.5 1.9 L42.5 18.6 L42.0 19.9 L41.5 20.4 L41.0 20.0 L40.5 20.1 L40.0 20.0 L39.5 20.5 L39.0 19.4 L38.5 21.0 L38.0 19.4 L37.5 20.6 L37.0 20.3 L36.5 20.7 L36.0 20.4 L35.5 19.7 L35.0 19.7 L34.5 19.6 L34.0 18.6 Z" fill="#6ab8d4"/><path d="M46.5 2.2 L47.0 0.4 L47.5 0.9 L48.0 0.6 L48.5 0.4 L49.0 0.0 L49.5 0.8 L50.0 0.8 L50.5 0.7 L51.0 0.1 L51.5 0.2 L52.0 0.6 L52.5 0.2 L53.0 0.8 L53.5 0.9 L54.0 0.5 L54.5 0.3 L55.0 1.9 L55.0 18.4 L54.5 20.4 L54.0 20.5 L53.5 19.9 L53.0 20.0 L52.5 20.1 L52.0 20.0 L51.5 20.7 L51.0 20.4 L50.5 19.9 L50.0 20.1 L49.5 20.0 L49.0 20.7 L48.5 20.2 L48.0 20.0 L47.5 19.8 L47.0 20.2 L46.5 18.4 Z" fill="#6ab8d4"/><path d="M56.5 5.1 L57.0 4.2 L57.5 3.3 L58.0 2.4 L58.5 2.7 L59.0 3.7 L59.5 4.6 L60.0 5.5 L60.5 6.4 L61.0 7.3 L61.5 8.2 L62.0 9.2 L62.0 11.8 L61.5 12.7 L61.0 13.6 L60.5 14.4 L60.0 15.2 L59.5 16.3 L59.0 17.1 L58.5 18.0 L58.0 18.6 L57.5 17.6 L57.0 16.5 L56.5 15.6 Z" fill="#6ab8d4"/><path d="M67.0 1.7 L67.5 0.8 L68.0 0.5 L68.5 0.7 L69.0 1.0 L69.5 0.1 L70.0 0.8 L70.5 0.7 L71.0 1.0 L71.5 0.6 L72.0 0.2 L72.5 0.1 L73.0 0.2 L73.5 0.5 L74.0 0.6 L74.5 0.6 L75.0 0.8 L75.5 2.2 L75.5 18.8 L75.0 19.9 L74.5 20.3 L74.0 20.3 L73.5 19.9 L73.0 20.0 L72.5 20.3 L72.0 20.6 L71.5 19.8 L71.0 19.7 L70.5 19.5 L70.0 19.9 L69.5 20.6 L69.0 19.8 L68.5 20.2 L68.0 19.8 L67.5 19.7 L67.0 19.0 Z" fill="#6ab8d4"/><path d="M80.0 1.6 L80.5 0.4 L81.0 0.9 L81.5 0.9 L82.0 0.5 L82.5 0.9 L83.0 0.5 L83.5 0.2 L84.0 0.8 L84.5 1.0 L85.0 0.5 L85.5 0.4 L86.0 1.0 L86.5 0.6 L87.0 0.0 L87.5 0.4 L88.0 0.8 L88.5 2.0 L88.5 18.4 L88.0 19.9 L87.5 19.8 L87.0 20.8 L86.5 20.3 L86.0 19.5 L85.5 20.0 L85.0 20.3 L84.5 19.9 L84.0 20.2 L83.5 20.6 L83.0 19.8 L82.5 19.6 L82.0 19.9 L81.5 19.8 L81.0 20.0 L80.5 20.0 L80.0 19.3 Z" fill="#6ab8d4"/><path d="M90.0 5.5 L90.5 4.5 L91.0 3.6 L91.5 2.6 L92.0 3.6 L92.5 4.5 L93.0 5.5 L93.5 6.4 L94.0 7.3 L94.5 8.3 L95.0 9.2 L95.0 11.7 L94.5 12.7 L94.0 13.6 L93.5 14.3 L93.0 15.3 L92.5 16.2 L92.0 17.3 L91.5 18.0 L91.0 17.4 L90.5 16.5 L90.0 15.3 Z" fill="#6ab8d4"/><path d="M100.0 1.8 L100.5 1.0 L101.0 1.0 L101.5 0.1 L102.0 0.9 L102.5 0.9 L103.0 0.6 L103.5 0.1 L104.0 0.3 L104.5 0.2 L105.0 0.7 L105.5 0.3 L106.0 0.4 L106.5 0.6 L107.0 0.6 L107.5 0.5 L108.0 0.0 L108.5 0.0 L109.0 2.4 L109.0 18.4 L108.5 20.2 L108.0 20.3 L107.5 20.5 L107.0 20.0 L106.5 20.1 L106.0 20.4 L105.5 20.2 L105.0 19.9 L104.5 20.2 L104.0 20.0 L103.5 20.7 L103.0 20.4 L102.5 19.7 L102.0 19.5 L101.5 20.8 L101.0 20.0 L100.5 19.7 L100.0 18.8 Z" fill="#6ab8d4"/><path d="M112.0 2.4 L112.5 0.6 L113.0 0.2 L113.5 0.8 L114.0 0.1 L114.5 0.2 L115.0 0.5 L115.5 0.3 L116.0 0.6 L116.5 0.6 L117.0 0.1 L117.5 0.5 L118.0 0.7 L118.5 0.1 L119.0 0.2 L119.5 0.1 L120.0 0.3 L120.5 0.9 L121.0 2.3 L121.0 18.6 L120.5 20.1 L120.0 20.4 L119.5 20.4 L119.0 20.5 L118.5 20.9 L118.0 19.7 L117.5 20.0 L117.0 20.9 L116.5 20.3 L116.0 20.2 L115.5 20.4 L115.0 20.5 L114.5 20.0 L114.0 20.7 L113.5 19.7 L113.0 20.3 L112.5 19.7 L112.0 17.9 Z" fill="#6ab8d4"/><path d="M122.5 4.8 L123.0 3.6 L123.5 2.4 L124.0 1.9 L124.5 3.1 L125.0 4.3 L125.5 5.5 L126.0 6.7 L126.5 7.9 L127.0 9.1 L127.0 11.9 L126.5 13.0 L126.0 14.1 L125.5 15.3 L125.0 16.5 L124.5 17.5 L124.0 19.0 L123.5 18.4 L123.0 17.0 L122.5 15.8 Z" fill="#6ab8d4"/><path d="M128.0 4.8 L128.5 3.7 L129.0 2.6 L129.5 1.6 L130.0 2.6 L130.5 3.7 L131.0 4.8 L131.5 5.9 L132.0 6.9 L132.5 8.0 L133.0 9.1 L133.0 11.9 L132.5 12.8 L132.0 14.0 L131.5 14.9 L131.0 16.1 L130.5 16.9 L130.0 18.2 L129.5 18.9 L129.0 18.3 L128.5 17.2 L128.0 16.2 Z" fill="#6ab8d4"/></svg>
<div class="a" style="left:917.5px;top:510px;width:519.5px;height:27px;background:#2b2e32"></div>
<span class="a sb" style="left:951px;top:518px;font-size:10.5px;color:#74c2e0;line-height:12px;white-space:nowrap">Don't Hate Bass B</span>
<span class="a sb" style="left:1254px;top:518px;font-size:10.5px;color:#74c2e0;line-height:12px">172</span>
<span class="a sb" style="left:1293.5px;top:518px;font-size:10.5px;color:#74c2e0;line-height:12px">8 Bars</span>
<span class="a sb" style="left:1348px;top:518px;font-size:10.5px;color:#74c2e0;line-height:12px">a-Minor</span>
<svg style="left:1418px;top:519.5px" width="10" height="9" viewBox="0 0 10 9"><path d="M5 8.2 L1.3 4.6 C-0.1 3 0.7 0.6 2.7 0.6 C3.8 0.6 4.5 1.2 5 2 C5.5 1.2 6.2 0.6 7.3 0.6 C9.3 0.6 10.1 3 8.7 4.6 Z" fill="none" stroke="#74c2e0" stroke-width="1.1"/></svg>
<svg style="left:1109.5px;top:514px" width="134" height="21" viewBox="0 0 134 21"><rect x="0.5" y="10.0" width="133" height="1" fill="#6ab8d4"/><path d="M0.5 2.5 L1.0 0.7 L1.5 0.1 L2.0 0.2 L2.5 0.9 L3.0 0.4 L3.5 0.4 L4.0 0.4 L4.5 1.0 L5.0 0.3 L5.5 1.0 L6.0 0.2 L6.5 0.7 L7.0 0.8 L7.5 0.1 L8.0 0.0 L8.5 0.8 L9.0 0.0 L9.5 2.2 L9.5 18.7 L9.0 20.8 L8.5 19.9 L8.0 20.5 L7.5 20.7 L7.0 19.6 L6.5 20.2 L6.0 20.8 L5.5 19.8 L5.0 20.3 L4.5 19.4 L4.0 20.5 L3.5 20.2 L3.0 20.1 L2.5 19.7 L2.0 20.4 L1.5 20.4 L1.0 19.8 L0.5 18.3 Z" fill="#6ab8d4"/><path d="M13.5 1.8 L14.0 0.1 L14.5 0.2 L15.0 0.6 L15.5 0.5 L16.0 1.0 L16.5 0.5 L17.0 0.5 L17.5 1.0 L18.0 0.7 L18.5 0.9 L19.0 0.1 L19.5 0.3 L20.0 0.8 L20.5 0.4 L21.0 0.4 L21.5 0.5 L22.0 1.7 L22.0 18.8 L21.5 20.2 L21.0 19.9 L20.5 20.2 L20.0 19.5 L19.5 20.1 L19.0 20.5 L18.5 19.5 L18.0 19.8 L17.5 19.6 L17.0 20.0 L16.5 20.1 L16.0 19.8 L15.5 20.4 L15.0 19.6 L14.5 20.4 L14.0 20.1 L13.5 18.5 Z" fill="#6ab8d4"/><path d="M23.5 5.1 L24.0 4.0 L24.5 2.9 L25.0 2.4 L25.5 3.6 L26.0 4.7 L26.5 5.8 L27.0 6.9 L27.5 8.0 L28.0 9.2 L28.0 11.8 L27.5 12.8 L27.0 14.0 L26.5 15.1 L26.0 16.0 L25.5 17.4 L25.0 18.1 L24.5 17.6 L24.0 17.0 L23.5 15.6 Z" fill="#6ab8d4"/><path d="M34.0 2.4 L34.5 0.2 L35.0 1.0 L35.5 0.7 L36.0 0.5 L36.5 0.9 L37.0 0.8 L37.5 0.9 L38.0 0.9 L38.5 0.1 L39.0 0.4 L39.5 0.9 L40.0 0.8 L40.5 1.0 L41.0 0.8 L41.5 0.7 L42.0 0.3 L42.5 1.8 L42.5 18.8 L42.0 20.0 L41.5 19.8 L41.0 19.4 L40.5 19.7 L40.0 20.0 L39.5 19.7 L39.0 20.1 L38.5 20.7 L38.0 19.5 L37.5 19.9 L37.0 19.8 L36.5 19.9 L36.0 19.7 L35.5 20.3 L35.0 19.8 L34.5 20.5 L34.0 18.0 Z" fill="#6ab8d4"/><path d="M46.5 2.1 L47.0 0.7 L47.5 0.9 L48.0 1.0 L48.5 0.4 L49.0 0.7 L49.5 0.2 L50.0 0.6 L50.5 0.3 L51.0 0.0 L51.5 0.6 L52.0 0.3 L52.5 0.5 L53.0 0.0 L53.5 0.1 L54.0 0.2 L54.5 0.6 L55.0 1.7 L55.0 19.2 L54.5 19.9 L54.0 20.5 L53.5 20.8 L53.0 20.4 L52.5 20.0 L52.0 20.1 L51.5 20.0 L51.0 20.3 L50.5 20.1 L50.0 19.9 L49.5 20.7 L49.0 20.2 L48.5 19.9 L48.0 19.5 L47.5 19.8 L47.0 19.9 L46.5 18.7 Z" fill="#6ab8d4"/><path d="M56.5 5.1 L57.0 4.2 L57.5 3.3 L58.0 2.4 L58.5 2.7 L59.0 3.7 L59.5 4.6 L60.0 5.5 L60.5 6.4 L61.0 7.3 L61.5 8.2 L62.0 9.2 L62.0 11.8 L61.5 12.6 L61.0 13.6 L60.5 14.3 L60.0 15.3 L59.5 16.0 L59.0 17.0 L58.5 18.1 L58.0 18.6 L57.5 17.2 L57.0 16.4 L56.5 15.7 Z" fill="#6ab8d4"/><path d="M67.0 1.8 L67.5 0.6 L68.0 0.6 L68.5 0.7 L69.0 0.0 L69.5 1.0 L70.0 0.9 L70.5 0.6 L71.0 0.9 L71.5 0.5 L72.0 1.0 L72.5 0.7 L73.0 0.7 L73.5 0.9 L74.0 0.9 L74.5 0.9 L75.0 0.4 L75.5 2.0 L75.5 18.4 L75.0 20.3 L74.5 19.3 L74.0 19.3 L73.5 19.5 L73.0 19.6 L72.5 20.2 L72.0 19.4 L71.5 20.2 L71.0 19.7 L70.5 20.2 L70.0 19.9 L69.5 19.9 L69.0 20.3 L68.5 19.6 L68.0 19.9 L67.5 20.4 L67.0 18.7 Z" fill="#6ab8d4"/><path d="M80.0 2.4 L80.5 0.9 L81.0 0.0 L81.5 0.5 L82.0 0.5 L82.5 0.3 L83.0 0.6 L83.5 0.3 L84.0 0.6 L84.5 0.2 L85.0 0.1 L85.5 0.2 L86.0 0.1 L86.5 0.0 L87.0 0.1 L87.5 0.8 L88.0 0.9 L88.5 2.2 L88.5 18.5 L88.0 20.0 L87.5 20.1 L87.0 20.3 L86.5 20.6 L86.0 20.9 L85.5 20.2 L85.0 20.7 L84.5 20.5 L84.0 20.2 L83.5 20.5 L83.0 19.9 L82.5 20.1 L82.0 20.0 L81.5 19.8 L81.0 20.7 L80.5 19.5 L80.0 18.4 Z" fill="#6ab8d4"/><path d="M90.0 5.5 L90.5 4.5 L91.0 3.6 L91.5 2.6 L92.0 3.6 L92.5 4.5 L93.0 5.5 L93.5 6.4 L94.0 7.3 L94.5 8.3 L95.0 9.2 L95.0 11.7 L94.5 12.5 L94.0 13.5 L93.5 14.4 L93.0 15.2 L92.5 16.2 L92.0 16.9 L91.5 18.2 L91.0 17.1 L90.5 16.2 L90.0 15.3 Z" fill="#6ab8d4"/><path d="M100.0 1.9 L100.5 0.5 L101.0 1.0 L101.5 0.3 L102.0 0.1 L102.5 0.8 L103.0 0.4 L103.5 0.7 L104.0 0.4 L104.5 0.2 L105.0 0.2 L105.5 0.2 L106.0 0.9 L106.5 0.8 L107.0 0.9 L107.5 0.4 L108.0 0.8 L108.5 0.1 L109.0 2.1 L109.0 18.7 L108.5 20.2 L108.0 20.1 L107.5 20.0 L107.0 20.0 L106.5 19.5 L106.0 19.7 L105.5 20.3 L105.0 20.5 L104.5 20.1 L104.0 20.6 L103.5 20.0 L103.0 20.3 L102.5 19.9 L102.0 20.5 L101.5 20.5 L101.0 19.4 L100.5 20.2 L100.0 18.7 Z" fill="#6ab8d4"/><path d="M112.0 1.8 L112.5 0.5 L113.0 0.2 L113.5 0.2 L114.0 0.1 L114.5 0.5 L115.0 0.1 L115.5 1.0 L116.0 0.5 L116.5 0.3 L117.0 0.9 L117.5 0.7 L118.0 1.0 L118.5 0.6 L119.0 0.1 L119.5 0.3 L120.0 0.9 L120.5 0.9 L121.0 1.8 L121.0 18.6 L120.5 19.7 L120.0 19.6 L119.5 20.5 L119.0 20.5 L118.5 19.8 L118.0 19.4 L117.5 19.7 L117.0 19.6 L116.5 20.4 L116.0 20.3 L115.5 19.3 L115.0 20.2 L114.5 20.2 L114.0 20.1 L113.5 20.3 L113.0 20.5 L112.5 19.7 L112.0 18.6 Z" fill="#6ab8d4"/><path d="M122.5 4.8 L123.0 3.6 L123.5 2.4 L124.0 1.9 L124.5 3.1 L125.0 4.3 L125.5 5.5 L126.0 6.7 L126.5 7.9 L127.0 9.1 L127.0 11.8 L126.5 13.0 L126.0 14.3 L125.5 15.4 L125.0 16.3 L124.5 17.8 L124.0 18.5 L123.5 18.3 L123.0 17.2 L122.5 15.8 Z" fill="#6ab8d4"/><path d="M128.0 4.8 L128.5 3.7 L129.0 2.6 L129.5 1.6 L130.0 2.6 L130.5 3.7 L131.0 4.8 L131.5 5.9 L132.0 6.9 L132.5 8.0 L133.0 9.1 L133.0 11.9 L132.5 13.0 L132.0 14.0 L131.5 15.0 L131.0 16.2 L130.5 17.0 L130.0 17.8 L129.5 19.0 L129.0 18.3 L128.5 17.1 L128.0 16.1 Z" fill="#6ab8d4"/></svg>
<div class="a" style="left:917.5px;top:538px;width:519.5px;height:27px;background:#2b2e32"></div>
<span class="a sb" style="left:951px;top:546px;font-size:10.5px;color:#74c2e0;line-height:12px;white-space:nowrap">Saturday Bright Lights Bass A</span>
<span class="a sb" style="left:1254px;top:546px;font-size:10.5px;color:#74c2e0;line-height:12px">172</span>
<span class="a sb" style="left:1293.5px;top:546px;font-size:10.5px;color:#74c2e0;line-height:12px">8 Bars</span>
<span class="a sb" style="left:1348px;top:546px;font-size:10.5px;color:#74c2e0;line-height:12px">a-Minor</span>
<svg style="left:1418px;top:547.5px" width="10" height="9" viewBox="0 0 10 9"><path d="M5 8.2 L1.3 4.6 C-0.1 3 0.7 0.6 2.7 0.6 C3.8 0.6 4.5 1.2 5 2 C5.5 1.2 6.2 0.6 7.3 0.6 C9.3 0.6 10.1 3 8.7 4.6 Z" fill="none" stroke="#74c2e0" stroke-width="1.1"/></svg>
<svg style="left:1109.5px;top:542px" width="134" height="21" viewBox="0 0 134 21"><path d="M0.5 1.8 L1.0 1.7 L1.5 1.2 L2.0 0.8 L2.5 1.9 L3.0 1.8 L3.5 2.5 L4.0 1.1 L4.5 1.7 L5.0 0.4 L5.5 0.4 L6.0 1.1 L6.5 1.8 L7.0 1.3 L7.5 2.4 L8.0 1.4 L8.5 0.7 L9.0 0.6 L9.5 0.3 L10.0 0.9 L10.5 2.1 L11.0 2.3 L11.5 2.4 L12.0 2.4 L12.5 2.6 L13.0 1.6 L13.5 2.4 L13.9 2.1 L14.4 2.3 L14.9 0.3 L15.4 0.5 L15.9 0.5 L16.4 2.2 L16.9 2.7 L17.4 2.1 L17.9 0.7 L18.4 2.4 L18.9 1.4 L19.4 0.6 L19.9 2.2 L20.4 1.7 L20.9 1.7 L21.4 2.0 L21.9 0.4 L22.4 1.0 L22.9 2.1 L23.4 2.3 L23.9 1.2 L24.4 1.0 L24.9 1.0 L25.4 1.3 L25.9 2.3 L26.4 1.9 L26.9 2.4 L27.4 1.8 L27.9 1.9 L28.4 2.0 L28.9 0.4 L29.4 1.4 L29.9 1.4 L30.4 0.3 L30.9 0.9 L31.4 0.7 L31.9 1.9 L32.4 2.4 L32.9 0.5 L33.4 0.4 L33.9 0.5 L34.4 0.2 L34.9 2.9 L35.4 0.4 L35.9 0.5 L36.4 0.6 L36.9 1.1 L37.4 0.8 L37.9 0.7 L38.4 1.5 L38.9 2.8 L39.4 1.7 L39.9 0.9 L40.4 0.8 L40.8 1.4 L41.3 0.2 L41.8 1.3 L42.3 0.5 L42.8 1.1 L43.3 0.5 L43.8 0.8 L44.3 1.4 L44.8 2.7 L45.3 0.7 L45.8 0.9 L46.3 0.7 L46.8 2.7 L47.3 1.5 L47.8 2.1 L48.3 2.4 L48.8 1.9 L49.3 2.5 L49.8 1.6 L50.3 1.6 L50.8 2.6 L51.3 2.8 L51.8 0.3 L52.3 1.1 L52.8 2.0 L53.3 2.1 L53.8 0.5 L54.3 2.9 L54.8 1.8 L55.3 2.9 L55.8 0.5 L56.3 0.4 L56.8 2.4 L57.3 2.3 L57.8 2.2 L58.3 2.4 L58.8 0.7 L59.3 2.1 L59.8 1.6 L60.3 0.8 L60.8 2.8 L61.3 0.8 L61.8 0.5 L62.3 0.7 L62.8 2.4 L63.3 1.2 L63.8 0.8 L64.3 1.1 L64.8 0.4 L65.3 1.0 L65.8 1.9 L66.3 1.0 L66.8 0.9 L67.2 1.1 L67.7 0.6 L68.2 0.2 L68.7 1.9 L69.2 0.9 L69.7 1.3 L70.2 2.6 L70.7 2.1 L71.2 2.3 L71.7 0.6 L72.2 2.1 L72.7 2.3 L73.2 1.4 L73.7 0.3 L74.2 1.3 L74.7 2.5 L75.2 2.0 L75.7 0.5 L76.2 1.6 L76.7 0.6 L77.2 2.0 L77.7 2.1 L78.2 1.0 L78.7 0.6 L79.2 2.4 L79.7 0.4 L80.2 2.7 L80.7 1.7 L81.2 2.3 L81.7 1.0 L82.2 2.1 L82.7 1.9 L83.2 2.1 L83.7 1.6 L84.2 0.7 L84.7 0.4 L85.2 2.0 L85.7 2.2 L86.2 2.7 L86.7 0.7 L87.2 0.4 L87.7 2.3 L88.2 1.7 L88.7 0.7 L89.2 2.2 L89.7 0.8 L90.2 2.9 L90.7 1.5 L91.2 2.5 L91.7 0.3 L92.2 1.0 L92.7 2.6 L93.2 1.8 L93.6 2.5 L94.1 2.1 L94.6 2.0 L95.1 0.7 L95.6 2.5 L96.1 2.5 L96.6 0.2 L97.1 0.5 L97.6 1.0 L98.1 1.1 L98.6 2.6 L99.1 0.9 L99.6 0.9 L100.1 0.7 L100.6 2.6 L101.1 0.6 L101.6 0.9 L102.1 2.8 L102.6 1.0 L103.1 0.4 L103.6 1.3 L104.1 0.5 L104.6 2.5 L105.1 2.4 L105.6 2.3 L106.1 2.7 L106.6 1.5 L107.1 0.6 L107.6 1.1 L108.1 1.1 L108.6 1.9 L109.1 2.2 L109.6 1.1 L110.1 2.7 L110.6 0.2 L111.1 1.9 L111.6 1.7 L112.1 0.3 L112.6 1.0 L113.1 1.4 L113.6 2.6 L114.1 0.9 L114.6 2.0 L115.1 2.7 L115.6 2.7 L116.1 1.4 L116.6 2.5 L117.1 1.0 L117.6 0.5 L118.1 1.8 L118.6 1.2 L119.1 1.0 L119.6 2.7 L120.1 2.7 L120.5 2.1 L121.0 2.6 L121.5 2.7 L122.0 1.3 L122.5 1.6 L123.0 2.2 L123.5 2.5 L124.0 1.3 L124.5 1.7 L125.0 1.9 L125.5 2.4 L126.0 0.3 L126.5 0.8 L127.0 2.1 L127.5 2.6 L128.0 0.4 L128.5 1.7 L129.0 2.3 L129.5 2.3 L130.0 2.0 L130.5 0.6 L131.0 1.9 L131.5 1.0 L132.0 2.1 L132.5 0.7 L133.0 0.8 L133.5 1.8 L133.5 19.2 L133.0 20.0 L132.5 19.7 L132.0 18.5 L131.5 19.5 L131.0 19.1 L130.5 20.6 L130.0 18.8 L129.5 18.5 L129.0 18.8 L128.5 18.7 L128.0 19.7 L127.5 17.8 L127.0 18.5 L126.5 20.2 L126.0 20.8 L125.5 18.5 L125.0 18.4 L124.5 19.0 L124.0 18.9 L123.5 17.8 L123.0 18.8 L122.5 19.2 L122.0 19.5 L121.5 17.6 L121.0 18.1 L120.5 18.2 L120.1 17.9 L119.6 17.7 L119.1 19.3 L118.6 19.6 L118.1 18.8 L117.6 20.2 L117.1 19.7 L116.6 18.5 L116.1 19.1 L115.6 18.4 L115.1 17.7 L114.6 18.7 L114.1 19.8 L113.6 17.6 L113.1 18.9 L112.6 19.6 L112.1 20.3 L111.6 18.8 L111.1 18.4 L110.6 20.0 L110.1 17.7 L109.6 19.1 L109.1 18.9 L108.6 19.2 L108.1 20.0 L107.6 19.8 L107.1 20.3 L106.6 18.9 L106.1 18.2 L105.6 18.1 L105.1 18.7 L104.6 18.3 L104.1 19.7 L103.6 19.7 L103.1 20.1 L102.6 19.5 L102.1 17.8 L101.6 19.5 L101.1 19.7 L100.6 18.4 L100.1 19.5 L99.6 19.8 L99.1 19.6 L98.6 18.3 L98.1 20.1 L97.6 19.8 L97.1 20.0 L96.6 19.9 L96.1 18.1 L95.6 18.0 L95.1 19.6 L94.6 19.1 L94.1 18.2 L93.6 18.4 L93.2 19.3 L92.7 18.2 L92.2 19.3 L91.7 20.8 L91.2 18.3 L90.7 19.3 L90.2 18.3 L89.7 19.7 L89.2 18.5 L88.7 19.6 L88.2 19.0 L87.7 18.3 L87.2 19.7 L86.7 20.1 L86.2 17.6 L85.7 18.6 L85.2 18.6 L84.7 19.7 L84.2 20.4 L83.7 18.8 L83.2 18.6 L82.7 18.8 L82.2 18.3 L81.7 19.6 L81.2 18.7 L80.7 18.7 L80.2 17.6 L79.7 20.5 L79.2 17.9 L78.7 20.5 L78.2 19.9 L77.7 18.5 L77.2 19.0 L76.7 19.9 L76.2 19.4 L75.7 19.8 L75.2 19.1 L74.7 18.0 L74.2 19.3 L73.7 20.7 L73.2 19.6 L72.7 18.7 L72.2 18.7 L71.7 19.8 L71.2 18.4 L70.7 18.3 L70.2 17.9 L69.7 19.0 L69.2 20.1 L68.7 18.5 L68.2 19.9 L67.7 20.0 L67.2 19.3 L66.8 19.5 L66.3 19.0 L65.8 18.4 L65.3 20.0 L64.8 19.9 L64.3 19.6 L63.8 19.6 L63.3 19.6 L62.8 17.8 L62.3 20.2 L61.8 20.1 L61.3 19.8 L60.8 18.2 L60.3 19.9 L59.8 18.9 L59.3 18.6 L58.8 19.6 L58.3 18.5 L57.8 18.4 L57.3 18.4 L56.8 18.2 L56.3 20.3 L55.8 20.2 L55.3 17.5 L54.8 19.1 L54.3 18.1 L53.8 19.7 L53.3 18.5 L52.8 18.7 L52.3 19.7 L51.8 20.6 L51.3 17.7 L50.8 18.0 L50.3 19.5 L49.8 18.7 L49.3 18.0 L48.8 18.3 L48.3 18.6 L47.8 18.4 L47.3 18.8 L46.8 18.1 L46.3 19.9 L45.8 20.0 L45.3 20.2 L44.8 18.1 L44.3 19.7 L43.8 19.3 L43.3 19.8 L42.8 19.7 L42.3 19.8 L41.8 19.1 L41.3 19.9 L40.8 19.3 L40.4 20.0 L39.9 19.6 L39.4 18.7 L38.9 17.5 L38.4 18.7 L37.9 20.1 L37.4 20.4 L36.9 19.1 L36.4 20.5 L35.9 19.7 L35.4 20.0 L34.9 17.5 L34.4 19.9 L33.9 19.8 L33.4 20.8 L32.9 20.5 L32.4 18.7 L31.9 18.7 L31.4 20.5 L30.9 20.0 L30.4 20.9 L29.9 19.7 L29.4 19.3 L28.9 19.9 L28.4 18.3 L27.9 18.3 L27.4 19.3 L26.9 18.2 L26.4 18.6 L25.9 18.5 L25.4 19.1 L24.9 19.9 L24.4 19.3 L23.9 19.9 L23.4 18.6 L22.9 18.6 L22.4 19.7 L21.9 19.9 L21.4 18.5 L20.9 19.4 L20.4 19.2 L19.9 18.4 L19.4 19.6 L18.9 19.3 L18.4 17.9 L17.9 20.1 L17.4 18.9 L16.9 18.1 L16.4 19.0 L15.9 20.0 L15.4 20.0 L14.9 20.6 L14.4 18.6 L13.9 18.6 L13.5 18.0 L13.0 19.0 L12.5 18.3 L12.0 18.0 L11.5 18.2 L11.0 18.2 L10.5 19.0 L10.0 19.6 L9.5 19.9 L9.0 20.2 L8.5 19.6 L8.0 18.8 L7.5 18.1 L7.0 19.7 L6.5 18.5 L6.0 19.3 L5.5 20.4 L5.0 20.6 L4.5 18.7 L4.0 20.0 L3.5 18.2 L3.0 18.7 L2.5 19.1 L2.0 19.4 L1.5 19.1 L1.0 19.5 L0.5 18.8 Z" fill="#6ab8d4"/><g stroke="#6ab8d4" stroke-width="0.6" opacity="0.7"><path d="M102.8 0.2 l0 20.6"/><path d="M93.7 0.2 l0 20.6"/><path d="M33.1 0.2 l0 20.6"/><path d="M40.9 0.2 l0 20.6"/><path d="M41.6 0.2 l0 20.6"/><path d="M47.9 0.2 l0 20.6"/></g></svg>
<div class="a" style="left:917.5px;top:566px;width:519.5px;height:27px;background:#2b2e32"></div>
<span class="a sb" style="left:951px;top:574px;font-size:10.5px;color:#74c2e0;line-height:12px;white-space:nowrap">Saturday Bright Lights Bass B</span>
<span class="a sb" style="left:1254px;top:574px;font-size:10.5px;color:#74c2e0;line-height:12px">172</span>
<span class="a sb" style="left:1293.5px;top:574px;font-size:10.5px;color:#74c2e0;line-height:12px">8 Bars</span>
<span class="a sb" style="left:1348px;top:574px;font-size:10.5px;color:#74c2e0;line-height:12px">a-Minor</span>
<svg style="left:1418px;top:575.5px" width="10" height="9" viewBox="0 0 10 9"><path d="M5 8.2 L1.3 4.6 C-0.1 3 0.7 0.6 2.7 0.6 C3.8 0.6 4.5 1.2 5 2 C5.5 1.2 6.2 0.6 7.3 0.6 C9.3 0.6 10.1 3 8.7 4.6 Z" fill="none" stroke="#74c2e0" stroke-width="1.1"/></svg>
<svg style="left:1109.5px;top:570px" width="134" height="21" viewBox="0 0 134 21"><path d="M0.5 1.8 L1.0 1.3 L1.5 1.8 L2.0 2.0 L2.5 1.0 L3.0 1.2 L3.5 1.1 L4.0 1.8 L4.5 1.3 L5.0 1.7 L5.5 1.1 L6.0 2.0 L6.5 2.0 L7.0 1.6 L7.5 1.8 L8.0 1.1 L8.5 1.8 L9.0 1.6 L9.5 1.6 L10.0 1.5 L10.5 1.7 L11.0 1.0 L11.5 0.4 L12.0 1.0 L12.5 1.4 L13.0 1.2 L13.5 0.6 L13.9 0.5 L14.4 1.2 L14.9 1.2 L15.4 0.6 L15.9 0.9 L16.4 1.2 L16.9 1.5 L17.4 0.5 L17.9 1.0 L18.4 1.3 L18.9 1.2 L19.4 0.8 L19.9 0.8 L20.4 1.2 L20.9 1.0 L21.4 1.1 L21.9 0.6 L22.4 0.9 L22.9 0.6 L23.4 1.2 L23.9 1.4 L24.4 0.8 L24.9 0.8 L25.4 1.4 L25.9 1.1 L26.4 1.2 L26.9 1.5 L27.4 0.6 L27.9 1.2 L28.4 1.1 L28.9 0.9 L29.4 0.7 L29.9 1.5 L30.4 1.0 L30.9 0.8 L31.4 1.2 L31.9 0.6 L32.4 1.0 L32.9 1.5 L33.4 1.4 L33.9 1.4 L34.4 0.6 L34.9 1.1 L35.4 1.5 L35.9 1.1 L36.4 1.0 L36.9 1.3 L37.4 1.0 L37.9 1.2 L38.4 0.6 L38.9 0.4 L39.4 0.5 L39.9 0.5 L40.4 0.7 L40.8 1.3 L41.3 0.9 L41.8 0.8 L42.3 1.5 L42.8 0.4 L43.3 0.5 L43.8 0.8 L44.3 1.2 L44.8 0.5 L45.3 1.3 L45.8 0.9 L46.3 0.9 L46.8 1.1 L47.3 1.4 L47.8 1.1 L48.3 1.4 L48.8 0.5 L49.3 1.4 L49.8 1.4 L50.3 1.4 L50.8 0.6 L51.3 1.5 L51.8 1.3 L52.3 0.6 L52.8 1.5 L53.3 1.4 L53.8 1.1 L54.3 1.2 L54.8 0.5 L55.3 0.7 L55.8 1.4 L56.3 0.6 L56.8 0.8 L57.3 0.8 L57.8 0.5 L58.3 1.3 L58.8 1.2 L59.3 0.6 L59.8 1.3 L60.3 0.5 L60.8 0.8 L61.3 0.8 L61.8 0.9 L62.3 0.7 L62.8 1.1 L63.3 0.7 L63.8 0.5 L64.3 1.3 L64.8 1.1 L65.3 0.5 L65.8 0.7 L66.3 0.6 L66.8 0.7 L67.2 0.9 L67.7 0.6 L68.2 0.5 L68.7 1.1 L69.2 1.0 L69.7 0.7 L70.2 1.3 L70.7 0.7 L71.2 1.3 L71.7 0.7 L72.2 0.9 L72.7 0.4 L73.2 1.5 L73.7 1.4 L74.2 1.2 L74.7 0.8 L75.2 0.7 L75.7 1.3 L76.2 0.9 L76.7 0.5 L77.2 1.4 L77.7 1.1 L78.2 1.5 L78.7 1.1 L79.2 0.8 L79.7 0.7 L80.2 1.3 L80.7 1.2 L81.2 1.6 L81.7 1.2 L82.2 0.7 L82.7 1.3 L83.2 1.1 L83.7 0.5 L84.2 1.1 L84.7 1.1 L85.2 0.9 L85.7 1.2 L86.2 1.0 L86.7 1.0 L87.2 0.5 L87.7 1.5 L88.2 0.9 L88.7 0.8 L89.2 1.3 L89.7 1.3 L90.2 0.8 L90.7 0.7 L91.2 0.7 L91.7 1.3 L92.2 0.6 L92.7 1.4 L93.2 1.5 L93.6 0.9 L94.1 1.4 L94.6 0.5 L95.1 1.1 L95.6 1.0 L96.1 1.0 L96.6 0.6 L97.1 1.0 L97.6 1.3 L98.1 1.2 L98.6 0.8 L99.1 1.5 L99.6 1.1 L100.1 1.3 L100.6 0.5 L101.1 0.6 L101.6 0.7 L102.1 0.7 L102.6 1.0 L103.1 1.0 L103.6 1.3 L104.1 1.1 L104.6 1.5 L105.1 0.6 L105.6 0.5 L106.1 0.5 L106.6 0.8 L107.1 0.6 L107.6 1.1 L108.1 0.6 L108.6 1.3 L109.1 1.4 L109.6 0.5 L110.1 1.4 L110.6 1.1 L111.1 0.6 L111.6 1.3 L112.1 1.3 L112.6 0.4 L113.1 0.7 L113.6 0.5 L114.1 0.7 L114.6 1.4 L115.1 0.7 L115.6 0.9 L116.1 1.3 L116.6 1.4 L117.1 0.5 L117.6 1.0 L118.1 1.0 L118.6 1.4 L119.1 0.9 L119.6 1.1 L120.1 1.2 L120.5 1.5 L121.0 1.8 L121.5 1.4 L122.0 2.0 L122.5 1.1 L123.0 1.7 L123.5 1.8 L124.0 2.0 L124.5 1.7 L125.0 2.1 L125.5 1.1 L126.0 1.0 L126.5 1.7 L127.0 2.0 L127.5 2.1 L128.0 1.0 L128.5 1.0 L129.0 1.1 L129.5 1.9 L130.0 1.3 L130.5 1.0 L131.0 1.2 L131.5 1.7 L132.0 1.9 L132.5 1.0 L133.0 1.5 L133.5 1.6 L133.5 19.3 L133.0 19.4 L132.5 19.2 L132.0 18.9 L131.5 18.5 L131.0 19.9 L130.5 19.5 L130.0 18.9 L129.5 18.9 L129.0 19.7 L128.5 20.0 L128.0 19.9 L127.5 18.6 L127.0 19.0 L126.5 19.0 L126.0 19.1 L125.5 19.0 L125.0 18.6 L124.5 19.2 L124.0 18.4 L123.5 19.3 L123.0 19.3 L122.5 19.0 L122.0 18.8 L121.5 19.0 L121.0 18.6 L120.5 19.0 L120.1 19.9 L119.6 19.6 L119.1 19.2 L118.6 19.5 L118.1 19.8 L117.6 19.7 L117.1 20.2 L116.6 18.9 L116.1 18.8 L115.6 19.8 L115.1 20.1 L114.6 18.7 L114.1 20.2 L113.6 20.5 L113.1 19.7 L112.6 20.2 L112.1 18.8 L111.6 18.9 L111.1 19.4 L110.6 19.9 L110.1 19.3 L109.6 20.2 L109.1 18.9 L108.6 19.7 L108.1 20.2 L107.6 19.8 L107.1 20.1 L106.6 19.6 L106.1 20.5 L105.6 20.4 L105.1 19.5 L104.6 19.1 L104.1 19.1 L103.6 19.1 L103.1 20.0 L102.6 19.1 L102.1 20.0 L101.6 20.1 L101.1 20.0 L100.6 20.1 L100.1 19.4 L99.6 19.7 L99.1 19.6 L98.6 19.7 L98.1 19.8 L97.6 19.7 L97.1 19.9 L96.6 20.5 L96.1 19.9 L95.6 19.3 L95.1 19.6 L94.6 20.2 L94.1 19.3 L93.6 20.1 L93.2 18.6 L92.7 18.9 L92.2 20.0 L91.7 19.5 L91.2 19.3 L90.7 20.3 L90.2 20.1 L89.7 19.4 L89.2 19.5 L88.7 19.5 L88.2 19.5 L87.7 19.3 L87.2 20.6 L86.7 19.6 L86.2 19.9 L85.7 19.2 L85.2 19.9 L84.7 19.2 L84.2 19.1 L83.7 19.7 L83.2 19.4 L82.7 19.1 L82.2 19.7 L81.7 19.1 L81.2 19.2 L80.7 19.6 L80.2 19.5 L79.7 19.6 L79.2 19.9 L78.7 19.9 L78.2 19.6 L77.7 19.0 L77.2 18.8 L76.7 19.5 L76.2 19.9 L75.7 19.5 L75.2 19.7 L74.7 20.1 L74.2 19.0 L73.7 19.2 L73.2 18.7 L72.7 20.1 L72.2 19.7 L71.7 20.5 L71.2 19.1 L70.7 19.6 L70.2 18.8 L69.7 19.5 L69.2 20.0 L68.7 19.6 L68.2 20.1 L67.7 19.6 L67.2 19.6 L66.8 19.6 L66.3 19.9 L65.8 20.1 L65.3 20.4 L64.8 19.8 L64.3 19.3 L63.8 19.9 L63.3 19.3 L62.8 19.5 L62.3 19.7 L61.8 19.6 L61.3 20.3 L60.8 19.8 L60.3 19.8 L59.8 18.9 L59.3 20.6 L58.8 18.9 L58.3 19.0 L57.8 20.0 L57.3 20.2 L56.8 19.7 L56.3 20.1 L55.8 19.7 L55.3 20.3 L54.8 20.0 L54.3 19.2 L53.8 19.5 L53.3 18.9 L52.8 18.9 L52.3 20.3 L51.8 19.1 L51.3 18.7 L50.8 19.5 L50.3 19.7 L49.8 19.0 L49.3 19.6 L48.8 20.3 L48.3 19.3 L47.8 19.1 L47.3 19.1 L46.8 19.1 L46.3 19.9 L45.8 19.5 L45.3 19.6 L44.8 19.9 L44.3 19.7 L43.8 19.4 L43.3 20.0 L42.8 20.2 L42.3 19.4 L41.8 19.5 L41.3 19.2 L40.8 18.9 L40.4 20.4 L39.9 19.7 L39.4 19.5 L38.9 19.6 L38.4 20.5 L37.9 19.2 L37.4 19.1 L36.9 19.1 L36.4 19.5 L35.9 19.1 L35.4 18.9 L34.9 19.0 L34.4 19.6 L33.9 19.7 L33.4 19.1 L32.9 19.6 L32.4 19.8 L31.9 20.0 L31.4 19.4 L30.9 20.0 L30.4 19.6 L29.9 18.7 L29.4 19.4 L28.9 20.2 L28.4 19.5 L27.9 19.6 L27.4 20.4 L26.9 18.8 L26.4 19.7 L25.9 20.0 L25.4 19.1 L24.9 19.3 L24.4 20.3 L23.9 19.4 L23.4 19.9 L22.9 20.2 L22.4 19.5 L21.9 20.1 L21.4 19.1 L20.9 19.2 L20.4 19.4 L19.9 19.4 L19.4 20.2 L18.9 19.3 L18.4 19.4 L17.9 19.2 L17.4 19.5 L16.9 19.0 L16.4 19.4 L15.9 19.8 L15.4 19.4 L14.9 19.2 L14.4 19.7 L13.9 19.6 L13.5 19.9 L13.0 19.7 L12.5 19.8 L12.0 19.2 L11.5 19.6 L11.0 19.5 L10.5 19.5 L10.0 18.7 L9.5 18.6 L9.0 19.3 L8.5 18.4 L8.0 19.3 L7.5 19.2 L7.0 18.7 L6.5 19.1 L6.0 18.8 L5.5 19.0 L5.0 19.5 L4.5 19.2 L4.0 18.4 L3.5 19.9 L3.0 19.1 L2.5 19.4 L2.0 18.8 L1.5 18.7 L1.0 19.3 L0.5 18.9 Z" fill="#6ab8d4"/></svg>
<div class="a" style="left:917.5px;top:594px;width:519.5px;height:27px;background:#2b2e32"></div>
<span class="a sb" style="left:951px;top:602px;font-size:10.5px;color:#74c2e0;line-height:12px;white-space:nowrap">Sunday Bright Lights Bass A</span>
<span class="a sb" style="left:1254px;top:602px;font-size:10.5px;color:#74c2e0;line-height:12px">172</span>
<span class="a sb" style="left:1293.5px;top:602px;font-size:10.5px;color:#74c2e0;line-height:12px">4 Bars</span>
<span class="a sb" style="left:1348px;top:602px;font-size:10.5px;color:#74c2e0;line-height:12px">a-Minor</span>
<svg style="left:1418px;top:603.5px" width="10" height="9" viewBox="0 0 10 9"><path d="M5 8.2 L1.3 4.6 C-0.1 3 0.7 0.6 2.7 0.6 C3.8 0.6 4.5 1.2 5 2 C5.5 1.2 6.2 0.6 7.3 0.6 C9.3 0.6 10.1 3 8.7 4.6 Z" fill="none" stroke="#74c2e0" stroke-width="1.1"/></svg>
<svg style="left:1109.5px;top:598px" width="134" height="21" viewBox="0 0 134 21"><rect x="0.5" y="10.0" width="133" height="1" fill="#6ab8d4"/><path d="M0.5 3.7 L1.0 2.3 L1.5 2.9 L2.0 2.3 L2.5 2.6 L3.1 2.4 L3.6 3.0 L4.1 2.7 L4.6 3.0 L5.1 2.5 L5.6 2.3 L6.1 2.9 L6.6 2.7 L7.1 2.5 L7.7 3.6 L7.7 17.1 L7.1 18.2 L6.6 18.2 L6.1 17.7 L5.6 18.2 L5.1 18.3 L4.6 18.0 L4.1 18.1 L3.6 17.7 L3.1 18.2 L2.5 18.3 L2.0 18.6 L1.5 17.9 L1.0 18.5 L0.5 17.3 Z" fill="#6ab8d4"/><path d="M10.1 4.0 L10.6 2.2 L11.2 2.9 L11.7 2.6 L12.2 2.9 L12.8 2.5 L13.3 2.3 L13.8 2.5 L14.4 2.8 L14.9 2.3 L15.4 2.5 L15.9 3.6 L15.9 17.1 L15.4 18.4 L14.9 18.6 L14.4 18.1 L13.8 18.3 L13.3 18.7 L12.8 18.2 L12.2 17.7 L11.7 18.2 L11.2 17.7 L10.6 18.7 L10.1 16.9 Z" fill="#6ab8d4"/><path d="M17.9 3.5 L18.4 2.3 L18.9 2.4 L19.4 2.4 L19.9 2.8 L20.5 2.7 L21.0 2.6 L21.5 2.3 L22.0 2.6 L22.5 2.4 L23.0 2.6 L23.5 2.1 L24.0 2.3 L24.5 2.1 L25.0 3.6 L25.0 17.0 L24.5 18.3 L24.0 18.1 L23.5 18.7 L23.0 18.0 L22.5 18.1 L22.0 18.0 L21.5 18.5 L21.0 18.2 L20.5 18.2 L19.9 18.1 L19.4 18.2 L18.9 18.2 L18.4 18.5 L17.9 17.4 Z" fill="#6ab8d4"/><path d="M26.8 3.4 L27.4 2.0 L27.9 1.8 L28.5 1.9 L29.0 1.7 L29.5 1.7 L30.1 2.1 L30.6 1.5 L31.2 1.6 L31.7 1.9 L32.3 1.9 L32.8 3.2 L32.8 17.7 L32.3 19.0 L31.7 18.8 L31.2 18.9 L30.6 19.3 L30.1 18.7 L29.5 18.9 L29.0 18.6 L28.5 18.6 L27.9 18.7 L27.4 19.0 L26.8 17.4 Z" fill="#6ab8d4"/><path d="M34.6 3.3 L35.1 2.4 L35.7 2.5 L36.2 2.2 L36.7 2.3 L37.2 2.7 L37.8 2.0 L38.3 2.5 L38.8 2.2 L39.3 2.0 L39.9 2.7 L40.4 2.4 L40.9 2.1 L41.5 2.5 L42.0 2.0 L42.5 3.2 L42.5 17.8 L42.0 18.7 L41.5 18.2 L40.9 18.9 L40.4 18.3 L39.9 18.0 L39.3 18.7 L38.8 18.4 L38.3 18.1 L37.8 18.7 L37.2 17.9 L36.7 18.2 L36.2 18.2 L35.7 18.3 L35.1 18.5 L34.6 17.4 Z" fill="#6ab8d4"/><path d="M44.0 3.2 L44.5 1.6 L45.1 1.7 L45.6 1.2 L46.1 1.4 L46.6 2.1 L47.2 1.3 L47.7 2.0 L48.2 1.8 L48.8 1.3 L49.3 2.7 L49.3 18.2 L48.8 19.3 L48.2 18.8 L47.7 18.9 L47.2 19.4 L46.6 18.9 L46.1 19.1 L45.6 19.5 L45.1 19.0 L44.5 19.0 L44.0 17.7 Z" fill="#6ab8d4"/><path d="M50.7 4.1 L51.2 2.9 L51.7 2.9 L52.2 2.8 L52.7 2.9 L53.2 2.4 L53.7 2.9 L54.2 2.7 L54.7 2.4 L55.2 2.2 L55.7 2.8 L56.2 3.0 L56.7 2.6 L57.2 4.1 L57.2 16.7 L56.7 17.9 L56.2 17.5 L55.7 17.9 L55.2 18.5 L54.7 18.2 L54.2 17.7 L53.7 17.9 L53.2 18.5 L52.7 18.1 L52.2 17.9 L51.7 17.8 L51.2 17.6 L50.7 16.9 Z" fill="#6ab8d4"/><path d="M59.6 3.8 L60.2 2.3 L60.7 2.5 L61.2 2.5 L61.8 2.7 L62.3 2.6 L62.8 2.5 L63.4 2.9 L63.9 2.4 L64.5 2.9 L65.0 2.4 L65.5 4.0 L65.5 16.9 L65.0 18.1 L64.5 17.9 L63.9 18.6 L63.4 17.6 L62.8 17.9 L62.3 18.0 L61.8 17.9 L61.2 18.1 L60.7 18.4 L60.2 18.4 L59.6 17.1 Z" fill="#6ab8d4"/><path d="M67.7 3.8 L68.2 2.5 L68.7 2.8 L69.2 2.8 L69.7 2.8 L70.2 2.8 L70.7 2.3 L71.2 3.0 L71.7 2.7 L72.2 2.9 L72.7 2.2 L73.2 2.8 L73.7 2.4 L74.2 2.4 L74.7 3.4 L74.7 17.3 L74.2 18.4 L73.7 18.0 L73.2 18.2 L72.7 18.6 L72.2 17.5 L71.7 18.2 L71.2 17.6 L70.7 18.6 L70.2 17.7 L69.7 17.7 L69.2 18.2 L68.7 17.9 L68.2 18.3 L67.7 16.9 Z" fill="#6ab8d4"/><path d="M76.4 3.2 L76.9 1.3 L77.5 2.0 L78.0 1.5 L78.5 2.0 L79.0 1.6 L79.5 1.5 L80.0 1.9 L80.6 1.4 L81.1 1.3 L81.6 1.7 L82.1 2.2 L82.6 2.0 L83.1 1.6 L83.7 1.9 L84.2 2.9 L84.2 18.0 L83.7 19.1 L83.1 18.7 L82.6 18.6 L82.1 18.6 L81.6 18.7 L81.1 19.1 L80.6 19.6 L80.0 18.8 L79.5 19.3 L79.0 19.1 L78.5 18.3 L78.0 19.3 L77.5 18.4 L76.9 19.2 L76.4 17.7 Z" fill="#6ab8d4"/><path d="M86.7 3.7 L87.2 2.5 L87.7 2.5 L88.3 2.0 L88.8 2.1 L89.3 2.1 L89.8 2.5 L90.4 1.8 L90.9 2.5 L91.4 1.9 L92.0 2.4 L92.5 2.5 L93.0 2.1 L93.6 2.5 L94.1 3.1 L94.1 17.9 L93.6 18.3 L93.0 18.5 L92.5 18.1 L92.0 18.3 L91.4 18.4 L90.9 18.0 L90.4 18.9 L89.8 17.9 L89.3 18.5 L88.8 18.3 L88.3 19.0 L87.7 18.2 L87.2 18.2 L86.7 16.8 Z" fill="#6ab8d4"/><path d="M96.6 3.2 L97.1 1.7 L97.6 1.4 L98.1 1.7 L98.6 1.5 L99.1 1.3 L99.6 1.9 L100.1 1.2 L100.6 2.0 L101.1 1.5 L101.7 1.5 L102.2 1.6 L102.7 2.5 L102.7 18.4 L102.2 19.3 L101.7 19.1 L101.1 19.2 L100.6 18.9 L100.1 19.7 L99.6 18.7 L99.1 19.2 L98.6 19.0 L98.1 19.1 L97.6 19.2 L97.1 18.9 L96.6 17.3 Z" fill="#6ab8d4"/><path d="M104.9 3.5 L105.4 2.6 L105.9 2.4 L106.4 2.4 L106.9 2.9 L107.4 2.9 L107.9 2.9 L108.4 2.2 L108.9 2.7 L109.4 2.3 L109.9 2.8 L110.4 2.6 L110.9 2.7 L111.4 2.2 L111.9 2.4 L112.4 3.5 L112.4 17.4 L111.9 18.5 L111.4 18.1 L110.9 18.2 L110.4 18.1 L109.9 18.1 L109.4 18.1 L108.9 18.1 L108.4 18.4 L107.9 18.1 L107.4 17.7 L106.9 17.9 L106.4 18.0 L105.9 18.1 L105.4 18.0 L104.9 17.4 Z" fill="#6ab8d4"/><path d="M114.0 3.0 L114.5 1.6 L115.0 1.5 L115.5 1.3 L116.1 1.7 L116.6 2.0 L117.1 1.3 L117.7 1.7 L118.2 1.3 L118.7 1.8 L119.2 1.9 L119.8 1.6 L120.3 1.3 L120.8 2.0 L121.3 1.5 L121.9 1.5 L122.4 1.9 L122.9 2.9 L122.9 17.9 L122.4 18.9 L121.9 19.4 L121.3 18.8 L120.8 18.4 L120.3 19.1 L119.8 19.1 L119.2 18.7 L118.7 19.0 L118.2 19.5 L117.7 19.0 L117.1 19.3 L116.6 18.7 L116.1 18.9 L115.5 19.0 L115.0 19.4 L114.5 18.7 L114.0 18.0 Z" fill="#6ab8d4"/><path d="M124.9 3.7 L125.4 2.3 L125.9 2.7 L126.4 2.6 L126.9 2.6 L127.4 2.3 L127.9 2.8 L128.4 2.1 L128.9 2.1 L129.4 2.0 L130.0 2.3 L130.5 2.2 L131.0 2.8 L131.5 2.6 L132.0 2.8 L132.5 2.1 L133.0 2.4 L133.5 3.5 L133.5 17.4 L133.0 18.2 L132.5 18.3 L132.0 17.8 L131.5 17.8 L131.0 18.0 L130.5 18.3 L130.0 18.7 L129.4 18.7 L128.9 18.6 L128.4 18.4 L127.9 18.0 L127.4 18.3 L126.9 18.2 L126.4 18.1 L125.9 17.7 L125.4 18.6 L124.9 17.3 Z" fill="#6ab8d4"/></svg>
<div class="a" style="left:917.5px;top:622px;width:519.5px;height:27px;background:#2b2e32"></div>
<span class="a sb" style="left:951px;top:630px;font-size:10.5px;color:#74c2e0;line-height:12px;white-space:nowrap">Sunday Bright Lights Bass B</span>
<span class="a sb" style="left:1254px;top:630px;font-size:10.5px;color:#74c2e0;line-height:12px">172</span>
<span class="a sb" style="left:1293.5px;top:630px;font-size:10.5px;color:#74c2e0;line-height:12px">4 Bars</span>
<span class="a sb" style="left:1348px;top:630px;font-size:10.5px;color:#74c2e0;line-height:12px">a-Minor</span>
<svg style="left:1418px;top:631.5px" width="10" height="9" viewBox="0 0 10 9"><path d="M5 8.2 L1.3 4.6 C-0.1 3 0.7 0.6 2.7 0.6 C3.8 0.6 4.5 1.2 5 2 C5.5 1.2 6.2 0.6 7.3 0.6 C9.3 0.6 10.1 3 8.7 4.6 Z" fill="none" stroke="#74c2e0" stroke-width="1.1"/></svg>
<svg style="left:1109.5px;top:626px" width="134" height="21" viewBox="0 0 134 21"><path d="M0.5 1.8 L1.0 1.7 L1.5 1.2 L2.0 0.8 L2.5 1.9 L3.0 1.8 L3.5 2.5 L4.0 1.1 L4.5 1.7 L5.0 0.4 L5.5 0.4 L6.0 1.1 L6.5 1.8 L7.0 1.3 L7.5 2.4 L8.0 1.4 L8.5 0.7 L9.0 0.6 L9.5 0.3 L10.0 0.9 L10.5 2.1 L11.0 2.3 L11.5 2.4 L12.0 2.4 L12.5 2.6 L13.0 1.6 L13.5 2.4 L13.9 2.1 L14.4 2.3 L14.9 0.3 L15.4 0.5 L15.9 0.5 L16.4 2.2 L16.9 2.7 L17.4 2.1 L17.9 0.7 L18.4 2.4 L18.9 1.4 L19.4 0.6 L19.9 2.2 L20.4 1.7 L20.9 1.7 L21.4 2.0 L21.9 0.4 L22.4 1.0 L22.9 2.1 L23.4 2.3 L23.9 1.2 L24.4 1.0 L24.9 1.0 L25.4 1.3 L25.9 2.3 L26.4 1.9 L26.9 2.4 L27.4 1.8 L27.9 1.9 L28.4 2.0 L28.9 0.4 L29.4 1.4 L29.9 1.4 L30.4 0.3 L30.9 0.9 L31.4 0.7 L31.9 1.9 L32.4 2.4 L32.9 0.5 L33.4 0.4 L33.9 0.5 L34.4 0.2 L34.9 2.9 L35.4 0.4 L35.9 0.5 L36.4 0.6 L36.9 1.1 L37.4 0.8 L37.9 0.7 L38.4 1.5 L38.9 2.8 L39.4 1.7 L39.9 0.9 L40.4 0.8 L40.8 1.4 L41.3 0.2 L41.8 1.3 L42.3 0.5 L42.8 1.1 L43.3 0.5 L43.8 0.8 L44.3 1.4 L44.8 2.7 L45.3 0.7 L45.8 0.9 L46.3 0.7 L46.8 2.7 L47.3 1.5 L47.8 2.1 L48.3 2.4 L48.8 1.9 L49.3 2.5 L49.8 1.6 L50.3 1.6 L50.8 2.6 L51.3 2.8 L51.8 0.3 L52.3 1.1 L52.8 2.0 L53.3 2.1 L53.8 0.5 L54.3 2.9 L54.8 1.8 L55.3 2.9 L55.8 0.5 L56.3 0.4 L56.8 2.4 L57.3 2.3 L57.8 2.2 L58.3 2.4 L58.8 0.7 L59.3 2.1 L59.8 1.6 L60.3 0.8 L60.8 2.8 L61.3 0.8 L61.8 0.5 L62.3 0.7 L62.8 2.4 L63.3 1.2 L63.8 0.8 L64.3 1.1 L64.8 0.4 L65.3 1.0 L65.8 1.9 L66.3 1.0 L66.8 0.9 L67.2 1.1 L67.7 0.6 L68.2 0.2 L68.7 1.9 L69.2 0.9 L69.7 1.3 L70.2 2.6 L70.7 2.1 L71.2 2.3 L71.7 0.6 L72.2 2.1 L72.7 2.3 L73.2 1.4 L73.7 0.3 L74.2 1.3 L74.7 2.5 L75.2 2.0 L75.7 0.5 L76.2 1.6 L76.7 0.6 L77.2 2.0 L77.7 2.1 L78.2 1.0 L78.7 0.6 L79.2 2.4 L79.7 0.4 L80.2 2.7 L80.7 1.7 L81.2 2.3 L81.7 1.0 L82.2 2.1 L82.7 1.9 L83.2 2.1 L83.7 1.6 L84.2 0.7 L84.7 0.4 L85.2 2.0 L85.7 2.2 L86.2 2.7 L86.7 0.7 L87.2 0.4 L87.7 2.3 L88.2 1.7 L88.7 0.7 L89.2 2.2 L89.7 0.8 L90.2 2.9 L90.7 1.5 L91.2 2.5 L91.7 0.3 L92.2 1.0 L92.7 2.6 L93.2 1.8 L93.6 2.5 L94.1 2.1 L94.6 2.0 L95.1 0.7 L95.6 2.5 L96.1 2.5 L96.6 0.2 L97.1 0.5 L97.6 1.0 L98.1 1.1 L98.6 2.6 L99.1 0.9 L99.6 0.9 L100.1 0.7 L100.6 2.6 L101.1 0.6 L101.6 0.9 L102.1 2.8 L102.6 1.0 L103.1 0.4 L103.6 1.3 L104.1 0.5 L104.6 2.5 L105.1 2.4 L105.6 2.3 L106.1 2.7 L106.6 1.5 L107.1 0.6 L107.6 1.1 L108.1 1.1 L108.6 1.9 L109.1 2.2 L109.6 1.1 L110.1 2.7 L110.6 0.2 L111.1 1.9 L111.6 1.7 L112.1 0.3 L112.6 1.0 L113.1 1.4 L113.6 2.6 L114.1 0.9 L114.6 2.0 L115.1 2.7 L115.6 2.7 L116.1 1.4 L116.6 2.5 L117.1 1.0 L117.6 0.5 L118.1 1.8 L118.6 1.2 L119.1 1.0 L119.6 2.7 L120.1 2.7 L120.5 2.1 L121.0 2.6 L121.5 2.7 L122.0 1.3 L122.5 1.6 L123.0 2.2 L123.5 2.5 L124.0 1.3 L124.5 1.7 L125.0 1.9 L125.5 2.4 L126.0 0.3 L126.5 0.8 L127.0 2.1 L127.5 2.6 L128.0 0.4 L128.5 1.7 L129.0 2.3 L129.5 2.3 L130.0 2.0 L130.5 0.6 L131.0 1.9 L131.5 1.0 L132.0 2.1 L132.5 0.7 L133.0 0.8 L133.5 1.8 L133.5 19.2 L133.0 20.0 L132.5 19.7 L132.0 18.5 L131.5 19.5 L131.0 19.1 L130.5 20.6 L130.0 18.8 L129.5 18.5 L129.0 18.8 L128.5 18.7 L128.0 19.7 L127.5 17.8 L127.0 18.5 L126.5 20.2 L126.0 20.8 L125.5 18.5 L125.0 18.4 L124.5 19.0 L124.0 18.9 L123.5 17.8 L123.0 18.8 L122.5 19.2 L122.0 19.5 L121.5 17.6 L121.0 18.1 L120.5 18.2 L120.1 17.9 L119.6 17.7 L119.1 19.3 L118.6 19.6 L118.1 18.8 L117.6 20.2 L117.1 19.7 L116.6 18.5 L116.1 19.1 L115.6 18.4 L115.1 17.7 L114.6 18.7 L114.1 19.8 L113.6 17.6 L113.1 18.9 L112.6 19.6 L112.1 20.3 L111.6 18.8 L111.1 18.4 L110.6 20.0 L110.1 17.7 L109.6 19.1 L109.1 18.9 L108.6 19.2 L108.1 20.0 L107.6 19.8 L107.1 20.3 L106.6 18.9 L106.1 18.2 L105.6 18.1 L105.1 18.7 L104.6 18.3 L104.1 19.7 L103.6 19.7 L103.1 20.1 L102.6 19.5 L102.1 17.8 L101.6 19.5 L101.1 19.7 L100.6 18.4 L100.1 19.5 L99.6 19.8 L99.1 19.6 L98.6 18.3 L98.1 20.1 L97.6 19.8 L97.1 20.0 L96.6 19.9 L96.1 18.1 L95.6 18.0 L95.1 19.6 L94.6 19.1 L94.1 18.2 L93.6 18.4 L93.2 19.3 L92.7 18.2 L92.2 19.3 L91.7 20.8 L91.2 18.3 L90.7 19.3 L90.2 18.3 L89.7 19.7 L89.2 18.5 L88.7 19.6 L88.2 19.0 L87.7 18.3 L87.2 19.7 L86.7 20.1 L86.2 17.6 L85.7 18.6 L85.2 18.6 L84.7 19.7 L84.2 20.4 L83.7 18.8 L83.2 18.6 L82.7 18.8 L82.2 18.3 L81.7 19.6 L81.2 18.7 L80.7 18.7 L80.2 17.6 L79.7 20.5 L79.2 17.9 L78.7 20.5 L78.2 19.9 L77.7 18.5 L77.2 19.0 L76.7 19.9 L76.2 19.4 L75.7 19.8 L75.2 19.1 L74.7 18.0 L74.2 19.3 L73.7 20.7 L73.2 19.6 L72.7 18.7 L72.2 18.7 L71.7 19.8 L71.2 18.4 L70.7 18.3 L70.2 17.9 L69.7 19.0 L69.2 20.1 L68.7 18.5 L68.2 19.9 L67.7 20.0 L67.2 19.3 L66.8 19.5 L66.3 19.0 L65.8 18.4 L65.3 20.0 L64.8 19.9 L64.3 19.6 L63.8 19.6 L63.3 19.6 L62.8 17.8 L62.3 20.2 L61.8 20.1 L61.3 19.8 L60.8 18.2 L60.3 19.9 L59.8 18.9 L59.3 18.6 L58.8 19.6 L58.3 18.5 L57.8 18.4 L57.3 18.4 L56.8 18.2 L56.3 20.3 L55.8 20.2 L55.3 17.5 L54.8 19.1 L54.3 18.1 L53.8 19.7 L53.3 18.5 L52.8 18.7 L52.3 19.7 L51.8 20.6 L51.3 17.7 L50.8 18.0 L50.3 19.5 L49.8 18.7 L49.3 18.0 L48.8 18.3 L48.3 18.6 L47.8 18.4 L47.3 18.8 L46.8 18.1 L46.3 19.9 L45.8 20.0 L45.3 20.2 L44.8 18.1 L44.3 19.7 L43.8 19.3 L43.3 19.8 L42.8 19.7 L42.3 19.8 L41.8 19.1 L41.3 19.9 L40.8 19.3 L40.4 20.0 L39.9 19.6 L39.4 18.7 L38.9 17.5 L38.4 18.7 L37.9 20.1 L37.4 20.4 L36.9 19.1 L36.4 20.5 L35.9 19.7 L35.4 20.0 L34.9 17.5 L34.4 19.9 L33.9 19.8 L33.4 20.8 L32.9 20.5 L32.4 18.7 L31.9 18.7 L31.4 20.5 L30.9 20.0 L30.4 20.9 L29.9 19.7 L29.4 19.3 L28.9 19.9 L28.4 18.3 L27.9 18.3 L27.4 19.3 L26.9 18.2 L26.4 18.6 L25.9 18.5 L25.4 19.1 L24.9 19.9 L24.4 19.3 L23.9 19.9 L23.4 18.6 L22.9 18.6 L22.4 19.7 L21.9 19.9 L21.4 18.5 L20.9 19.4 L20.4 19.2 L19.9 18.4 L19.4 19.6 L18.9 19.3 L18.4 17.9 L17.9 20.1 L17.4 18.9 L16.9 18.1 L16.4 19.0 L15.9 20.0 L15.4 20.0 L14.9 20.6 L14.4 18.6 L13.9 18.6 L13.5 18.0 L13.0 19.0 L12.5 18.3 L12.0 18.0 L11.5 18.2 L11.0 18.2 L10.5 19.0 L10.0 19.6 L9.5 19.9 L9.0 20.2 L8.5 19.6 L8.0 18.8 L7.5 18.1 L7.0 19.7 L6.5 18.5 L6.0 19.3 L5.5 20.4 L5.0 20.6 L4.5 18.7 L4.0 20.0 L3.5 18.2 L3.0 18.7 L2.5 19.1 L2.0 19.4 L1.5 19.1 L1.0 19.5 L0.5 18.8 Z" fill="#6ab8d4"/><g stroke="#6ab8d4" stroke-width="0.6" opacity="0.7"><path d="M102.8 0.2 l0 20.6"/><path d="M93.7 0.2 l0 20.6"/><path d="M33.1 0.2 l0 20.6"/><path d="M40.9 0.2 l0 20.6"/><path d="M41.6 0.2 l0 20.6"/><path d="M47.9 0.2 l0 20.6"/></g></svg>
<div class="a" style="left:917.5px;top:650px;width:519.5px;height:27px;background:#2b2e32"></div>
<span class="a sb" style="left:951px;top:658px;font-size:10.5px;color:#74c2e0;line-height:12px;white-space:nowrap">Xavier my Dear Bass A</span>
<span class="a sb" style="left:1254px;top:658px;font-size:10.5px;color:#74c2e0;line-height:12px">172</span>
<span class="a sb" style="left:1293.5px;top:658px;font-size:10.5px;color:#74c2e0;line-height:12px">8 Bars</span>
<span class="a sb" style="left:1348px;top:658px;font-size:10.5px;color:#74c2e0;line-height:12px">a-Minor</span>
<svg style="left:1418px;top:659.5px" width="10" height="9" viewBox="0 0 10 9"><path d="M5 8.2 L1.3 4.6 C-0.1 3 0.7 0.6 2.7 0.6 C3.8 0.6 4.5 1.2 5 2 C5.5 1.2 6.2 0.6 7.3 0.6 C9.3 0.6 10.1 3 8.7 4.6 Z" fill="none" stroke="#74c2e0" stroke-width="1.1"/></svg>
<svg style="left:1109.5px;top:654px" width="134" height="21" viewBox="0 0 134 21"><path d="M0.5 2.3 L1.0 1.1 L1.5 1.0 L2.0 1.4 L2.5 1.9 L3.0 1.8 L3.5 1.5 L4.0 1.7 L4.5 1.6 L5.0 1.1 L5.5 0.9 L6.0 1.5 L6.5 1.3 L7.0 1.3 L7.5 2.0 L8.0 2.2 L8.5 1.7 L9.0 1.7 L9.5 1.2 L10.0 1.7 L10.5 2.1 L11.0 2.0 L11.5 1.4 L12.0 1.8 L12.5 1.1 L13.0 1.2 L13.5 1.9 L13.9 1.2 L14.4 0.8 L14.9 1.6 L15.4 1.9 L15.9 1.5 L16.4 1.1 L16.9 0.9 L17.4 1.0 L17.9 1.6 L18.4 1.1 L18.9 1.7 L19.4 1.2 L19.9 1.9 L20.4 0.9 L20.9 0.9 L21.4 1.4 L21.9 2.1 L22.4 1.7 L22.9 1.6 L23.4 1.6 L23.9 1.8 L24.4 1.8 L24.9 1.0 L25.4 0.9 L25.9 2.1 L26.4 2.1 L26.9 1.1 L27.4 1.9 L27.9 1.9 L28.4 1.3 L28.9 0.9 L29.4 1.5 L29.9 1.6 L30.4 1.1 L30.9 2.2 L31.4 1.2 L31.9 2.1 L32.4 1.9 L32.9 1.5 L33.4 0.9 L33.9 0.9 L34.4 1.6 L34.9 1.0 L35.4 0.9 L35.9 1.4 L36.4 1.4 L36.9 1.0 L37.4 2.0 L37.9 1.4 L38.4 1.1 L38.9 1.3 L39.4 2.0 L39.9 1.3 L40.4 1.2 L40.8 2.0 L41.3 2.2 L41.8 1.6 L42.3 1.1 L42.8 2.2 L43.3 1.6 L43.8 1.0 L44.3 2.0 L44.8 1.2 L45.3 1.4 L45.8 1.1 L46.3 2.0 L46.8 1.1 L47.3 1.7 L47.8 2.2 L48.3 1.7 L48.8 1.6 L49.3 1.1 L49.8 2.0 L50.3 1.5 L50.8 1.3 L51.3 1.3 L51.8 1.5 L52.3 1.0 L52.8 1.8 L53.3 2.1 L53.8 1.4 L54.3 2.2 L54.8 1.3 L55.3 1.9 L55.8 0.9 L56.3 1.6 L56.8 1.4 L57.3 1.7 L57.8 1.1 L58.3 1.3 L58.8 1.3 L59.3 1.8 L59.8 2.0 L60.3 1.7 L60.8 1.7 L61.3 1.9 L61.8 0.8 L62.3 1.6 L62.8 0.9 L63.3 1.8 L63.8 1.8 L64.3 0.9 L64.8 1.9 L65.3 1.5 L65.8 1.9 L66.3 1.3 L66.8 1.3 L67.2 1.6 L67.7 1.0 L68.2 0.9 L68.7 0.9 L69.2 1.0 L69.7 1.4 L70.2 2.1 L70.7 1.1 L71.2 1.7 L71.7 1.2 L72.2 2.2 L72.7 1.8 L73.2 1.9 L73.7 0.8 L74.2 2.2 L74.7 1.7 L75.2 1.6 L75.7 1.5 L76.2 1.3 L76.7 1.1 L77.2 1.2 L77.7 1.7 L78.2 1.3 L78.7 2.3 L79.2 2.1 L79.7 0.9 L80.2 1.9 L80.7 1.7 L81.2 0.9 L81.7 1.6 L82.2 2.2 L82.7 2.3 L83.2 1.6 L83.7 2.1 L84.2 1.7 L84.7 2.1 L85.2 1.8 L85.7 1.8 L86.2 0.9 L86.7 2.0 L87.2 1.6 L87.7 2.1 L88.2 2.2 L88.7 2.0 L89.2 1.7 L89.7 1.3 L90.2 0.9 L90.7 1.0 L91.2 2.2 L91.7 2.2 L92.2 2.0 L92.7 2.0 L93.2 2.0 L93.6 1.8 L94.1 1.3 L94.6 1.5 L95.1 1.9 L95.6 2.2 L96.1 2.2 L96.6 1.2 L97.1 1.4 L97.6 1.5 L98.1 0.9 L98.6 1.1 L99.1 2.3 L99.6 0.9 L100.1 2.3 L100.6 0.9 L101.1 1.5 L101.6 1.1 L102.1 1.7 L102.6 2.1 L103.1 1.3 L103.6 2.1 L104.1 2.3 L104.6 1.6 L105.1 1.4 L105.6 1.3 L106.1 1.6 L106.6 1.5 L107.1 2.3 L107.6 1.3 L108.1 1.7 L108.6 1.7 L109.1 1.6 L109.6 1.1 L110.1 2.1 L110.6 1.7 L111.1 2.0 L111.6 1.4 L112.1 1.8 L112.6 1.7 L113.1 1.9 L113.6 1.2 L114.1 1.2 L114.6 1.8 L115.1 1.2 L115.6 1.0 L116.1 2.0 L116.6 1.6 L117.1 2.1 L117.6 1.8 L118.1 1.0 L118.6 1.0 L119.1 1.6 L119.6 2.0 L120.1 1.9 L120.5 1.4 L121.0 2.0 L121.5 2.1 L122.0 1.9 L122.5 1.4 L123.0 2.0 L123.5 1.1 L124.0 1.7 L124.5 1.4 L125.0 1.9 L125.5 1.3 L126.0 1.1 L126.5 2.0 L127.0 2.2 L127.5 2.0 L128.0 1.0 L128.5 1.9 L129.0 2.2 L129.5 1.1 L130.0 1.5 L130.5 1.1 L131.0 1.1 L131.5 1.8 L132.0 1.8 L132.5 1.4 L133.0 0.9 L133.5 1.6 L133.5 19.4 L133.0 20.1 L132.5 19.6 L132.0 19.0 L131.5 18.8 L131.0 20.0 L130.5 19.7 L130.0 19.1 L129.5 20.0 L129.0 18.8 L128.5 19.2 L128.0 20.1 L127.5 18.7 L127.0 18.8 L126.5 19.0 L126.0 19.6 L125.5 19.7 L125.0 19.1 L124.5 19.3 L124.0 19.2 L123.5 19.9 L123.0 18.7 L122.5 19.3 L122.0 19.0 L121.5 18.7 L121.0 18.7 L120.5 19.4 L120.1 19.1 L119.6 18.7 L119.1 19.3 L118.6 20.0 L118.1 19.5 L117.6 19.3 L117.1 18.9 L116.6 19.2 L116.1 18.7 L115.6 20.2 L115.1 19.4 L114.6 18.8 L114.1 19.7 L113.6 19.4 L113.1 18.9 L112.6 19.4 L112.1 18.9 L111.6 19.6 L111.1 19.0 L110.6 19.2 L110.1 18.7 L109.6 20.1 L109.1 19.2 L108.6 19.1 L108.1 19.2 L107.6 19.4 L107.1 18.5 L106.6 19.5 L106.1 19.1 L105.6 19.4 L105.1 19.2 L104.6 19.1 L104.1 18.9 L103.6 18.7 L103.1 19.6 L102.6 18.5 L102.1 19.4 L101.6 19.7 L101.1 19.6 L100.6 20.0 L100.1 18.6 L99.6 20.1 L99.1 18.8 L98.6 20.0 L98.1 20.0 L97.6 19.1 L97.1 19.5 L96.6 19.9 L96.1 18.4 L95.6 18.6 L95.1 19.3 L94.6 19.5 L94.1 19.3 L93.6 19.2 L93.2 18.7 L92.7 18.9 L92.2 18.7 L91.7 18.9 L91.2 18.4 L90.7 19.6 L90.2 20.2 L89.7 19.8 L89.2 19.2 L88.7 19.0 L88.2 18.9 L87.7 18.6 L87.2 19.1 L86.7 19.2 L86.2 20.1 L85.7 18.8 L85.2 19.4 L84.7 18.6 L84.2 19.0 L83.7 18.8 L83.2 19.4 L82.7 18.5 L82.2 18.5 L81.7 19.5 L81.2 20.0 L80.7 19.0 L80.2 19.2 L79.7 20.2 L79.2 18.6 L78.7 18.8 L78.2 19.5 L77.7 19.2 L77.2 19.5 L76.7 19.6 L76.2 19.6 L75.7 19.2 L75.2 19.3 L74.7 19.0 L74.2 18.9 L73.7 20.2 L73.2 18.7 L72.7 18.9 L72.2 18.6 L71.7 19.6 L71.2 19.3 L70.7 19.7 L70.2 18.8 L69.7 19.2 L69.2 19.5 L68.7 20.3 L68.2 19.7 L67.7 19.5 L67.2 19.6 L66.8 19.6 L66.3 19.2 L65.8 18.8 L65.3 19.4 L64.8 19.1 L64.3 20.1 L63.8 19.1 L63.3 19.2 L62.8 20.2 L62.3 19.5 L61.8 20.2 L61.3 18.7 L60.8 19.1 L60.3 19.1 L59.8 18.8 L59.3 19.1 L58.8 19.6 L58.3 19.8 L57.8 19.9 L57.3 19.3 L56.8 19.2 L56.3 19.1 L55.8 19.9 L55.3 19.1 L54.8 19.3 L54.3 18.5 L53.8 19.6 L53.3 18.8 L52.8 19.0 L52.3 20.1 L51.8 19.5 L51.3 19.8 L50.8 19.8 L50.3 19.2 L49.8 19.1 L49.3 19.5 L48.8 19.4 L48.3 19.3 L47.8 18.8 L47.3 19.0 L46.8 20.0 L46.3 19.2 L45.8 19.6 L45.3 19.2 L44.8 19.6 L44.3 19.0 L43.8 19.7 L43.3 19.4 L42.8 18.6 L42.3 19.5 L41.8 19.3 L41.3 18.5 L40.8 19.1 L40.4 19.5 L39.9 19.6 L39.4 19.2 L38.9 19.3 L38.4 19.5 L37.9 19.5 L37.4 18.8 L36.9 20.0 L36.4 19.5 L35.9 19.2 L35.4 20.0 L34.9 19.8 L34.4 19.2 L33.9 19.9 L33.4 19.9 L32.9 19.5 L32.4 19.1 L31.9 18.6 L31.4 19.6 L30.9 18.9 L30.4 19.7 L29.9 19.5 L29.4 19.6 L28.9 19.6 L28.4 19.5 L27.9 18.7 L27.4 19.3 L26.9 20.1 L26.4 18.6 L25.9 18.8 L25.4 19.7 L24.9 19.9 L24.4 19.2 L23.9 18.9 L23.4 19.3 L22.9 19.0 L22.4 19.0 L21.9 18.6 L21.4 19.4 L20.9 19.8 L20.4 19.9 L19.9 19.2 L19.4 19.8 L18.9 19.3 L18.4 19.6 L17.9 19.0 L17.4 20.0 L16.9 19.9 L16.4 20.0 L15.9 19.2 L15.4 19.1 L14.9 19.5 L14.4 19.9 L13.9 19.7 L13.5 19.0 L13.0 19.6 L12.5 20.0 L12.0 18.9 L11.5 19.8 L11.0 19.0 L10.5 19.0 L10.0 19.2 L9.5 19.6 L9.0 18.9 L8.5 19.4 L8.0 18.8 L7.5 18.9 L7.0 19.4 L6.5 19.8 L6.0 19.7 L5.5 20.1 L5.0 20.0 L4.5 19.2 L4.0 19.1 L3.5 19.5 L3.0 19.4 L2.5 18.7 L2.0 19.3 L1.5 20.1 L1.0 19.8 L0.5 18.3 Z" fill="#6ab8d4"/><rect x="3.5" y="3.2" width="0.7" height="14.7" fill="#2b2e32" opacity="0.35"/><rect x="17" y="3.2" width="0.7" height="14.7" fill="#2b2e32" opacity="0.35"/><rect x="20.5" y="3.2" width="0.7" height="14.7" fill="#2b2e32" opacity="0.35"/><rect x="33" y="3.2" width="0.7" height="14.7" fill="#2b2e32" opacity="0.35"/><rect x="37.5" y="3.2" width="0.7" height="14.7" fill="#2b2e32" opacity="0.35"/><rect x="41.5" y="3.2" width="0.7" height="14.7" fill="#2b2e32" opacity="0.35"/><rect x="54.5" y="3.2" width="0.7" height="14.7" fill="#2b2e32" opacity="0.35"/><rect x="69.5" y="3.2" width="0.7" height="14.7" fill="#2b2e32" opacity="0.35"/><rect x="82.5" y="3.2" width="0.7" height="14.7" fill="#2b2e32" opacity="0.35"/><rect x="87.5" y="3.2" width="0.7" height="14.7" fill="#2b2e32" opacity="0.35"/><rect x="100" y="3.2" width="0.7" height="14.7" fill="#2b2e32" opacity="0.35"/><rect x="107" y="3.2" width="0.7" height="14.7" fill="#2b2e32" opacity="0.35"/><rect x="119.5" y="3.2" width="0.7" height="14.7" fill="#2b2e32" opacity="0.35"/><rect x="124" y="3.2" width="0.7" height="14.7" fill="#2b2e32" opacity="0.35"/><rect x="41.5" y="0" width="1" height="21" fill="#2b2e32"/><rect x="41.5" y="10.0" width="1" height="1" fill="#6ab8d4"/><rect x="107.5" y="0" width="1" height="21" fill="#2b2e32"/><rect x="107.5" y="10.0" width="1" height="1" fill="#6ab8d4"/></svg>
<div class="a" style="left:917.5px;top:678px;width:519.5px;height:27px;background:#363a42"></div>
<span class="a sb" style="left:951px;top:686px;font-size:10.5px;color:#74c2e0;line-height:12px;white-space:nowrap">Xavier my Dear Bass B</span>
<span class="a sb" style="left:1254px;top:686px;font-size:10.5px;color:#74c2e0;line-height:12px">172</span>
<span class="a sb" style="left:1293.5px;top:686px;font-size:10.5px;color:#74c2e0;line-height:12px">8 Bars</span>
<span class="a sb" style="left:1348px;top:686px;font-size:10.5px;color:#74c2e0;line-height:12px">a-Minor</span>
<svg style="left:1418px;top:687.5px" width="10" height="9" viewBox="0 0 10 9"><path d="M5 8.2 L1.3 4.6 C-0.1 3 0.7 0.6 2.7 0.6 C3.8 0.6 4.5 1.2 5 2 C5.5 1.2 6.2 0.6 7.3 0.6 C9.3 0.6 10.1 3 8.7 4.6 Z" fill="none" stroke="#74c2e0" stroke-width="1.1"/></svg>
<svg style="left:1109.5px;top:682px" width="134" height="21" viewBox="0 0 134 21"><path d="M0.5 3.8 L1.0 3.9 L1.5 3.2 L2.0 3.9 L2.5 3.5 L3.0 3.2 L3.5 3.6 L4.0 3.7 L4.5 3.9 L5.0 4.0 L5.5 3.9 L6.0 3.7 L6.5 3.8 L7.0 3.7 L7.5 3.6 L8.0 3.9 L8.5 3.1 L9.0 3.2 L9.5 3.8 L10.0 3.6 L10.5 3.0 L11.0 3.0 L11.5 3.7 L12.0 3.9 L12.5 3.0 L13.0 3.0 L13.5 3.9 L13.9 3.6 L14.4 3.9 L14.9 3.6 L15.4 3.5 L15.9 3.0 L16.4 3.7 L16.9 4.0 L17.4 3.1 L17.9 3.2 L18.4 3.7 L18.9 3.3 L19.4 3.7 L19.9 3.2 L20.4 4.0 L20.9 3.6 L21.4 3.4 L21.9 3.2 L22.4 3.7 L22.9 3.2 L23.4 3.8 L23.9 3.4 L24.4 3.8 L24.9 3.5 L25.4 3.9 L25.9 3.7 L26.4 3.9 L26.9 3.5 L27.4 3.0 L27.9 3.0 L28.4 4.0 L28.9 3.0 L29.4 3.1 L29.9 3.1 L30.4 3.6 L30.9 3.4 L31.4 3.0 L31.9 3.2 L32.4 3.0 L32.9 3.2 L33.4 3.6 L33.9 3.5 L34.4 3.0 L34.9 3.9 L35.4 3.7 L35.9 3.3 L36.4 3.9 L36.9 3.6 L37.4 3.4 L37.9 3.2 L38.4 3.8 L38.9 3.1 L39.4 3.8 L39.9 3.2 L40.4 3.8 L40.8 3.0 L41.3 3.5 L41.8 3.2 L42.3 3.1 L42.8 3.5 L43.3 3.8 L43.8 3.9 L44.3 3.8 L44.8 3.5 L45.3 3.4 L45.8 3.0 L46.3 3.6 L46.8 3.4 L47.3 3.8 L47.8 3.7 L48.3 3.3 L48.8 3.8 L49.3 3.5 L49.8 3.8 L50.3 3.9 L50.8 3.3 L51.3 3.2 L51.8 3.4 L52.3 3.0 L52.8 3.3 L53.3 3.3 L53.8 4.0 L54.3 3.9 L54.8 3.2 L55.3 3.4 L55.8 3.2 L56.3 3.7 L56.8 3.5 L57.3 3.7 L57.8 4.0 L58.3 3.4 L58.8 3.5 L59.3 3.9 L59.8 3.3 L60.3 3.6 L60.8 3.4 L61.3 3.1 L61.8 3.2 L62.3 3.7 L62.8 3.4 L63.3 3.9 L63.8 3.2 L64.3 3.3 L64.8 3.9 L65.3 3.3 L65.8 3.9 L66.3 3.7 L66.8 3.2 L67.2 3.6 L67.7 3.4 L68.2 3.8 L68.7 3.8 L69.2 3.7 L69.7 3.4 L70.2 3.4 L70.7 3.2 L71.2 3.7 L71.7 3.7 L72.2 3.8 L72.7 3.4 L73.2 3.3 L73.7 4.0 L74.2 3.6 L74.7 3.6 L75.2 3.2 L75.7 3.3 L76.2 3.0 L76.7 3.1 L77.2 3.7 L77.7 3.4 L78.2 3.7 L78.7 3.3 L79.2 3.4 L79.7 3.0 L80.2 3.5 L80.7 3.2 L81.2 3.0 L81.7 3.2 L82.2 3.0 L82.7 3.0 L83.2 3.2 L83.7 3.7 L84.2 3.9 L84.7 3.8 L85.2 3.6 L85.7 3.8 L86.2 3.3 L86.7 3.7 L87.2 3.2 L87.7 3.6 L88.2 3.7 L88.7 3.9 L89.2 3.4 L89.7 3.0 L90.2 3.1 L90.7 4.0 L91.2 3.7 L91.7 3.5 L92.2 3.4 L92.7 3.7 L93.2 3.3 L93.6 3.2 L94.1 3.2 L94.6 3.9 L95.1 3.3 L95.6 3.0 L96.1 4.0 L96.6 3.5 L97.1 3.0 L97.6 3.8 L98.1 3.8 L98.6 3.1 L99.1 3.6 L99.6 3.0 L100.1 3.5 L100.6 3.9 L101.1 4.0 L101.6 3.4 L102.1 4.0 L102.6 3.7 L103.1 3.7 L103.6 3.3 L104.1 3.6 L104.6 3.3 L105.1 3.4 L105.6 3.4 L106.1 3.1 L106.6 3.4 L107.1 3.1 L107.6 3.8 L108.1 3.6 L108.6 3.7 L109.1 3.9 L109.6 3.7 L110.1 3.4 L110.6 3.4 L111.1 3.3 L111.6 3.7 L112.1 3.2 L112.6 3.3 L113.1 3.8 L113.6 3.1 L114.1 3.9 L114.6 3.8 L115.1 3.7 L115.6 3.0 L116.1 3.1 L116.6 3.1 L117.1 3.6 L117.6 3.3 L118.1 3.3 L118.6 3.8 L119.1 3.5 L119.6 3.4 L120.1 3.4 L120.5 3.9 L121.0 3.9 L121.5 3.9 L122.0 3.1 L122.5 3.2 L123.0 3.7 L123.5 3.7 L124.0 3.6 L124.5 3.0 L125.0 3.8 L125.5 3.7 L126.0 4.0 L126.5 3.2 L127.0 3.4 L127.5 3.6 L128.0 3.4 L128.5 3.3 L129.0 3.5 L129.5 3.6 L130.0 3.8 L130.5 3.2 L131.0 3.0 L131.5 3.9 L132.0 3.3 L132.5 3.1 L133.0 3.5 L133.5 3.4 L133.5 17.6 L133.0 17.5 L132.5 17.9 L132.0 17.7 L131.5 17.1 L131.0 18.0 L130.5 17.8 L130.0 17.2 L129.5 17.4 L129.0 17.5 L128.5 17.7 L128.0 17.6 L127.5 17.4 L127.0 17.6 L126.5 17.8 L126.0 17.0 L125.5 17.3 L125.0 17.2 L124.5 18.0 L124.0 17.4 L123.5 17.3 L123.0 17.3 L122.5 17.8 L122.0 17.9 L121.5 17.1 L121.0 17.1 L120.5 17.1 L120.1 17.6 L119.6 17.6 L119.1 17.5 L118.6 17.2 L118.1 17.7 L117.6 17.7 L117.1 17.4 L116.6 17.9 L116.1 17.9 L115.6 18.0 L115.1 17.3 L114.6 17.2 L114.1 17.1 L113.6 17.9 L113.1 17.2 L112.6 17.7 L112.1 17.8 L111.6 17.3 L111.1 17.7 L110.6 17.6 L110.1 17.6 L109.6 17.3 L109.1 17.1 L108.6 17.3 L108.1 17.4 L107.6 17.2 L107.1 17.9 L106.6 17.6 L106.1 17.9 L105.6 17.6 L105.1 17.6 L104.6 17.7 L104.1 17.4 L103.6 17.7 L103.1 17.3 L102.6 17.3 L102.1 17.0 L101.6 17.6 L101.1 17.0 L100.6 17.1 L100.1 17.5 L99.6 18.0 L99.1 17.4 L98.6 17.9 L98.1 17.2 L97.6 17.2 L97.1 18.0 L96.6 17.5 L96.1 17.0 L95.6 18.0 L95.1 17.7 L94.6 17.1 L94.1 17.8 L93.6 17.8 L93.2 17.7 L92.7 17.3 L92.2 17.6 L91.7 17.5 L91.2 17.3 L90.7 17.0 L90.2 17.9 L89.7 18.0 L89.2 17.6 L88.7 17.1 L88.2 17.3 L87.7 17.4 L87.2 17.8 L86.7 17.3 L86.2 17.7 L85.7 17.2 L85.2 17.4 L84.7 17.2 L84.2 17.1 L83.7 17.3 L83.2 17.8 L82.7 18.0 L82.2 18.0 L81.7 17.8 L81.2 18.0 L80.7 17.8 L80.2 17.5 L79.7 18.0 L79.2 17.6 L78.7 17.7 L78.2 17.3 L77.7 17.6 L77.2 17.3 L76.7 17.9 L76.2 18.0 L75.7 17.7 L75.2 17.8 L74.7 17.4 L74.2 17.4 L73.7 17.0 L73.2 17.7 L72.7 17.6 L72.2 17.2 L71.7 17.3 L71.2 17.3 L70.7 17.8 L70.2 17.6 L69.7 17.6 L69.2 17.3 L68.7 17.2 L68.2 17.2 L67.7 17.6 L67.2 17.4 L66.8 17.8 L66.3 17.3 L65.8 17.1 L65.3 17.7 L64.8 17.1 L64.3 17.7 L63.8 17.8 L63.3 17.1 L62.8 17.6 L62.3 17.3 L61.8 17.8 L61.3 17.9 L60.8 17.6 L60.3 17.4 L59.8 17.7 L59.3 17.1 L58.8 17.5 L58.3 17.6 L57.8 17.0 L57.3 17.3 L56.8 17.5 L56.3 17.3 L55.8 17.8 L55.3 17.6 L54.8 17.8 L54.3 17.1 L53.8 17.0 L53.3 17.7 L52.8 17.7 L52.3 18.0 L51.8 17.6 L51.3 17.8 L50.8 17.7 L50.3 17.1 L49.8 17.2 L49.3 17.5 L48.8 17.2 L48.3 17.7 L47.8 17.3 L47.3 17.2 L46.8 17.6 L46.3 17.4 L45.8 18.0 L45.3 17.6 L44.8 17.5 L44.3 17.2 L43.8 17.1 L43.3 17.2 L42.8 17.5 L42.3 17.9 L41.8 17.8 L41.3 17.5 L40.8 18.0 L40.4 17.2 L39.9 17.8 L39.4 17.2 L38.9 17.9 L38.4 17.2 L37.9 17.8 L37.4 17.6 L36.9 17.4 L36.4 17.1 L35.9 17.7 L35.4 17.3 L34.9 17.1 L34.4 18.0 L33.9 17.5 L33.4 17.4 L32.9 17.8 L32.4 18.0 L31.9 17.8 L31.4 18.0 L30.9 17.6 L30.4 17.4 L29.9 17.9 L29.4 17.9 L28.9 18.0 L28.4 17.0 L27.9 18.0 L27.4 18.0 L26.9 17.5 L26.4 17.1 L25.9 17.3 L25.4 17.1 L24.9 17.5 L24.4 17.2 L23.9 17.6 L23.4 17.2 L22.9 17.8 L22.4 17.3 L21.9 17.8 L21.4 17.6 L20.9 17.4 L20.4 17.0 L19.9 17.8 L19.4 17.3 L18.9 17.7 L18.4 17.3 L17.9 17.8 L17.4 17.9 L16.9 17.0 L16.4 17.3 L15.9 18.0 L15.4 17.5 L14.9 17.4 L14.4 17.1 L13.9 17.4 L13.5 17.1 L13.0 18.0 L12.5 18.0 L12.0 17.1 L11.5 17.3 L11.0 18.0 L10.5 18.0 L10.0 17.4 L9.5 17.2 L9.0 17.8 L8.5 17.9 L8.0 17.1 L7.5 17.4 L7.0 17.3 L6.5 17.2 L6.0 17.3 L5.5 17.1 L5.0 17.0 L4.5 17.1 L4.0 17.3 L3.5 17.4 L3.0 17.8 L2.5 17.5 L2.0 17.1 L1.5 17.8 L1.0 17.1 L0.5 17.2 Z" fill="#6ab8d4"/><rect x="1.0" y="2.0" width="0.8" height="17.0" fill="#6ab8d4" opacity="0.8"/><rect x="2.4" y="1.9" width="0.8" height="17.3" fill="#6ab8d4" opacity="0.8"/><rect x="3.7" y="2.7" width="0.8" height="15.7" fill="#6ab8d4" opacity="0.8"/><rect x="5.5" y="1.8" width="0.8" height="17.5" fill="#6ab8d4" opacity="0.8"/><rect x="7.4" y="1.9" width="0.8" height="17.2" fill="#6ab8d4" opacity="0.8"/><rect x="9.3" y="2.6" width="0.8" height="15.9" fill="#6ab8d4" opacity="0.8"/><rect x="10.1" y="2.8" width="0.8" height="15.4" fill="#6ab8d4" opacity="0.8"/><rect x="12.1" y="2.2" width="0.8" height="16.5" fill="#6ab8d4" opacity="0.8"/><rect x="14.0" y="1.8" width="0.8" height="17.3" fill="#6ab8d4" opacity="0.8"/><rect x="15.1" y="2.6" width="0.8" height="15.8" fill="#6ab8d4" opacity="0.8"/><rect x="16.3" y="2.5" width="0.8" height="15.9" fill="#6ab8d4" opacity="0.8"/><rect x="18.4" y="2.1" width="0.8" height="16.7" fill="#6ab8d4" opacity="0.8"/><rect x="19.3" y="2.2" width="0.8" height="16.5" fill="#6ab8d4" opacity="0.8"/><rect x="20.7" y="2.1" width="0.8" height="16.8" fill="#6ab8d4" opacity="0.8"/><rect x="22.1" y="1.8" width="0.8" height="17.5" fill="#6ab8d4" opacity="0.8"/><rect x="24.2" y="2.0" width="0.8" height="17.0" fill="#6ab8d4" opacity="0.8"/><rect x="26.3" y="2.2" width="0.8" height="16.5" fill="#6ab8d4" opacity="0.8"/><rect x="28.3" y="2.6" width="0.8" height="15.8" fill="#6ab8d4" opacity="0.8"/><rect x="29.2" y="2.2" width="0.8" height="16.5" fill="#6ab8d4" opacity="0.8"/><rect x="31.0" y="1.7" width="0.8" height="17.5" fill="#6ab8d4" opacity="0.8"/><rect x="32.0" y="1.9" width="0.8" height="17.3" fill="#6ab8d4" opacity="0.8"/><rect x="34.2" y="2.3" width="0.8" height="16.3" fill="#6ab8d4" opacity="0.8"/><rect x="35.5" y="2.9" width="0.8" height="15.2" fill="#6ab8d4" opacity="0.8"/><rect x="36.5" y="2.2" width="0.8" height="16.7" fill="#6ab8d4" opacity="0.8"/><rect x="37.9" y="2.3" width="0.8" height="16.3" fill="#6ab8d4" opacity="0.8"/><rect x="39.1" y="2.6" width="0.8" height="15.9" fill="#6ab8d4" opacity="0.8"/><rect x="40.4" y="2.2" width="0.8" height="16.6" fill="#6ab8d4" opacity="0.8"/><rect x="41.2" y="1.8" width="0.8" height="17.4" fill="#6ab8d4" opacity="0.8"/><rect x="42.3" y="2.0" width="0.8" height="16.9" fill="#6ab8d4" opacity="0.8"/><rect x="44.0" y="1.8" width="0.8" height="17.4" fill="#6ab8d4" opacity="0.8"/><rect x="45.5" y="2.6" width="0.8" height="15.8" fill="#6ab8d4" opacity="0.8"/><rect x="46.6" y="2.6" width="0.8" height="15.7" fill="#6ab8d4" opacity="0.8"/><rect x="47.5" y="2.3" width="0.8" height="16.4" fill="#6ab8d4" opacity="0.8"/><rect x="49.7" y="2.3" width="0.8" height="16.3" fill="#6ab8d4" opacity="0.8"/><rect x="51.6" y="1.8" width="0.8" height="17.3" fill="#6ab8d4" opacity="0.8"/><rect x="52.4" y="2.8" width="0.8" height="15.5" fill="#6ab8d4" opacity="0.8"/><rect x="54.0" y="2.0" width="0.8" height="16.9" fill="#6ab8d4" opacity="0.8"/><rect x="55.0" y="2.3" width="0.8" height="16.5" fill="#6ab8d4" opacity="0.8"/><rect x="56.4" y="2.1" width="0.8" height="16.9" fill="#6ab8d4" opacity="0.8"/><rect x="57.8" y="1.8" width="0.8" height="17.4" fill="#6ab8d4" opacity="0.8"/><rect x="59.8" y="2.9" width="0.8" height="15.3" fill="#6ab8d4" opacity="0.8"/><rect x="61.3" y="2.7" width="0.8" height="15.5" fill="#6ab8d4" opacity="0.8"/><rect x="63.5" y="2.6" width="0.8" height="15.9" fill="#6ab8d4" opacity="0.8"/><rect x="65.3" y="1.8" width="0.8" height="17.5" fill="#6ab8d4" opacity="0.8"/><rect x="66.6" y="2.6" width="0.8" height="15.7" fill="#6ab8d4" opacity="0.8"/><rect x="68.4" y="2.1" width="0.8" height="16.8" fill="#6ab8d4" opacity="0.8"/><rect x="69.8" y="1.8" width="0.8" height="17.3" fill="#6ab8d4" opacity="0.8"/><rect x="70.9" y="2.0" width="0.8" height="17.0" fill="#6ab8d4" opacity="0.8"/><rect x="72.7" y="2.0" width="0.8" height="17.0" fill="#6ab8d4" opacity="0.8"/><rect x="74.9" y="1.9" width="0.8" height="17.1" fill="#6ab8d4" opacity="0.8"/><rect x="76.8" y="2.6" width="0.8" height="15.9" fill="#6ab8d4" opacity="0.8"/><rect x="78.0" y="2.3" width="0.8" height="16.5" fill="#6ab8d4" opacity="0.8"/><rect x="79.7" y="2.0" width="0.8" height="17.1" fill="#6ab8d4" opacity="0.8"/><rect x="81.1" y="2.6" width="0.8" height="15.7" fill="#6ab8d4" opacity="0.8"/><rect x="81.9" y="1.8" width="0.8" height="17.3" fill="#6ab8d4" opacity="0.8"/><rect x="83.7" y="1.8" width="0.8" height="17.5" fill="#6ab8d4" opacity="0.8"/><rect x="85.3" y="2.0" width="0.8" height="17.1" fill="#6ab8d4" opacity="0.8"/><rect x="86.3" y="2.7" width="0.8" height="15.6" fill="#6ab8d4" opacity="0.8"/><rect x="88.3" y="2.4" width="0.8" height="16.3" fill="#6ab8d4" opacity="0.8"/><rect x="89.4" y="2.7" width="0.8" height="15.7" fill="#6ab8d4" opacity="0.8"/><rect x="90.5" y="2.9" width="0.8" height="15.2" fill="#6ab8d4" opacity="0.8"/><rect x="92.5" y="1.9" width="0.8" height="17.2" fill="#6ab8d4" opacity="0.8"/><rect x="94.2" y="2.4" width="0.8" height="16.2" fill="#6ab8d4" opacity="0.8"/><rect x="95.6" y="2.9" width="0.8" height="15.2" fill="#6ab8d4" opacity="0.8"/><rect x="97.3" y="2.0" width="0.8" height="16.9" fill="#6ab8d4" opacity="0.8"/><rect x="98.9" y="1.8" width="0.8" height="17.4" fill="#6ab8d4" opacity="0.8"/><rect x="100.7" y="2.4" width="0.8" height="16.2" fill="#6ab8d4" opacity="0.8"/><rect x="102.0" y="2.6" width="0.8" height="15.9" fill="#6ab8d4" opacity="0.8"/><rect x="102.9" y="2.1" width="0.8" height="16.7" fill="#6ab8d4" opacity="0.8"/><rect x="104.9" y="2.4" width="0.8" height="16.1" fill="#6ab8d4" opacity="0.8"/><rect x="105.8" y="2.4" width="0.8" height="16.2" fill="#6ab8d4" opacity="0.8"/><rect x="106.7" y="2.2" width="0.8" height="16.6" fill="#6ab8d4" opacity="0.8"/><rect x="108.3" y="2.9" width="0.8" height="15.1" fill="#6ab8d4" opacity="0.8"/><rect x="110.3" y="2.4" width="0.8" height="16.1" fill="#6ab8d4" opacity="0.8"/><rect x="112.4" y="1.9" width="0.8" height="17.2" fill="#6ab8d4" opacity="0.8"/><rect x="113.3" y="2.2" width="0.8" height="16.5" fill="#6ab8d4" opacity="0.8"/><rect x="114.7" y="2.0" width="0.8" height="16.9" fill="#6ab8d4" opacity="0.8"/><rect x="115.9" y="1.9" width="0.8" height="17.1" fill="#6ab8d4" opacity="0.8"/><rect x="117.6" y="2.1" width="0.8" height="16.9" fill="#6ab8d4" opacity="0.8"/><rect x="118.6" y="1.8" width="0.8" height="17.4" fill="#6ab8d4" opacity="0.8"/><rect x="119.7" y="2.2" width="0.8" height="16.5" fill="#6ab8d4" opacity="0.8"/><rect x="120.9" y="2.0" width="0.8" height="17.1" fill="#6ab8d4" opacity="0.8"/><rect x="122.5" y="2.1" width="0.8" height="16.8" fill="#6ab8d4" opacity="0.8"/><rect x="124.3" y="2.5" width="0.8" height="15.9" fill="#6ab8d4" opacity="0.8"/><rect x="126.3" y="1.7" width="0.8" height="17.6" fill="#6ab8d4" opacity="0.8"/><rect x="127.3" y="2.8" width="0.8" height="15.5" fill="#6ab8d4" opacity="0.8"/><rect x="128.5" y="1.8" width="0.8" height="17.3" fill="#6ab8d4" opacity="0.8"/><rect x="130.2" y="2.4" width="0.8" height="16.1" fill="#6ab8d4" opacity="0.8"/><rect x="131.2" y="1.7" width="0.8" height="17.6" fill="#6ab8d4" opacity="0.8"/><rect x="132.8" y="1.9" width="0.8" height="17.2" fill="#6ab8d4" opacity="0.8"/></svg>
<div class="a" style="left:917.5px;top:706px;width:519.5px;height:27px;background:#2b2e32"></div>
<span class="a sb" style="left:951px;top:714px;font-size:10.5px;color:#6fd392;line-height:12px;white-space:nowrap">Don't Hate Drums A</span>
<span class="a sb" style="left:1254px;top:714px;font-size:10.5px;color:#6fd392;line-height:12px">172</span>
<span class="a sb" style="left:1293.5px;top:714px;font-size:10.5px;color:#6fd392;line-height:12px">8 Bars</span>
<svg style="left:1418px;top:715.5px" width="10" height="9" viewBox="0 0 10 9"><path d="M5 8.2 L1.3 4.6 C-0.1 3 0.7 0.6 2.7 0.6 C3.8 0.6 4.5 1.2 5 2 C5.5 1.2 6.2 0.6 7.3 0.6 C9.3 0.6 10.1 3 8.7 4.6 Z" fill="none" stroke="#6fd392" stroke-width="1.1"/></svg>
<svg style="left:1109.5px;top:710px" width="134" height="21" viewBox="0 0 134 21"><path d="M0.5 7.2 L1.0 7.3 L1.5 7.2 L2.0 6.5 L2.5 6.8 L3.0 7.8 L3.5 7.2 L4.0 6.0 L4.5 6.2 L5.0 7.5 L5.5 6.3 L6.0 6.9 L6.5 7.5 L7.0 7.5 L7.5 6.0 L8.0 5.8 L8.5 5.7 L9.0 7.5 L9.5 5.8 L10.0 7.8 L10.5 6.7 L11.0 5.9 L11.5 6.3 L12.0 6.1 L12.5 6.0 L13.0 7.1 L13.5 7.0 L13.9 7.5 L14.4 6.0 L14.9 6.7 L15.4 6.2 L15.9 7.4 L16.4 7.0 L16.9 7.8 L17.4 6.0 L17.9 7.3 L18.4 7.6 L18.9 5.8 L19.4 7.2 L19.9 7.0 L20.4 5.9 L20.9 6.6 L21.4 5.8 L21.9 6.7 L22.4 6.2 L22.9 6.9 L23.4 6.7 L23.9 6.7 L24.4 6.8 L24.9 6.2 L25.4 7.1 L25.9 5.6 L26.4 6.3 L26.9 5.9 L27.4 7.5 L27.9 5.6 L28.4 7.4 L28.9 6.3 L29.4 5.9 L29.9 6.7 L30.4 5.5 L30.9 5.9 L31.4 6.7 L31.9 6.6 L32.4 6.7 L32.9 6.1 L33.4 6.3 L33.9 6.0 L34.4 7.5 L34.9 7.0 L35.4 5.9 L35.9 6.0 L36.4 6.6 L36.9 6.1 L37.4 6.9 L37.9 7.0 L38.4 5.8 L38.9 7.7 L39.4 7.3 L39.9 5.9 L40.4 6.2 L40.8 7.4 L41.3 5.4 L41.8 5.7 L42.3 6.1 L42.8 5.8 L43.3 7.2 L43.8 6.0 L44.3 5.5 L44.8 7.1 L45.3 7.4 L45.8 6.5 L46.3 7.1 L46.8 7.5 L47.3 6.6 L47.8 5.8 L48.3 6.1 L48.8 7.7 L49.3 6.2 L49.8 5.8 L50.3 5.6 L50.8 7.7 L51.3 7.4 L51.8 7.6 L52.3 6.2 L52.8 7.0 L53.3 7.2 L53.8 5.7 L54.3 7.6 L54.8 6.5 L55.3 5.7 L55.8 7.5 L56.3 7.3 L56.8 7.0 L57.3 6.5 L57.8 5.6 L58.3 6.0 L58.8 7.0 L59.3 7.1 L59.8 6.4 L60.3 5.6 L60.8 7.1 L61.3 5.6 L61.8 7.5 L62.3 6.5 L62.8 6.7 L63.3 5.9 L63.8 5.5 L64.3 6.3 L64.8 7.0 L65.3 6.0 L65.8 7.8 L66.3 7.2 L66.8 7.4 L67.2 6.3 L67.7 7.2 L68.2 6.3 L68.7 7.6 L69.2 6.3 L69.7 7.8 L70.2 6.1 L70.7 5.8 L71.2 5.7 L71.7 7.8 L72.2 6.2 L72.7 6.2 L73.2 6.0 L73.7 5.6 L74.2 6.1 L74.7 6.1 L75.2 7.7 L75.7 7.5 L76.2 5.5 L76.7 7.1 L77.2 7.8 L77.7 6.2 L78.2 6.7 L78.7 5.6 L79.2 5.6 L79.7 5.5 L80.2 6.6 L80.7 6.6 L81.2 6.3 L81.7 7.4 L82.2 7.7 L82.7 6.4 L83.2 6.1 L83.7 5.5 L84.2 5.8 L84.7 7.1 L85.2 7.1 L85.7 5.6 L86.2 6.4 L86.7 7.1 L87.2 7.5 L87.7 7.1 L88.2 7.2 L88.7 7.0 L89.2 7.1 L89.7 6.1 L90.2 6.5 L90.7 5.9 L91.2 6.4 L91.7 6.4 L92.2 6.8 L92.7 7.3 L93.2 7.8 L93.6 6.1 L94.1 6.8 L94.6 6.7 L95.1 6.2 L95.6 6.3 L96.1 7.0 L96.6 7.5 L97.1 7.3 L97.6 6.8 L98.1 7.5 L98.6 7.3 L99.1 7.7 L99.6 7.5 L100.1 6.8 L100.6 6.8 L101.1 6.4 L101.6 6.3 L102.1 7.3 L102.6 7.5 L103.1 5.5 L103.6 7.1 L104.1 7.6 L104.6 6.6 L105.1 7.0 L105.6 6.1 L106.1 6.1 L106.6 5.9 L107.1 7.7 L107.6 7.1 L108.1 6.0 L108.6 7.4 L109.1 7.3 L109.6 6.2 L110.1 5.6 L110.6 6.4 L111.1 7.8 L111.6 6.5 L112.1 6.7 L112.6 7.4 L113.1 6.8 L113.6 6.5 L114.1 5.8 L114.6 5.6 L115.1 6.8 L115.6 5.8 L116.1 7.3 L116.6 6.3 L117.1 6.2 L117.6 7.5 L118.1 7.8 L118.6 6.8 L119.1 7.8 L119.6 7.5 L120.1 7.0 L120.5 6.6 L121.0 6.3 L121.5 5.6 L122.0 7.1 L122.5 5.7 L123.0 5.6 L123.5 6.1 L124.0 6.4 L124.5 6.2 L125.0 7.3 L125.5 5.9 L126.0 6.4 L126.5 7.5 L127.0 6.4 L127.5 7.7 L128.0 7.6 L128.5 6.3 L129.0 7.3 L129.5 5.5 L130.0 7.6 L130.5 6.2 L131.0 6.2 L131.5 7.5 L132.0 5.8 L132.5 5.4 L133.0 5.7 L133.5 5.6 L133.5 15.4 L133.0 15.3 L132.5 15.6 L132.0 15.2 L131.5 13.5 L131.0 14.8 L130.5 14.8 L130.0 13.4 L129.5 15.5 L129.0 13.7 L128.5 14.7 L128.0 13.4 L127.5 13.3 L127.0 14.6 L126.5 13.5 L126.0 14.6 L125.5 15.1 L125.0 13.7 L124.5 14.8 L124.0 14.6 L123.5 14.9 L123.0 15.4 L122.5 15.3 L122.0 13.9 L121.5 15.4 L121.0 14.7 L120.5 14.4 L120.1 14.0 L119.6 13.5 L119.1 13.2 L118.6 14.2 L118.1 13.2 L117.6 13.5 L117.1 14.8 L116.6 14.7 L116.1 13.7 L115.6 15.2 L115.1 14.2 L114.6 15.4 L114.1 15.2 L113.6 14.5 L113.1 14.2 L112.6 13.6 L112.1 14.3 L111.6 14.5 L111.1 13.2 L110.6 14.6 L110.1 15.4 L109.6 14.8 L109.1 13.7 L108.6 13.6 L108.1 15.0 L107.6 13.9 L107.1 13.3 L106.6 15.1 L106.1 14.9 L105.6 14.9 L105.1 14.0 L104.6 14.4 L104.1 13.4 L103.6 13.9 L103.1 15.5 L102.6 13.5 L102.1 13.7 L101.6 14.7 L101.1 14.6 L100.6 14.2 L100.1 14.2 L99.6 13.5 L99.1 13.3 L98.6 13.7 L98.1 13.5 L97.6 14.2 L97.1 13.7 L96.6 13.5 L96.1 14.0 L95.6 14.7 L95.1 14.8 L94.6 14.3 L94.1 14.2 L93.6 14.9 L93.2 13.2 L92.7 13.7 L92.2 14.2 L91.7 14.6 L91.2 14.6 L90.7 15.1 L90.2 14.5 L89.7 14.9 L89.2 13.9 L88.7 14.0 L88.2 13.8 L87.7 13.9 L87.2 13.5 L86.7 13.9 L86.2 14.6 L85.7 15.4 L85.2 13.9 L84.7 13.9 L84.2 15.2 L83.7 15.5 L83.2 14.9 L82.7 14.6 L82.2 13.3 L81.7 13.6 L81.2 14.7 L80.7 14.4 L80.2 14.4 L79.7 15.5 L79.2 15.4 L78.7 15.4 L78.2 14.3 L77.7 14.8 L77.2 13.2 L76.7 13.9 L76.2 15.5 L75.7 13.5 L75.2 13.3 L74.7 14.9 L74.2 14.9 L73.7 15.4 L73.2 15.0 L72.7 14.8 L72.2 14.8 L71.7 13.2 L71.2 15.3 L70.7 15.2 L70.2 14.9 L69.7 13.2 L69.2 14.7 L68.7 13.4 L68.2 14.7 L67.7 13.8 L67.2 14.7 L66.8 13.6 L66.3 13.8 L65.8 13.2 L65.3 15.0 L64.8 14.0 L64.3 14.7 L63.8 15.5 L63.3 15.1 L62.8 14.3 L62.3 14.5 L61.8 13.5 L61.3 15.4 L60.8 13.9 L60.3 15.4 L59.8 14.6 L59.3 13.9 L58.8 14.0 L58.3 15.0 L57.8 15.4 L57.3 14.5 L56.8 14.0 L56.3 13.7 L55.8 13.5 L55.3 15.3 L54.8 14.5 L54.3 13.4 L53.8 15.3 L53.3 13.8 L52.8 14.0 L52.3 14.8 L51.8 13.4 L51.3 13.6 L50.8 13.3 L50.3 15.4 L49.8 15.2 L49.3 14.8 L48.8 13.3 L48.3 14.9 L47.8 15.2 L47.3 14.4 L46.8 13.5 L46.3 13.9 L45.8 14.5 L45.3 13.6 L44.8 13.9 L44.3 15.5 L43.8 15.0 L43.3 13.8 L42.8 15.2 L42.3 14.9 L41.8 15.3 L41.3 15.6 L40.8 13.6 L40.4 14.8 L39.9 15.1 L39.4 13.7 L38.9 13.3 L38.4 15.2 L37.9 14.0 L37.4 14.1 L36.9 14.9 L36.4 14.4 L35.9 15.0 L35.4 15.1 L34.9 14.0 L34.4 13.5 L33.9 15.0 L33.4 14.7 L32.9 14.9 L32.4 14.3 L31.9 14.4 L31.4 14.3 L30.9 15.1 L30.4 15.5 L29.9 14.3 L29.4 15.1 L28.9 14.7 L28.4 13.6 L27.9 15.4 L27.4 13.5 L26.9 15.1 L26.4 14.7 L25.9 15.4 L25.4 13.9 L24.9 14.8 L24.4 14.2 L23.9 14.3 L23.4 14.3 L22.9 14.1 L22.4 14.8 L21.9 14.3 L21.4 15.2 L20.9 14.4 L20.4 15.1 L19.9 14.0 L19.4 13.8 L18.9 15.2 L18.4 13.4 L17.9 13.7 L17.4 15.0 L16.9 13.2 L16.4 14.0 L15.9 13.6 L15.4 14.8 L14.9 14.3 L14.4 15.0 L13.9 13.5 L13.5 14.0 L13.0 13.9 L12.5 15.0 L12.0 14.9 L11.5 14.7 L11.0 15.1 L10.5 14.3 L10.0 13.2 L9.5 15.2 L9.0 13.5 L8.5 15.3 L8.0 15.2 L7.5 15.0 L7.0 13.5 L6.5 13.5 L6.0 14.1 L5.5 14.7 L5.0 13.5 L4.5 14.8 L4.0 15.0 L3.5 13.8 L3.0 13.2 L2.5 14.2 L2.0 14.5 L1.5 13.8 L1.0 13.7 L0.5 13.8 Z" fill="#5fd08a"/><rect x="0.8" y="0.7" width="1.0" height="19.6" fill="#5fd08a" opacity="0.81"/><rect x="3.5" y="2.3" width="1.5" height="16.4" fill="#5fd08a" opacity="0.96"/><rect x="7.5" y="1.4" width="2.2" height="18.2" fill="#5fd08a" opacity="0.75"/><rect x="10.4" y="0.4" width="2.2" height="20.2" fill="#5fd08a" opacity="0.73"/><rect x="15.0" y="0.5" width="1.5" height="20.0" fill="#5fd08a" opacity="0.85"/><rect x="19.9" y="2.3" width="3.0" height="16.4" fill="#5fd08a" opacity="0.69"/><rect x="22.7" y="1.5" width="1.0" height="18.0" fill="#5fd08a" opacity="0.79"/><rect x="25.6" y="2.6" width="1.2" height="15.8" fill="#5fd08a" opacity="0.97"/><rect x="29.0" y="1.0" width="2.2" height="18.9" fill="#5fd08a" opacity="0.96"/><rect x="31.9" y="1.3" width="3.0" height="18.5" fill="#5fd08a" opacity="0.85"/><rect x="35.1" y="1.9" width="1.2" height="17.3" fill="#5fd08a" opacity="0.88"/><rect x="40.2" y="0.2" width="2.2" height="20.6" fill="#5fd08a" opacity="0.79"/><rect x="43.6" y="0.0" width="1.5" height="20.9" fill="#5fd08a" opacity="0.99"/><rect x="48.0" y="0.1" width="1.2" height="20.9" fill="#5fd08a" opacity="0.84"/><rect x="52.9" y="1.1" width="1.5" height="18.7" fill="#5fd08a" opacity="0.96"/><rect x="55.5" y="1.1" width="1.2" height="18.8" fill="#5fd08a" opacity="0.94"/><rect x="60.1" y="2.6" width="1.0" height="15.8" fill="#5fd08a" opacity="0.70"/><rect x="64.9" y="0.1" width="1.5" height="20.9" fill="#5fd08a" opacity="0.73"/><rect x="67.6" y="1.1" width="2.2" height="18.9" fill="#5fd08a" opacity="0.78"/><rect x="71.6" y="1.0" width="1.0" height="19.0" fill="#5fd08a" opacity="0.76"/><rect x="76.0" y="0.5" width="3.0" height="20.0" fill="#5fd08a" opacity="0.66"/><rect x="79.7" y="1.0" width="1.0" height="19.0" fill="#5fd08a" opacity="0.92"/><rect x="84.6" y="2.5" width="1.5" height="16.0" fill="#5fd08a" opacity="0.84"/><rect x="88.3" y="2.3" width="3.0" height="16.4" fill="#5fd08a" opacity="0.76"/><rect x="93.8" y="0.9" width="3.0" height="19.2" fill="#5fd08a" opacity="0.75"/><rect x="98.1" y="1.9" width="3.0" height="17.2" fill="#5fd08a" opacity="0.90"/><rect x="102.2" y="1.8" width="1.2" height="17.4" fill="#5fd08a" opacity="0.88"/><rect x="106.3" y="1.7" width="2.2" height="17.5" fill="#5fd08a" opacity="0.87"/><rect x="110.9" y="2.1" width="1.5" height="16.7" fill="#5fd08a" opacity="0.89"/><rect x="116.3" y="1.1" width="1.2" height="18.9" fill="#5fd08a" opacity="0.94"/><rect x="120.7" y="1.0" width="3.0" height="19.0" fill="#5fd08a" opacity="0.94"/><rect x="125.4" y="1.1" width="1.5" height="18.7" fill="#5fd08a" opacity="0.76"/><rect x="130.2" y="0.6" width="1.5" height="19.7" fill="#5fd08a" opacity="0.78"/><rect x="132.8" y="2.3" width="0.7" height="16.4" fill="#5fd08a" opacity="0.69"/></svg>
<div class="a" style="left:917.5px;top:734px;width:519.5px;height:27px;background:#2b2e32"></div>
<span class="a sb" style="left:951px;top:742px;font-size:10.5px;color:#6fd392;line-height:12px;white-space:nowrap">Don't Hate Drums B</span>
<span class="a sb" style="left:1254px;top:742px;font-size:10.5px;color:#6fd392;line-height:12px">172</span>
<span class="a sb" style="left:1293.5px;top:742px;font-size:10.5px;color:#6fd392;line-height:12px">8 Bars</span>
<svg style="left:1418px;top:743.5px" width="10" height="9" viewBox="0 0 10 9"><path d="M5 8.2 L1.3 4.6 C-0.1 3 0.7 0.6 2.7 0.6 C3.8 0.6 4.5 1.2 5 2 C5.5 1.2 6.2 0.6 7.3 0.6 C9.3 0.6 10.1 3 8.7 4.6 Z" fill="none" stroke="#6fd392" stroke-width="1.1"/></svg>
<svg style="left:1109.5px;top:738px" width="134" height="21" viewBox="0 0 134 21"><path d="M0.5 5.1 L1.0 5.8 L1.5 4.2 L2.0 5.6 L2.5 5.0 L3.0 3.9 L3.5 6.4 L4.0 5.8 L4.5 3.4 L5.0 4.8 L5.5 5.0 L6.0 4.9 L6.5 6.4 L7.0 3.9 L7.5 5.8 L8.0 3.8 L8.5 5.2 L9.0 5.9 L9.5 3.8 L10.0 5.9 L10.5 4.5 L11.0 4.2 L11.5 5.2 L12.0 4.2 L12.5 3.7 L13.0 5.0 L13.5 3.6 L13.9 6.4 L14.4 5.6 L14.9 5.4 L15.4 4.3 L15.9 5.3 L16.4 3.3 L16.9 3.5 L17.4 6.4 L17.9 4.2 L18.4 6.2 L18.9 4.3 L19.4 4.3 L19.9 6.5 L20.4 6.0 L20.9 3.7 L21.4 4.9 L21.9 3.8 L22.4 4.7 L22.9 3.8 L23.4 5.7 L23.9 4.9 L24.4 5.1 L24.9 6.7 L25.4 3.7 L25.9 6.4 L26.4 3.5 L26.9 4.2 L27.4 3.4 L27.9 5.6 L28.4 5.2 L28.9 4.0 L29.4 4.6 L29.9 5.8 L30.4 5.5 L30.9 5.6 L31.4 3.5 L31.9 3.4 L32.4 3.5 L32.9 4.5 L33.4 3.7 L33.9 4.8 L34.4 5.3 L34.9 4.5 L35.4 3.7 L35.9 4.8 L36.4 5.4 L36.9 6.0 L37.4 4.6 L37.9 3.5 L38.4 5.6 L38.9 3.9 L39.4 4.0 L39.9 5.7 L40.4 6.2 L40.8 3.4 L41.3 4.4 L41.8 4.7 L42.3 5.7 L42.8 4.9 L43.3 3.3 L43.8 4.3 L44.3 4.9 L44.8 5.4 L45.3 5.2 L45.8 5.1 L46.3 4.4 L46.8 4.9 L47.3 4.2 L47.8 5.8 L48.3 4.3 L48.8 5.0 L49.3 6.6 L49.8 6.0 L50.3 6.3 L50.8 4.3 L51.3 6.1 L51.8 5.5 L52.3 3.5 L52.8 5.8 L53.3 3.3 L53.8 5.3 L54.3 5.0 L54.8 4.9 L55.3 3.5 L55.8 5.0 L56.3 3.7 L56.8 4.8 L57.3 6.4 L57.8 3.5 L58.3 4.6 L58.8 3.9 L59.3 6.3 L59.8 6.4 L60.3 5.7 L60.8 6.7 L61.3 3.9 L61.8 4.1 L62.3 6.1 L62.8 5.4 L63.3 3.8 L63.8 4.8 L64.3 4.2 L64.8 3.9 L65.3 5.7 L65.8 4.6 L66.3 4.7 L66.8 4.9 L67.2 4.4 L67.7 4.0 L68.2 6.6 L68.7 5.4 L69.2 6.7 L69.7 4.7 L70.2 5.1 L70.7 6.2 L71.2 4.2 L71.7 4.1 L72.2 4.6 L72.7 4.3 L73.2 6.5 L73.7 4.8 L74.2 6.0 L74.7 3.6 L75.2 5.4 L75.7 6.7 L76.2 6.0 L76.7 4.9 L77.2 6.4 L77.7 6.1 L78.2 5.4 L78.7 3.9 L79.2 5.9 L79.7 6.0 L80.2 6.5 L80.7 4.9 L81.2 5.0 L81.7 6.3 L82.2 3.9 L82.7 5.5 L83.2 4.3 L83.7 3.4 L84.2 5.7 L84.7 5.0 L85.2 3.4 L85.7 4.2 L86.2 3.8 L86.7 5.9 L87.2 5.8 L87.7 3.4 L88.2 3.5 L88.7 6.1 L89.2 5.2 L89.7 4.0 L90.2 5.2 L90.7 5.3 L91.2 4.6 L91.7 5.2 L92.2 5.0 L92.7 6.5 L93.2 6.5 L93.6 6.3 L94.1 4.4 L94.6 5.0 L95.1 4.0 L95.6 3.6 L96.1 3.8 L96.6 5.1 L97.1 4.5 L97.6 5.3 L98.1 3.5 L98.6 6.4 L99.1 5.8 L99.6 4.8 L100.1 5.3 L100.6 5.4 L101.1 4.8 L101.6 6.2 L102.1 5.3 L102.6 4.5 L103.1 5.0 L103.6 4.6 L104.1 5.4 L104.6 4.0 L105.1 3.7 L105.6 4.0 L106.1 3.7 L106.6 6.0 L107.1 4.6 L107.6 4.3 L108.1 4.9 L108.6 5.1 L109.1 6.0 L109.6 4.0 L110.1 6.6 L110.6 6.4 L111.1 4.4 L111.6 4.1 L112.1 5.7 L112.6 5.5 L113.1 4.4 L113.6 5.7 L114.1 5.6 L114.6 3.5 L115.1 3.8 L115.6 4.5 L116.1 5.0 L116.6 3.7 L117.1 4.4 L117.6 3.5 L118.1 5.6 L118.6 6.4 L119.1 4.1 L119.6 4.8 L120.1 6.5 L120.5 5.9 L121.0 6.7 L121.5 3.4 L122.0 6.5 L122.5 4.1 L123.0 3.9 L123.5 4.8 L124.0 6.7 L124.5 3.9 L125.0 5.5 L125.5 4.2 L126.0 4.2 L126.5 3.5 L127.0 5.9 L127.5 5.2 L128.0 3.5 L128.5 5.9 L129.0 6.6 L129.5 3.9 L130.0 4.3 L130.5 3.4 L131.0 6.4 L131.5 6.2 L132.0 4.3 L132.5 5.8 L133.0 3.3 L133.5 5.1 L133.5 15.9 L133.0 17.7 L132.5 15.2 L132.0 16.7 L131.5 14.8 L131.0 14.6 L130.5 17.6 L130.0 16.7 L129.5 17.1 L129.0 14.4 L128.5 15.1 L128.0 17.5 L127.5 15.8 L127.0 15.1 L126.5 17.5 L126.0 16.8 L125.5 16.8 L125.0 15.5 L124.5 17.1 L124.0 14.3 L123.5 16.2 L123.0 17.1 L122.5 16.9 L122.0 14.5 L121.5 17.6 L121.0 14.3 L120.5 15.1 L120.1 14.5 L119.6 16.2 L119.1 16.9 L118.6 14.6 L118.1 15.4 L117.6 17.5 L117.1 16.6 L116.6 17.3 L116.1 16.0 L115.6 16.5 L115.1 17.2 L114.6 17.5 L114.1 15.4 L113.6 15.3 L113.1 16.6 L112.6 15.5 L112.1 15.3 L111.6 16.9 L111.1 16.6 L110.6 14.6 L110.1 14.4 L109.6 17.0 L109.1 15.0 L108.6 15.9 L108.1 16.1 L107.6 16.7 L107.1 16.4 L106.6 15.0 L106.1 17.3 L105.6 17.0 L105.1 17.3 L104.6 17.0 L104.1 15.6 L103.6 16.4 L103.1 16.0 L102.6 16.5 L102.1 15.7 L101.6 14.8 L101.1 16.2 L100.6 15.6 L100.1 15.7 L99.6 16.2 L99.1 15.2 L98.6 14.6 L98.1 17.5 L97.6 15.7 L97.1 16.5 L96.6 15.9 L96.1 17.2 L95.6 17.4 L95.1 17.0 L94.6 16.0 L94.1 16.6 L93.6 14.7 L93.2 14.5 L92.7 14.5 L92.2 16.0 L91.7 15.8 L91.2 16.4 L90.7 15.7 L90.2 15.8 L89.7 17.0 L89.2 15.8 L88.7 14.9 L88.2 17.5 L87.7 17.6 L87.2 15.2 L86.7 15.1 L86.2 17.2 L85.7 16.8 L85.2 17.6 L84.7 16.0 L84.2 15.3 L83.7 17.6 L83.2 16.7 L82.7 15.5 L82.2 17.1 L81.7 14.7 L81.2 16.0 L80.7 16.1 L80.2 14.5 L79.7 15.0 L79.2 15.1 L78.7 17.1 L78.2 15.6 L77.7 14.9 L77.2 14.6 L76.7 16.1 L76.2 15.0 L75.7 14.3 L75.2 15.6 L74.7 17.4 L74.2 15.0 L73.7 16.2 L73.2 14.5 L72.7 16.7 L72.2 16.4 L71.7 16.9 L71.2 16.8 L70.7 14.8 L70.2 15.9 L69.7 16.3 L69.2 14.3 L68.7 15.6 L68.2 14.4 L67.7 17.0 L67.2 16.6 L66.8 16.1 L66.3 16.3 L65.8 16.4 L65.3 15.3 L64.8 17.1 L64.3 16.8 L63.8 16.2 L63.3 17.2 L62.8 15.6 L62.3 14.9 L61.8 16.9 L61.3 17.1 L60.8 14.3 L60.3 15.3 L59.8 14.6 L59.3 14.7 L58.8 17.1 L58.3 16.4 L57.8 17.5 L57.3 14.6 L56.8 16.2 L56.3 17.3 L55.8 16.0 L55.3 17.5 L54.8 16.1 L54.3 16.0 L53.8 15.7 L53.3 17.7 L52.8 15.2 L52.3 17.5 L51.8 15.5 L51.3 14.9 L50.8 16.7 L50.3 14.7 L49.8 15.0 L49.3 14.4 L48.8 16.0 L48.3 16.7 L47.8 15.2 L47.3 16.8 L46.8 16.1 L46.3 16.6 L45.8 15.9 L45.3 15.8 L44.8 15.6 L44.3 16.1 L43.8 16.7 L43.3 17.7 L42.8 16.1 L42.3 15.3 L41.8 16.3 L41.3 16.6 L40.8 17.6 L40.4 14.8 L39.9 15.3 L39.4 17.0 L38.9 17.1 L38.4 15.4 L37.9 17.5 L37.4 16.4 L36.9 15.0 L36.4 15.6 L35.9 16.2 L35.4 17.3 L34.9 16.5 L34.4 15.7 L33.9 16.2 L33.4 17.3 L32.9 16.5 L32.4 17.5 L31.9 17.6 L31.4 17.5 L30.9 15.4 L30.4 15.5 L29.9 15.2 L29.4 16.4 L28.9 17.0 L28.4 15.8 L27.9 15.4 L27.4 17.6 L26.9 16.8 L26.4 17.5 L25.9 14.6 L25.4 17.3 L24.9 14.3 L24.4 15.9 L23.9 16.1 L23.4 15.3 L22.9 17.2 L22.4 16.3 L21.9 17.2 L21.4 16.1 L20.9 17.3 L20.4 15.0 L19.9 14.5 L19.4 16.7 L18.9 16.7 L18.4 14.8 L17.9 16.8 L17.4 14.6 L16.9 17.5 L16.4 17.7 L15.9 15.7 L15.4 16.7 L14.9 15.6 L14.4 15.4 L13.9 14.6 L13.5 17.4 L13.0 16.0 L12.5 17.3 L12.0 16.8 L11.5 15.8 L11.0 16.8 L10.5 16.5 L10.0 15.1 L9.5 17.2 L9.0 15.1 L8.5 15.8 L8.0 17.2 L7.5 15.2 L7.0 17.1 L6.5 14.6 L6.0 16.1 L5.5 16.0 L5.0 16.2 L4.5 17.6 L4.0 15.2 L3.5 14.6 L3.0 17.1 L2.5 16.0 L2.0 15.4 L1.5 16.8 L1.0 15.2 L0.5 15.9 Z" fill="#5fd08a"/><rect x="0.8" y="2.2" width="1.0" height="16.5" fill="#5fd08a" opacity="0.77"/><rect x="5.3" y="1.0" width="1.5" height="19.0" fill="#5fd08a" opacity="0.70"/><rect x="10.7" y="2.4" width="1.2" height="16.2" fill="#5fd08a" opacity="0.72"/><rect x="13.2" y="0.2" width="1.0" height="20.7" fill="#5fd08a" opacity="0.80"/><rect x="16.2" y="0.9" width="1.5" height="19.2" fill="#5fd08a" opacity="0.92"/><rect x="19.3" y="1.9" width="1.5" height="17.2" fill="#5fd08a" opacity="0.68"/><rect x="23.1" y="2.5" width="1.2" height="16.1" fill="#5fd08a" opacity="0.66"/><rect x="26.4" y="2.6" width="1.5" height="15.9" fill="#5fd08a" opacity="0.94"/><rect x="31.6" y="1.7" width="3.0" height="17.6" fill="#5fd08a" opacity="0.79"/><rect x="36.7" y="0.5" width="1.2" height="19.9" fill="#5fd08a" opacity="0.78"/><rect x="39.8" y="0.5" width="1.0" height="20.0" fill="#5fd08a" opacity="0.94"/><rect x="43.1" y="0.6" width="1.5" height="19.8" fill="#5fd08a" opacity="0.75"/><rect x="46.1" y="2.0" width="1.0" height="16.9" fill="#5fd08a" opacity="0.80"/><rect x="50.5" y="0.7" width="1.0" height="19.5" fill="#5fd08a" opacity="0.98"/><rect x="53.2" y="0.6" width="3.0" height="19.8" fill="#5fd08a" opacity="0.87"/><rect x="56.4" y="0.9" width="2.2" height="19.2" fill="#5fd08a" opacity="0.85"/><rect x="60.3" y="1.3" width="1.5" height="18.4" fill="#5fd08a" opacity="0.67"/><rect x="64.3" y="1.8" width="1.2" height="17.4" fill="#5fd08a" opacity="0.86"/><rect x="69.5" y="2.0" width="3.0" height="16.9" fill="#5fd08a" opacity="0.70"/><rect x="72.0" y="1.0" width="3.0" height="19.0" fill="#5fd08a" opacity="0.99"/><rect x="74.6" y="2.1" width="1.0" height="16.8" fill="#5fd08a" opacity="0.72"/><rect x="78.7" y="1.0" width="1.2" height="18.9" fill="#5fd08a" opacity="0.84"/><rect x="82.0" y="1.1" width="2.2" height="18.9" fill="#5fd08a" opacity="0.77"/><rect x="85.9" y="0.4" width="3.0" height="20.3" fill="#5fd08a" opacity="0.87"/><rect x="88.6" y="1.3" width="1.0" height="18.4" fill="#5fd08a" opacity="0.76"/><rect x="91.5" y="1.1" width="1.0" height="18.8" fill="#5fd08a" opacity="0.71"/><rect x="94.7" y="1.5" width="1.2" height="18.1" fill="#5fd08a" opacity="0.87"/><rect x="100.1" y="2.5" width="1.5" height="15.9" fill="#5fd08a" opacity="0.86"/><rect x="105.3" y="0.6" width="1.2" height="19.7" fill="#5fd08a" opacity="0.74"/><rect x="110.2" y="1.6" width="1.5" height="17.8" fill="#5fd08a" opacity="0.77"/><rect x="114.8" y="2.3" width="1.5" height="16.3" fill="#5fd08a" opacity="0.67"/><rect x="118.6" y="0.1" width="3.0" height="20.9" fill="#5fd08a" opacity="0.87"/><rect x="122.5" y="1.0" width="2.2" height="19.0" fill="#5fd08a" opacity="0.86"/><rect x="125.6" y="1.2" width="3.0" height="18.7" fill="#5fd08a" opacity="0.87"/><rect x="130.6" y="1.2" width="1.5" height="18.6" fill="#5fd08a" opacity="0.92"/></svg>
<div class="a" style="left:917.5px;top:762px;width:519.5px;height:27px;background:#2b2e32"></div>
<span class="a sb" style="left:951px;top:770px;font-size:10.5px;color:#6fd392;line-height:12px;white-space:nowrap">Don't Hate Drums C</span>
<span class="a sb" style="left:1254px;top:770px;font-size:10.5px;color:#6fd392;line-height:12px">172</span>
<span class="a sb" style="left:1293.5px;top:770px;font-size:10.5px;color:#6fd392;line-height:12px">8 Bars</span>
<svg style="left:1418px;top:771.5px" width="10" height="9" viewBox="0 0 10 9"><path d="M5 8.2 L1.3 4.6 C-0.1 3 0.7 0.6 2.7 0.6 C3.8 0.6 4.5 1.2 5 2 C5.5 1.2 6.2 0.6 7.3 0.6 C9.3 0.6 10.1 3 8.7 4.6 Z" fill="none" stroke="#6fd392" stroke-width="1.1"/></svg>
<svg style="left:1109.5px;top:766px" width="134" height="21" viewBox="0 0 134 21"><path d="M0.5 6.7 L1.0 7.2 L1.5 7.1 L2.0 7.4 L2.5 7.7 L3.0 7.8 L3.5 6.7 L4.0 8.3 L4.5 8.5 L5.0 6.8 L5.5 8.4 L6.0 8.0 L6.5 7.5 L7.0 8.1 L7.5 7.6 L8.0 7.5 L8.5 6.7 L9.0 8.3 L9.5 8.1 L10.0 6.9 L10.5 7.9 L11.0 7.5 L11.5 8.2 L12.0 8.4 L12.5 6.8 L13.0 8.4 L13.5 7.8 L13.9 8.1 L14.4 8.0 L14.9 8.4 L15.4 7.2 L15.9 8.1 L16.4 6.7 L16.9 7.1 L17.4 7.0 L17.9 7.6 L18.4 8.3 L18.9 7.8 L19.4 6.8 L19.9 8.3 L20.4 7.9 L20.9 7.4 L21.4 6.9 L21.9 7.4 L22.4 7.1 L22.9 7.3 L23.4 7.2 L23.9 8.1 L24.4 7.4 L24.9 7.1 L25.4 8.3 L25.9 7.4 L26.4 7.9 L26.9 8.2 L27.4 7.4 L27.9 7.3 L28.4 7.5 L28.9 7.2 L29.4 7.0 L29.9 8.0 L30.4 8.0 L30.9 8.4 L31.4 7.5 L31.9 7.4 L32.4 6.9 L32.9 7.8 L33.4 7.3 L33.9 7.9 L34.4 7.7 L34.9 7.0 L35.4 7.1 L35.9 7.8 L36.4 6.8 L36.9 7.1 L37.4 7.4 L37.9 8.4 L38.4 7.3 L38.9 6.8 L39.4 7.7 L39.9 6.9 L40.4 7.9 L40.8 7.3 L41.3 8.2 L41.8 7.3 L42.3 8.5 L42.8 8.2 L43.3 6.9 L43.8 8.2 L44.3 7.0 L44.8 7.4 L45.3 7.6 L45.8 7.5 L46.3 8.3 L46.8 7.7 L47.3 6.8 L47.8 8.3 L48.3 8.2 L48.8 7.4 L49.3 7.8 L49.8 7.1 L50.3 6.9 L50.8 8.3 L51.3 6.7 L51.8 8.1 L52.3 7.6 L52.8 7.5 L53.3 8.2 L53.8 7.7 L54.3 7.4 L54.8 7.3 L55.3 8.1 L55.8 7.7 L56.3 8.2 L56.8 7.9 L57.3 6.8 L57.8 7.2 L58.3 8.2 L58.8 7.9 L59.3 7.8 L59.8 7.8 L60.3 6.7 L60.8 8.0 L61.3 8.2 L61.8 7.6 L62.3 7.8 L62.8 7.0 L63.3 6.9 L63.8 7.7 L64.3 6.7 L64.8 8.4 L65.3 7.4 L65.8 6.9 L66.3 7.3 L66.8 7.4 L67.2 7.8 L67.7 6.8 L68.2 7.3 L68.7 8.0 L69.2 8.4 L69.7 7.8 L70.2 7.2 L70.7 8.4 L71.2 7.2 L71.7 7.9 L72.2 6.9 L72.7 7.6 L73.2 7.0 L73.7 6.8 L74.2 8.1 L74.7 8.1 L75.2 8.1 L75.7 7.0 L76.2 6.8 L76.7 7.9 L77.2 7.4 L77.7 6.9 L78.2 7.4 L78.7 7.6 L79.2 7.9 L79.7 8.4 L80.2 8.1 L80.7 7.3 L81.2 7.7 L81.7 8.4 L82.2 7.2 L82.7 7.9 L83.2 8.4 L83.7 6.7 L84.2 7.3 L84.7 7.3 L85.2 7.5 L85.7 8.0 L86.2 7.2 L86.7 7.3 L87.2 7.7 L87.7 7.5 L88.2 6.9 L88.7 7.3 L89.2 8.2 L89.7 7.2 L90.2 7.3 L90.7 7.0 L91.2 7.1 L91.7 6.9 L92.2 7.3 L92.7 8.3 L93.2 8.3 L93.6 7.8 L94.1 7.8 L94.6 7.5 L95.1 7.3 L95.6 7.0 L96.1 7.0 L96.6 6.8 L97.1 6.9 L97.6 8.2 L98.1 7.1 L98.6 7.0 L99.1 8.4 L99.6 7.7 L100.1 7.2 L100.6 7.6 L101.1 7.4 L101.6 8.3 L102.1 8.0 L102.6 7.3 L103.1 7.9 L103.6 7.4 L104.1 7.2 L104.6 7.1 L105.1 6.6 L105.6 6.8 L106.1 6.7 L106.6 8.4 L107.1 8.1 L107.6 7.3 L108.1 6.9 L108.6 7.2 L109.1 8.1 L109.6 8.5 L110.1 6.9 L110.6 7.0 L111.1 7.6 L111.6 8.2 L112.1 6.7 L112.6 8.2 L113.1 6.9 L113.6 7.3 L114.1 7.9 L114.6 7.9 L115.1 7.7 L115.6 6.7 L116.1 7.9 L116.6 7.6 L117.1 8.4 L117.6 8.4 L118.1 8.1 L118.6 8.2 L119.1 7.5 L119.6 7.4 L120.1 6.9 L120.5 6.7 L121.0 8.4 L121.5 7.6 L122.0 8.4 L122.5 7.8 L123.0 7.0 L123.5 7.3 L124.0 6.8 L124.5 7.7 L125.0 7.3 L125.5 7.7 L126.0 6.9 L126.5 8.0 L127.0 7.3 L127.5 8.1 L128.0 7.6 L128.5 7.0 L129.0 7.3 L129.5 7.6 L130.0 7.2 L130.5 8.5 L131.0 7.6 L131.5 8.3 L132.0 8.1 L132.5 7.9 L133.0 7.5 L133.5 6.9 L133.5 14.1 L133.0 13.5 L132.5 13.1 L132.0 12.9 L131.5 12.7 L131.0 13.4 L130.5 12.5 L130.0 13.8 L129.5 13.4 L129.0 13.7 L128.5 14.0 L128.0 13.4 L127.5 12.9 L127.0 13.7 L126.5 13.0 L126.0 14.1 L125.5 13.3 L125.0 13.7 L124.5 13.3 L124.0 14.2 L123.5 13.7 L123.0 14.0 L122.5 13.2 L122.0 12.6 L121.5 13.4 L121.0 12.6 L120.5 14.3 L120.1 14.1 L119.6 13.6 L119.1 13.5 L118.6 12.8 L118.1 12.9 L117.6 12.6 L117.1 12.6 L116.6 13.4 L116.1 13.1 L115.6 14.3 L115.1 13.3 L114.6 13.1 L114.1 13.1 L113.6 13.7 L113.1 14.1 L112.6 12.8 L112.1 14.3 L111.6 12.8 L111.1 13.4 L110.6 14.0 L110.1 14.1 L109.6 12.5 L109.1 12.9 L108.6 13.8 L108.1 14.1 L107.6 13.7 L107.1 12.9 L106.6 12.6 L106.1 14.3 L105.6 14.2 L105.1 14.4 L104.6 13.9 L104.1 13.8 L103.6 13.6 L103.1 13.1 L102.6 13.7 L102.1 13.0 L101.6 12.7 L101.1 13.6 L100.6 13.4 L100.1 13.8 L99.6 13.3 L99.1 12.6 L98.6 14.0 L98.1 13.9 L97.6 12.8 L97.1 14.1 L96.6 14.2 L96.1 14.0 L95.6 14.0 L95.1 13.7 L94.6 13.5 L94.1 13.2 L93.6 13.2 L93.2 12.7 L92.7 12.7 L92.2 13.7 L91.7 14.1 L91.2 13.9 L90.7 14.0 L90.2 13.7 L89.7 13.8 L89.2 12.8 L88.7 13.7 L88.2 14.1 L87.7 13.5 L87.2 13.3 L86.7 13.7 L86.2 13.8 L85.7 13.0 L85.2 13.5 L84.7 13.7 L84.2 13.7 L83.7 14.3 L83.2 12.6 L82.7 13.1 L82.2 13.8 L81.7 12.6 L81.2 13.3 L80.7 13.7 L80.2 12.9 L79.7 12.6 L79.2 13.1 L78.7 13.4 L78.2 13.6 L77.7 14.1 L77.2 13.6 L76.7 13.1 L76.2 14.2 L75.7 14.0 L75.2 12.9 L74.7 12.9 L74.2 12.9 L73.7 14.2 L73.2 14.0 L72.7 13.4 L72.2 14.1 L71.7 13.1 L71.2 13.8 L70.7 12.6 L70.2 13.8 L69.7 13.2 L69.2 12.6 L68.7 13.0 L68.2 13.7 L67.7 14.2 L67.2 13.2 L66.8 13.6 L66.3 13.7 L65.8 14.1 L65.3 13.6 L64.8 12.6 L64.3 14.3 L63.8 13.3 L63.3 14.1 L62.8 14.0 L62.3 13.2 L61.8 13.4 L61.3 12.8 L60.8 13.0 L60.3 14.3 L59.8 13.2 L59.3 13.2 L58.8 13.1 L58.3 12.8 L57.8 13.8 L57.3 14.2 L56.8 13.1 L56.3 12.8 L55.8 13.3 L55.3 12.9 L54.8 13.7 L54.3 13.6 L53.8 13.3 L53.3 12.8 L52.8 13.5 L52.3 13.4 L51.8 12.9 L51.3 14.3 L50.8 12.7 L50.3 14.1 L49.8 13.9 L49.3 13.2 L48.8 13.6 L48.3 12.8 L47.8 12.7 L47.3 14.2 L46.8 13.3 L46.3 12.7 L45.8 13.5 L45.3 13.4 L44.8 13.6 L44.3 14.0 L43.8 12.8 L43.3 14.1 L42.8 12.8 L42.3 12.5 L41.8 13.7 L41.3 12.8 L40.8 13.7 L40.4 13.1 L39.9 14.1 L39.4 13.3 L38.9 14.2 L38.4 13.7 L37.9 12.6 L37.4 13.6 L36.9 13.9 L36.4 14.2 L35.9 13.2 L35.4 13.9 L34.9 14.0 L34.4 13.3 L33.9 13.1 L33.4 13.7 L32.9 13.2 L32.4 14.1 L31.9 13.6 L31.4 13.5 L30.9 12.6 L30.4 13.0 L29.9 13.0 L29.4 14.0 L28.9 13.8 L28.4 13.5 L27.9 13.7 L27.4 13.6 L26.9 12.8 L26.4 13.1 L25.9 13.6 L25.4 12.7 L24.9 13.9 L24.4 13.6 L23.9 12.9 L23.4 13.8 L22.9 13.7 L22.4 13.9 L21.9 13.6 L21.4 14.1 L20.9 13.6 L20.4 13.1 L19.9 12.7 L19.4 14.2 L18.9 13.2 L18.4 12.7 L17.9 13.4 L17.4 14.0 L16.9 13.9 L16.4 14.3 L15.9 12.9 L15.4 13.8 L14.9 12.6 L14.4 13.0 L13.9 12.9 L13.5 13.2 L13.0 12.6 L12.5 14.2 L12.0 12.6 L11.5 12.8 L11.0 13.5 L10.5 13.1 L10.0 14.1 L9.5 12.9 L9.0 12.7 L8.5 14.3 L8.0 13.5 L7.5 13.4 L7.0 12.9 L6.5 13.5 L6.0 13.0 L5.5 12.6 L5.0 14.2 L4.5 12.5 L4.0 12.7 L3.5 14.3 L3.0 13.2 L2.5 13.3 L2.0 13.6 L1.5 13.9 L1.0 13.8 L0.5 14.3 Z" fill="#5fd08a"/><rect x="0.8" y="0.5" width="3.0" height="20.1" fill="#5fd08a" opacity="0.83"/><rect x="6.2" y="0.3" width="1.2" height="20.4" fill="#5fd08a" opacity="0.66"/><rect x="10.4" y="0.9" width="1.0" height="19.3" fill="#5fd08a" opacity="0.86"/><rect x="13.0" y="0.7" width="1.0" height="19.7" fill="#5fd08a" opacity="0.84"/><rect x="17.0" y="1.1" width="1.5" height="18.8" fill="#5fd08a" opacity="0.89"/><rect x="21.8" y="1.9" width="1.5" height="17.2" fill="#5fd08a" opacity="0.70"/><rect x="25.8" y="0.3" width="2.2" height="20.5" fill="#5fd08a" opacity="0.81"/><rect x="29.6" y="0.8" width="1.2" height="19.5" fill="#5fd08a" opacity="0.69"/><rect x="34.1" y="1.4" width="3.0" height="18.2" fill="#5fd08a" opacity="0.68"/><rect x="37.1" y="0.3" width="1.2" height="20.3" fill="#5fd08a" opacity="0.88"/><rect x="40.5" y="1.2" width="1.2" height="18.6" fill="#5fd08a" opacity="0.68"/><rect x="45.3" y="1.7" width="1.5" height="17.6" fill="#5fd08a" opacity="0.85"/><rect x="48.8" y="2.1" width="1.5" height="16.8" fill="#5fd08a" opacity="0.92"/><rect x="52.0" y="2.1" width="1.5" height="16.7" fill="#5fd08a" opacity="0.86"/><rect x="57.3" y="1.5" width="1.0" height="18.0" fill="#5fd08a" opacity="0.86"/><rect x="61.0" y="2.4" width="2.2" height="16.2" fill="#5fd08a" opacity="0.85"/><rect x="63.5" y="2.2" width="1.5" height="16.6" fill="#5fd08a" opacity="0.84"/><rect x="67.1" y="0.4" width="1.0" height="20.2" fill="#5fd08a" opacity="0.67"/><rect x="69.6" y="0.8" width="1.0" height="19.4" fill="#5fd08a" opacity="0.67"/><rect x="72.9" y="2.5" width="2.2" height="16.1" fill="#5fd08a" opacity="0.87"/><rect x="76.5" y="1.3" width="3.0" height="18.4" fill="#5fd08a" opacity="0.91"/><rect x="81.2" y="1.3" width="2.2" height="18.3" fill="#5fd08a" opacity="0.78"/><rect x="84.6" y="1.7" width="3.0" height="17.6" fill="#5fd08a" opacity="0.90"/><rect x="89.7" y="1.1" width="1.0" height="18.8" fill="#5fd08a" opacity="0.70"/><rect x="93.7" y="1.3" width="1.5" height="18.5" fill="#5fd08a" opacity="0.87"/><rect x="96.7" y="1.3" width="1.5" height="18.3" fill="#5fd08a" opacity="0.99"/><rect x="101.0" y="1.5" width="1.5" height="18.1" fill="#5fd08a" opacity="0.86"/><rect x="104.6" y="0.6" width="3.0" height="19.9" fill="#5fd08a" opacity="0.69"/><rect x="109.5" y="2.5" width="1.2" height="16.0" fill="#5fd08a" opacity="0.85"/><rect x="114.6" y="0.9" width="1.0" height="19.1" fill="#5fd08a" opacity="0.81"/><rect x="117.3" y="0.1" width="3.0" height="20.8" fill="#5fd08a" opacity="0.89"/><rect x="121.9" y="1.8" width="1.0" height="17.4" fill="#5fd08a" opacity="0.80"/><rect x="126.8" y="2.5" width="1.0" height="16.1" fill="#5fd08a" opacity="0.75"/><rect x="129.3" y="2.3" width="3.0" height="16.4" fill="#5fd08a" opacity="0.66"/><rect x="133.0" y="1.5" width="0.5" height="18.0" fill="#5fd08a" opacity="0.94"/></svg>
<div class="a" style="left:917.5px;top:790px;width:519.5px;height:27px;background:#2b2e32"></div>
<span class="a sb" style="left:951px;top:798px;font-size:10.5px;color:#6fd392;line-height:12px;white-space:nowrap">Don't Hate Drums D</span>
<span class="a sb" style="left:1254px;top:798px;font-size:10.5px;color:#6fd392;line-height:12px">172</span>
<span class="a sb" style="left:1293.5px;top:798px;font-size:10.5px;color:#6fd392;line-height:12px">8 Bars</span>
<svg style="left:1418px;top:799.5px" width="10" height="9" viewBox="0 0 10 9"><path d="M5 8.2 L1.3 4.6 C-0.1 3 0.7 0.6 2.7 0.6 C3.8 0.6 4.5 1.2 5 2 C5.5 1.2 6.2 0.6 7.3 0.6 C9.3 0.6 10.1 3 8.7 4.6 Z" fill="none" stroke="#6fd392" stroke-width="1.1"/></svg>
<svg style="left:1109.5px;top:794px" width="134" height="21" viewBox="0 0 134 21"><path d="M0.5 6.7 L1.0 7.2 L1.5 7.1 L2.0 7.4 L2.5 7.7 L3.0 7.8 L3.5 6.7 L4.0 8.3 L4.5 8.5 L5.0 6.8 L5.5 8.4 L6.0 8.0 L6.5 7.5 L7.0 8.1 L7.5 7.6 L8.0 7.5 L8.5 6.7 L9.0 8.3 L9.5 8.1 L10.0 6.9 L10.5 7.9 L11.0 7.5 L11.5 8.2 L12.0 8.4 L12.5 6.8 L13.0 8.4 L13.5 7.8 L13.9 8.1 L14.4 8.0 L14.9 8.4 L15.4 7.2 L15.9 8.1 L16.4 6.7 L16.9 7.1 L17.4 7.0 L17.9 7.6 L18.4 8.3 L18.9 7.8 L19.4 6.8 L19.9 8.3 L20.4 7.9 L20.9 7.4 L21.4 6.9 L21.9 7.4 L22.4 7.1 L22.9 7.3 L23.4 7.2 L23.9 8.1 L24.4 7.4 L24.9 7.1 L25.4 8.3 L25.9 7.4 L26.4 7.9 L26.9 8.2 L27.4 7.4 L27.9 7.3 L28.4 7.5 L28.9 7.2 L29.4 7.0 L29.9 8.0 L30.4 8.0 L30.9 8.4 L31.4 7.5 L31.9 7.4 L32.4 6.9 L32.9 7.8 L33.4 7.3 L33.9 7.9 L34.4 7.7 L34.9 7.0 L35.4 7.1 L35.9 7.8 L36.4 6.8 L36.9 7.1 L37.4 7.4 L37.9 8.4 L38.4 7.3 L38.9 6.8 L39.4 7.7 L39.9 6.9 L40.4 7.9 L40.8 7.3 L41.3 8.2 L41.8 7.3 L42.3 8.5 L42.8 8.2 L43.3 6.9 L43.8 8.2 L44.3 7.0 L44.8 7.4 L45.3 7.6 L45.8 7.5 L46.3 8.3 L46.8 7.7 L47.3 6.8 L47.8 8.3 L48.3 8.2 L48.8 7.4 L49.3 7.8 L49.8 7.1 L50.3 6.9 L50.8 8.3 L51.3 6.7 L51.8 8.1 L52.3 7.6 L52.8 7.5 L53.3 8.2 L53.8 7.7 L54.3 7.4 L54.8 7.3 L55.3 8.1 L55.8 7.7 L56.3 8.2 L56.8 7.9 L57.3 6.8 L57.8 7.2 L58.3 8.2 L58.8 7.9 L59.3 7.8 L59.8 7.8 L60.3 6.7 L60.8 8.0 L61.3 8.2 L61.8 7.6 L62.3 7.8 L62.8 7.0 L63.3 6.9 L63.8 7.7 L64.3 6.7 L64.8 8.4 L65.3 7.4 L65.8 6.9 L66.3 7.3 L66.8 7.4 L67.2 7.8 L67.7 6.8 L68.2 7.3 L68.7 8.0 L69.2 8.4 L69.7 7.8 L70.2 7.2 L70.7 8.4 L71.2 7.2 L71.7 7.9 L72.2 6.9 L72.7 7.6 L73.2 7.0 L73.7 6.8 L74.2 8.1 L74.7 8.1 L75.2 8.1 L75.7 7.0 L76.2 6.8 L76.7 7.9 L77.2 7.4 L77.7 6.9 L78.2 7.4 L78.7 7.6 L79.2 7.9 L79.7 8.4 L80.2 8.1 L80.7 7.3 L81.2 7.7 L81.7 8.4 L82.2 7.2 L82.7 7.9 L83.2 8.4 L83.7 6.7 L84.2 7.3 L84.7 7.3 L85.2 7.5 L85.7 8.0 L86.2 7.2 L86.7 7.3 L87.2 7.7 L87.7 7.5 L88.2 6.9 L88.7 7.3 L89.2 8.2 L89.7 7.2 L90.2 7.3 L90.7 7.0 L91.2 7.1 L91.7 6.9 L92.2 7.3 L92.7 8.3 L93.2 8.3 L93.6 7.8 L94.1 7.8 L94.6 7.5 L95.1 7.3 L95.6 7.0 L96.1 7.0 L96.6 6.8 L97.1 6.9 L97.6 8.2 L98.1 7.1 L98.6 7.0 L99.1 8.4 L99.6 7.7 L100.1 7.2 L100.6 7.6 L101.1 7.4 L101.6 8.3 L102.1 8.0 L102.6 7.3 L103.1 7.9 L103.6 7.4 L104.1 7.2 L104.6 7.1 L105.1 6.6 L105.6 6.8 L106.1 6.7 L106.6 8.4 L107.1 8.1 L107.6 7.3 L108.1 6.9 L108.6 7.2 L109.1 8.1 L109.6 8.5 L110.1 6.9 L110.6 7.0 L111.1 7.6 L111.6 8.2 L112.1 6.7 L112.6 8.2 L113.1 6.9 L113.6 7.3 L114.1 7.9 L114.6 7.9 L115.1 7.7 L115.6 6.7 L116.1 7.9 L116.6 7.6 L117.1 8.4 L117.6 8.4 L118.1 8.1 L118.6 8.2 L119.1 7.5 L119.6 7.4 L120.1 6.9 L120.5 6.7 L121.0 8.4 L121.5 7.6 L122.0 8.4 L122.5 7.8 L123.0 7.0 L123.5 7.3 L124.0 6.8 L124.5 7.7 L125.0 7.3 L125.5 7.7 L126.0 6.9 L126.5 8.0 L127.0 7.3 L127.5 8.1 L128.0 7.6 L128.5 7.0 L129.0 7.3 L129.5 7.6 L130.0 7.2 L130.5 8.5 L131.0 7.6 L131.5 8.3 L132.0 8.1 L132.5 7.9 L133.0 7.5 L133.5 6.9 L133.5 14.1 L133.0 13.5 L132.5 13.1 L132.0 12.9 L131.5 12.7 L131.0 13.4 L130.5 12.5 L130.0 13.8 L129.5 13.4 L129.0 13.7 L128.5 14.0 L128.0 13.4 L127.5 12.9 L127.0 13.7 L126.5 13.0 L126.0 14.1 L125.5 13.3 L125.0 13.7 L124.5 13.3 L124.0 14.2 L123.5 13.7 L123.0 14.0 L122.5 13.2 L122.0 12.6 L121.5 13.4 L121.0 12.6 L120.5 14.3 L120.1 14.1 L119.6 13.6 L119.1 13.5 L118.6 12.8 L118.1 12.9 L117.6 12.6 L117.1 12.6 L116.6 13.4 L116.1 13.1 L115.6 14.3 L115.1 13.3 L114.6 13.1 L114.1 13.1 L113.6 13.7 L113.1 14.1 L112.6 12.8 L112.1 14.3 L111.6 12.8 L111.1 13.4 L110.6 14.0 L110.1 14.1 L109.6 12.5 L109.1 12.9 L108.6 13.8 L108.1 14.1 L107.6 13.7 L107.1 12.9 L106.6 12.6 L106.1 14.3 L105.6 14.2 L105.1 14.4 L104.6 13.9 L104.1 13.8 L103.6 13.6 L103.1 13.1 L102.6 13.7 L102.1 13.0 L101.6 12.7 L101.1 13.6 L100.6 13.4 L100.1 13.8 L99.6 13.3 L99.1 12.6 L98.6 14.0 L98.1 13.9 L97.6 12.8 L97.1 14.1 L96.6 14.2 L96.1 14.0 L95.6 14.0 L95.1 13.7 L94.6 13.5 L94.1 13.2 L93.6 13.2 L93.2 12.7 L92.7 12.7 L92.2 13.7 L91.7 14.1 L91.2 13.9 L90.7 14.0 L90.2 13.7 L89.7 13.8 L89.2 12.8 L88.7 13.7 L88.2 14.1 L87.7 13.5 L87.2 13.3 L86.7 13.7 L86.2 13.8 L85.7 13.0 L85.2 13.5 L84.7 13.7 L84.2 13.7 L83.7 14.3 L83.2 12.6 L82.7 13.1 L82.2 13.8 L81.7 12.6 L81.2 13.3 L80.7 13.7 L80.2 12.9 L79.7 12.6 L79.2 13.1 L78.7 13.4 L78.2 13.6 L77.7 14.1 L77.2 13.6 L76.7 13.1 L76.2 14.2 L75.7 14.0 L75.2 12.9 L74.7 12.9 L74.2 12.9 L73.7 14.2 L73.2 14.0 L72.7 13.4 L72.2 14.1 L71.7 13.1 L71.2 13.8 L70.7 12.6 L70.2 13.8 L69.7 13.2 L69.2 12.6 L68.7 13.0 L68.2 13.7 L67.7 14.2 L67.2 13.2 L66.8 13.6 L66.3 13.7 L65.8 14.1 L65.3 13.6 L64.8 12.6 L64.3 14.3 L63.8 13.3 L63.3 14.1 L62.8 14.0 L62.3 13.2 L61.8 13.4 L61.3 12.8 L60.8 13.0 L60.3 14.3 L59.8 13.2 L59.3 13.2 L58.8 13.1 L58.3 12.8 L57.8 13.8 L57.3 14.2 L56.8 13.1 L56.3 12.8 L55.8 13.3 L55.3 12.9 L54.8 13.7 L54.3 13.6 L53.8 13.3 L53.3 12.8 L52.8 13.5 L52.3 13.4 L51.8 12.9 L51.3 14.3 L50.8 12.7 L50.3 14.1 L49.8 13.9 L49.3 13.2 L48.8 13.6 L48.3 12.8 L47.8 12.7 L47.3 14.2 L46.8 13.3 L46.3 12.7 L45.8 13.5 L45.3 13.4 L44.8 13.6 L44.3 14.0 L43.8 12.8 L43.3 14.1 L42.8 12.8 L42.3 12.5 L41.8 13.7 L41.3 12.8 L40.8 13.7 L40.4 13.1 L39.9 14.1 L39.4 13.3 L38.9 14.2 L38.4 13.7 L37.9 12.6 L37.4 13.6 L36.9 13.9 L36.4 14.2 L35.9 13.2 L35.4 13.9 L34.9 14.0 L34.4 13.3 L33.9 13.1 L33.4 13.7 L32.9 13.2 L32.4 14.1 L31.9 13.6 L31.4 13.5 L30.9 12.6 L30.4 13.0 L29.9 13.0 L29.4 14.0 L28.9 13.8 L28.4 13.5 L27.9 13.7 L27.4 13.6 L26.9 12.8 L26.4 13.1 L25.9 13.6 L25.4 12.7 L24.9 13.9 L24.4 13.6 L23.9 12.9 L23.4 13.8 L22.9 13.7 L22.4 13.9 L21.9 13.6 L21.4 14.1 L20.9 13.6 L20.4 13.1 L19.9 12.7 L19.4 14.2 L18.9 13.2 L18.4 12.7 L17.9 13.4 L17.4 14.0 L16.9 13.9 L16.4 14.3 L15.9 12.9 L15.4 13.8 L14.9 12.6 L14.4 13.0 L13.9 12.9 L13.5 13.2 L13.0 12.6 L12.5 14.2 L12.0 12.6 L11.5 12.8 L11.0 13.5 L10.5 13.1 L10.0 14.1 L9.5 12.9 L9.0 12.7 L8.5 14.3 L8.0 13.5 L7.5 13.4 L7.0 12.9 L6.5 13.5 L6.0 13.0 L5.5 12.6 L5.0 14.2 L4.5 12.5 L4.0 12.7 L3.5 14.3 L3.0 13.2 L2.5 13.3 L2.0 13.6 L1.5 13.9 L1.0 13.8 L0.5 14.3 Z" fill="#5fd08a"/><rect x="0.8" y="0.5" width="3.0" height="20.1" fill="#5fd08a" opacity="0.83"/><rect x="6.2" y="0.3" width="1.2" height="20.4" fill="#5fd08a" opacity="0.66"/><rect x="10.4" y="0.9" width="1.0" height="19.3" fill="#5fd08a" opacity="0.86"/><rect x="13.0" y="0.7" width="1.0" height="19.7" fill="#5fd08a" opacity="0.84"/><rect x="17.0" y="1.1" width="1.5" height="18.8" fill="#5fd08a" opacity="0.89"/><rect x="21.8" y="1.9" width="1.5" height="17.2" fill="#5fd08a" opacity="0.70"/><rect x="25.8" y="0.3" width="2.2" height="20.5" fill="#5fd08a" opacity="0.81"/><rect x="29.6" y="0.8" width="1.2" height="19.5" fill="#5fd08a" opacity="0.69"/><rect x="34.1" y="1.4" width="3.0" height="18.2" fill="#5fd08a" opacity="0.68"/><rect x="37.1" y="0.3" width="1.2" height="20.3" fill="#5fd08a" opacity="0.88"/><rect x="40.5" y="1.2" width="1.2" height="18.6" fill="#5fd08a" opacity="0.68"/><rect x="45.3" y="1.7" width="1.5" height="17.6" fill="#5fd08a" opacity="0.85"/><rect x="48.8" y="2.1" width="1.5" height="16.8" fill="#5fd08a" opacity="0.92"/><rect x="52.0" y="2.1" width="1.5" height="16.7" fill="#5fd08a" opacity="0.86"/><rect x="57.3" y="1.5" width="1.0" height="18.0" fill="#5fd08a" opacity="0.86"/><rect x="61.0" y="2.4" width="2.2" height="16.2" fill="#5fd08a" opacity="0.85"/><rect x="63.5" y="2.2" width="1.5" height="16.6" fill="#5fd08a" opacity="0.84"/><rect x="67.1" y="0.4" width="1.0" height="20.2" fill="#5fd08a" opacity="0.67"/><rect x="69.6" y="0.8" width="1.0" height="19.4" fill="#5fd08a" opacity="0.67"/><rect x="72.9" y="2.5" width="2.2" height="16.1" fill="#5fd08a" opacity="0.87"/><rect x="76.5" y="1.3" width="3.0" height="18.4" fill="#5fd08a" opacity="0.91"/><rect x="81.2" y="1.3" width="2.2" height="18.3" fill="#5fd08a" opacity="0.78"/><rect x="84.6" y="1.7" width="3.0" height="17.6" fill="#5fd08a" opacity="0.90"/><rect x="89.7" y="1.1" width="1.0" height="18.8" fill="#5fd08a" opacity="0.70"/><rect x="93.7" y="1.3" width="1.5" height="18.5" fill="#5fd08a" opacity="0.87"/><rect x="96.7" y="1.3" width="1.5" height="18.3" fill="#5fd08a" opacity="0.99"/><rect x="101.0" y="1.5" width="1.5" height="18.1" fill="#5fd08a" opacity="0.86"/><rect x="104.6" y="0.6" width="3.0" height="19.9" fill="#5fd08a" opacity="0.69"/><rect x="109.5" y="2.5" width="1.2" height="16.0" fill="#5fd08a" opacity="0.85"/><rect x="114.6" y="0.9" width="1.0" height="19.1" fill="#5fd08a" opacity="0.81"/><rect x="117.3" y="0.1" width="3.0" height="20.8" fill="#5fd08a" opacity="0.89"/><rect x="121.9" y="1.8" width="1.0" height="17.4" fill="#5fd08a" opacity="0.80"/><rect x="126.8" y="2.5" width="1.0" height="16.1" fill="#5fd08a" opacity="0.75"/><rect x="129.3" y="2.3" width="3.0" height="16.4" fill="#5fd08a" opacity="0.66"/><rect x="133.0" y="1.5" width="0.5" height="18.0" fill="#5fd08a" opacity="0.94"/></svg>
<div class="a" style="left:917.5px;top:818px;width:519.5px;height:27px;background:#2b2e32"></div>
<svg style="left:1109.5px;top:821px" width="134" height="21" viewBox="0 0 134 21"><g clip-path="none"><rect x="0.8" y="0" width="0.7" height="4.5" fill="#5fd08a" opacity="0.76"/><rect x="6.0" y="0" width="0.7" height="4.5" fill="#5fd08a" opacity="0.69"/><rect x="13.6" y="0" width="0.9" height="4.5" fill="#5fd08a" opacity="0.83"/><rect x="18.7" y="0" width="0.6" height="4.5" fill="#5fd08a" opacity="0.93"/><rect x="24.3" y="0" width="0.9" height="4.5" fill="#5fd08a" opacity="0.66"/><rect x="31.5" y="0" width="1.3" height="4.5" fill="#5fd08a" opacity="0.68"/><rect x="36.8" y="0" width="0.6" height="4.5" fill="#5fd08a" opacity="0.88"/><rect x="43.6" y="0" width="1.8" height="4.5" fill="#5fd08a" opacity="0.80"/><rect x="49.8" y="0" width="0.9" height="4.5" fill="#5fd08a" opacity="0.96"/><rect x="55.9" y="0" width="0.6" height="4.5" fill="#5fd08a" opacity="0.93"/><rect x="62.1" y="0" width="0.9" height="4.5" fill="#5fd08a" opacity="0.85"/><rect x="70.0" y="0" width="0.9" height="4.5" fill="#5fd08a" opacity="0.73"/><rect x="75.5" y="0" width="0.9" height="4.5" fill="#5fd08a" opacity="1.00"/><rect x="83.7" y="0" width="0.7" height="4.5" fill="#5fd08a" opacity="0.74"/><rect x="90.3" y="0" width="0.9" height="4.5" fill="#5fd08a" opacity="0.99"/><rect x="98.3" y="0" width="1.8" height="4.5" fill="#5fd08a" opacity="0.81"/><rect x="106.8" y="0" width="0.6" height="4.5" fill="#5fd08a" opacity="0.69"/><rect x="114.9" y="0" width="1.8" height="4.5" fill="#5fd08a" opacity="0.69"/><rect x="121.4" y="0" width="1.8" height="4.5" fill="#5fd08a" opacity="0.85"/><rect x="127.8" y="0" width="1.3" height="4.5" fill="#5fd08a" opacity="0.91"/></g></svg>
<svg style="left:924.5px;top:488px" width="14" height="14" viewBox="0 0 14 14"><path d="M0.8 13.5 L2.5 9.5 L8.5 3.8 L11.5 2.2 L13 3.2 L12.5 5 L9 8.5 L4 12 Z" fill="#74c2e0"/><g fill="#74c2e0"><circle cx="3" cy="7.6" r="0.95"/><circle cx="5.2" cy="5.6" r="0.95"/><circle cx="7.4" cy="3.6" r="0.95"/><circle cx="9.6" cy="1.4" r="0.95"/></g></svg>
<svg style="left:924.5px;top:713px" width="16" height="14" viewBox="0 0 16 14"><rect x="5" y="0.5" width="2.5" height="1.3" fill="#6fd392"/><rect x="8.5" y="0.5" width="2.5" height="1.3" fill="#6fd392"/><path d="M0 3 L4 3 L4 2.3 L12 2.3 L12 3 L16 3 L16 6.5 L12.5 6.5 L12.5 4.5 L3.5 4.5 L3.5 6.5 L0 6.5 Z" fill="#6fd392"/><circle cx="8" cy="8" r="4.6" fill="none" stroke="#6fd392" stroke-width="1.5"/><path d="M4.3 11.5 L3.5 13.5 M11.7 11.5 L12.5 13.5" stroke="#6fd392" stroke-width="1.1"/></svg>
<div class="a" style="left:875px;top:825.5px;width:570px;height:15.5px;background:#363a41"></div>
<div class="a" style="left:883.8px;top:492.4px;width:24px;height:24px;border-radius:50%;background:#33373c"></div>
<span class="a" style="left:883.8px;width:24px;text-align:center;top:497.9px;font-size:12.5px;font-weight:bold;color:#f0f0f0;line-height:15px">1</span>
<div class="a" style="left:883.8px;top:542px;width:24px;height:24px;border-radius:50%;background:#33373c"></div>
<span class="a" style="left:883.8px;width:24px;text-align:center;top:547.5px;font-size:12.5px;font-weight:bold;color:#f0f0f0;line-height:15px">2</span>
<div class="a" style="left:883.8px;top:591.5px;width:24px;height:24px;border-radius:50%;background:#33373c"></div>
<span class="a" style="left:883.8px;width:24px;text-align:center;top:597.0px;font-size:12.5px;font-weight:bold;color:#f0f0f0;line-height:15px">3</span>
<div class="a" style="left:883.8px;top:641.3px;width:24px;height:24px;border-radius:50%;background:#33373c"></div>
<span class="a" style="left:883.8px;width:24px;text-align:center;top:646.8px;font-size:12.5px;font-weight:bold;color:#f0f0f0;line-height:15px">4</span>
<div class="a" style="left:883.8px;top:691.5px;width:24px;height:24px;border-radius:50%;background:#33373c"></div>
<span class="a" style="left:883.8px;width:24px;text-align:center;top:697.0px;font-size:12.5px;font-weight:bold;color:#f0f0f0;line-height:15px">5</span>
<div class="a" style="left:883.8px;top:741.5px;width:24px;height:24px;border-radius:50%;background:#6bb7d4"></div>
<span class="a" style="left:883.8px;width:24px;text-align:center;top:747.0px;font-size:12.5px;font-weight:bold;color:#263036;line-height:15px">6</span>
<div class="a" style="left:883.8px;top:790.6px;width:24px;height:24px;border-radius:50%;background:#33373c"></div>
<span class="a" style="left:883.8px;width:24px;text-align:center;top:796.1px;font-size:12.5px;font-weight:bold;color:#f0f0f0;line-height:15px">7</span>
<div class="a" style="left:1437px;top:461px;width:8px;height:364.5px;background:#2a2d31"></div>
<div class="a" style="left:1439px;top:484px;width:4px;height:42px;background:#4a4f55;border-radius:2px"></div>
</body></html>
